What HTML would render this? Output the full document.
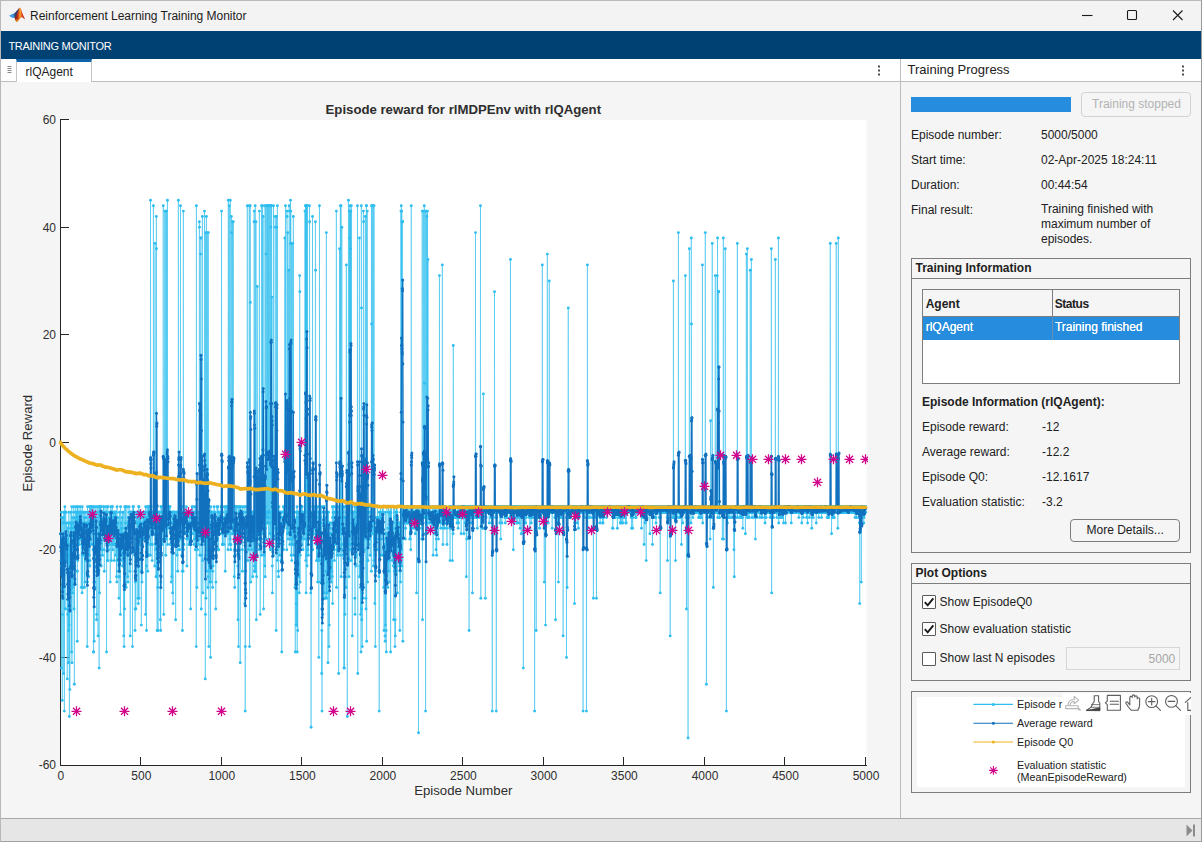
<!DOCTYPE html>
<html lang="en"><head><meta charset="utf-8">
<title>Reinforcement Learning Training Monitor</title>
<style>
*{box-sizing:border-box;margin:0;padding:0}
html,body{width:1202px;height:842px;overflow:hidden;background:#f5f5f5}
body{font-family:"Liberation Sans",sans-serif;font-size:12px;color:#212121;position:relative}
.abs,.abs>*{position:absolute}
#win{position:absolute;left:0;top:0;width:1202px;height:842px;border:1px solid #b9b9b9;border-right-color:#9a9a9a;border-bottom-color:#a0a0a0;overflow:hidden}
#titlebar{left:0;top:0;width:1200px;height:30px;background:#f3f3f3}
#titlebar .t{left:29.1px;top:7px;font-size:12px;line-height:16px;color:#1b1b1b;white-space:nowrap;letter-spacing:-0.03px}
#ribbon{left:0;top:30px;width:1200px;height:28px;background:#004173}
#ribbon .t{left:7.4px;top:8px;font-size:11px;line-height:14px;color:#fff;white-space:nowrap;letter-spacing:-0.27px}
#tabrow{left:0;top:58px;width:1200px;height:23px;background:#fff;border-bottom:1px solid #bdbdbd}
#tab{left:15px;top:58px;width:76px;height:23px;background:#fff;border-left:1px solid #c4c4c4;border-right:1px solid #c4c4c4;border-top:3px solid #0f62a8}
#tab .t{left:8.5px;top:2.5px;font-size:12px;line-height:14px;white-space:nowrap;color:#212121}
.vdiv{left:899px;top:58px;width:1px;height:759px;background:#bdbdbd}
.lbl{white-space:nowrap;font-size:12px;line-height:14px;color:#212121}
.panel{border:1px solid #7d7d7d;background:#f5f5f5}
.phead{left:0;top:0;right:0;height:20px;border-bottom:1px solid #7d7d7d}
.phead span{position:absolute;left:3.5px;top:2px;font-weight:bold;font-size:12px;line-height:14px;white-space:nowrap}
.cb{width:14px;height:14px;border:1px solid #5a5a5a;background:#fff;border-radius:1px}
#status{left:0;top:817px;width:1200px;height:23px;background:#e6e6e6;border-top:1px solid #a8a8a8}
</style></head><body>
<div id="win" class="abs">
<div id="titlebar" class="abs">
<svg style="left:3px;top:1px" width="30" height="26" viewBox="4 2 30 26">
<defs><linearGradient id="mg" gradientUnits="userSpaceOnUse" x1="14.5" y1="0" x2="25" y2="0"><stop offset="0" stop-color="#6e120c"/><stop offset="0.22" stop-color="#a3241a"/><stop offset="0.4" stop-color="#de541c"/><stop offset="0.52" stop-color="#f6a030"/><stop offset="0.6" stop-color="#ee8a26"/><stop offset="0.72" stop-color="#d8441c"/><stop offset="0.86" stop-color="#be2a1c"/><stop offset="1" stop-color="#b8261e"/></linearGradient>
<linearGradient id="mb" gradientUnits="userSpaceOnUse" x1="9" y1="17" x2="18.5" y2="9"><stop offset="0" stop-color="#4aa3e6"/><stop offset="0.55" stop-color="#2f86d6"/><stop offset="1" stop-color="#1c55a8"/></linearGradient>
<linearGradient id="my" gradientUnits="userSpaceOnUse" x1="0" y1="18" x2="0" y2="22"><stop offset="0" stop-color="#f08a20" stop-opacity="0"/><stop offset="1" stop-color="#fac81e"/></linearGradient></defs>
<path d="M9.1 15.6L11.6 14.4L14.4 13.3L16.3 11.5L18 9.6L19 8.4L18.4 12.2L16.6 15L15 17.4L13.4 18L11 17.2Z" fill="url(#mb)"/>
<path d="M14.2 13.9L16.3 11.6L18.2 9.3L19.3 7.8L19 11L17 14.8L15.2 17.8L14.6 17.8Z" fill="#3c2a4a" opacity="0.75"/>
<path d="M19.3 7.8C19.8 7.6 20.3 7.7 20.6 8.1C21.1 9.2 21.4 10.2 21.8 11.4L22.9 14.4L24.1 17.2L25 19.2L25 19.6C24.4 19 23.8 18.4 22.8 17.7C22.2 17.3 21.6 17.3 21.2 17.5C20.5 18 20 18.6 19.5 19.2L17.6 21.4C17.2 21.9 16.6 22 16.3 21.8C15.8 21.3 15.6 20.8 15.4 20.3L14.6 17.9L16.3 15L18 11.6Z" fill="url(#mg)"/>
<path d="M15.4 20.3L14.9 18.8L19.6 19.1L17.6 21.4C17.2 21.9 16.6 22 16.3 21.8C15.8 21.3 15.6 20.8 15.4 20.3Z" fill="url(#my)"/>
</svg>
<div class="t">Reinforcement Learning Training Monitor</div>
<svg style="left:1080px;top:6px" width="115" height="16" viewBox="-5 0 115 16" fill="none" stroke="#1a1a1a" stroke-width="1.1">
<path d="M-4 8.5h10.5"/><rect x="41.5" y="3.5" width="9" height="9" rx="1"/><path d="M87 3.5l9.5 9.5M96.5 3.5l-9.5 9.5"/></svg>
</div>
<div id="ribbon" class="abs"><div class="t">TRAINING MONITOR</div></div>
<div id="tabrow" class="abs">
<svg style="left:6px;top:7px" width="6" height="9" viewBox="0 0 6 9" stroke="#8a8a8a" stroke-width="1"><path d="M0.5 0.5h4M0.5 2.5h4M0.5 4.5h4M0.5 6.5h4"/></svg>
<svg style="left:876px;top:6px" width="4" height="12" viewBox="0 0 4 12" fill="#4d4d4d"><rect x="1" y="0.5" width="2" height="2"/><rect x="1" y="4.5" width="2" height="2"/><rect x="1" y="8.5" width="2" height="2"/></svg>
<svg style="left:1179.7px;top:6px" width="4" height="12" viewBox="0 0 4 12" fill="#4d4d4d"><rect x="1" y="0.5" width="2" height="2"/><rect x="1" y="4.5" width="2" height="2"/><rect x="1" y="8.5" width="2" height="2"/></svg>
<div class="lbl" style="left:906.5px;top:3px;font-size:13px;line-height:15px;color:#212121">Training Progress</div>
</div>
<div id="tab" class="abs"><div class="t">rlQAgent</div></div>
<div class="vdiv abs"></div>
<svg class="chart" style="position:absolute;left:0;top:81px" width="899" height="736" viewBox="1 82 899 736" font-family="'Liberation Sans',sans-serif">
<defs>
<clipPath id="pc"><rect x="59" y="118" width="809" height="649"/></clipPath>
<marker id="mr" markerWidth="4" markerHeight="4" refX="2" refY="2" markerUnits="userSpaceOnUse"><circle cx="2" cy="2" r="1.45" fill="#2FBEEF"/></marker>
<marker id="ma" markerWidth="4" markerHeight="4" refX="2" refY="2" markerUnits="userSpaceOnUse"><circle cx="2" cy="2" r="1.5" fill="#1171BE"/></marker>
</defs>
<rect x="61" y="120" width="805.5" height="645" fill="#fff"/>
<g stroke="#262626" stroke-width="1" fill="none" shape-rendering="crispEdges">
<path d="M60.5 119.5V765.5M60 765.5H866.5"/>
<path d="M140.5 765V757M221.5 765V757M301.5 765V757M382.5 765V757M462.5 765V757M543.5 765V757M623.5 765V757M704.5 765V757M784.5 765V757M865.5 765V757M60 657.5H69M60 549.5H69M60 442.5H69M60 334.5H69M60 227.5H69M60 119.5H69"/>
</g>
<g clip-path="url(#pc)" fill="none" stroke-linejoin="round">
<polyline stroke="#2FBEEF" stroke-width="0.55" marker-start="url(#mr)" marker-mid="url(#mr)" marker-end="url(#mr)" points="60.66,533.7 60.82,560.6 60.98,544.5 61.14,566.0 61.31,668.1 61.47,512.2 61.63,517.6 61.79,560.6 61.95,517.6 62.11,587.5 62.27,700.4 62.43,614.4 62.59,539.1 62.75,549.8 62.92,517.6 63.08,523.0 63.24,539.1 63.40,555.2 63.56,587.5 63.72,673.5 63.88,512.2 64.04,523.0 64.20,512.2 64.36,711.1 64.53,549.8 64.69,533.7 64.85,506.8 65.01,512.2 65.17,609.0 65.33,533.7 65.49,560.6 65.65,512.2 65.81,512.2 65.98,539.1 66.14,555.2 66.30,555.2 66.46,560.6 66.62,523.0 66.78,549.8 66.94,539.1 67.10,555.2 67.26,678.9 67.42,539.1 67.59,609.0 67.75,614.4 67.91,528.3 68.07,555.2 68.23,662.8 68.39,523.0 68.55,592.9 68.71,630.5 68.87,512.2 69.04,625.1 69.20,544.5 69.36,716.5 69.52,549.8 69.68,549.8 69.84,689.6 70.00,549.8 70.16,523.0 70.32,523.0 70.48,555.2 70.65,528.3 70.81,544.5 70.97,512.2 71.13,592.9 71.29,528.3 71.45,523.0 71.61,652.0 71.77,506.8 71.93,662.8 72.09,539.1 72.26,517.6 72.42,587.5 72.58,533.7 72.74,592.9 72.90,549.8 73.06,523.0 73.22,566.0 73.38,549.8 73.54,528.3 73.71,512.2 73.87,506.8 74.03,609.0 74.19,517.6 74.35,684.3 74.51,528.3 74.67,582.1 74.83,582.1 74.99,544.5 75.15,544.5 75.32,539.1 75.48,517.6 75.64,523.0 75.80,506.8 75.96,549.8 76.12,512.2 76.28,544.5 76.44,512.2 76.60,539.1 76.77,539.1 76.93,517.6 77.09,512.2 77.25,641.2 77.41,571.3 77.57,506.8 77.73,560.6 77.89,506.8 78.05,528.3 78.21,555.2 78.38,539.1 78.54,517.6 78.70,523.0 78.86,539.1 79.02,512.2 79.18,539.1 79.34,512.2 79.50,544.5 79.66,523.0 79.82,523.0 79.99,512.2 80.15,506.8 80.31,517.6 80.47,539.1 80.63,539.1 80.79,512.2 80.95,533.7 81.11,512.2 81.27,587.5 81.44,528.3 81.60,512.2 81.76,512.2 81.92,539.1 82.08,592.9 82.24,506.8 82.40,555.2 82.56,523.0 82.72,587.5 82.88,539.1 83.05,533.7 83.21,539.1 83.37,523.0 83.53,539.1 83.69,512.2 83.85,512.2 84.01,533.7 84.17,555.2 84.33,517.6 84.49,587.5 84.66,512.2 84.82,517.6 84.98,582.1 85.14,549.8 85.30,555.2 85.46,560.6 85.62,544.5 85.78,528.3 85.94,512.2 86.11,517.6 86.27,523.0 86.43,549.8 86.59,523.0 86.75,555.2 86.91,560.6 87.07,582.1 87.23,646.6 87.39,582.1 87.55,506.8 87.72,539.1 87.88,528.3 88.04,544.5 88.20,539.1 88.36,523.0 88.52,512.2 88.68,576.7 88.84,549.8 89.00,523.0 89.17,528.3 89.33,555.2 89.49,506.8 89.65,506.8 89.81,566.0 89.97,560.6 90.13,512.2 90.29,512.2 90.45,506.8 90.61,528.3 90.78,517.6 90.94,539.1 91.10,544.5 91.26,506.8 91.42,528.3 91.58,506.8 91.74,544.5 91.90,528.3 92.06,517.6 92.22,512.2 92.39,517.6 92.55,523.0 92.71,512.2 92.87,506.8 93.03,533.7 93.19,549.8 93.35,549.8 93.51,652.0 93.67,652.0 93.84,582.1 94.00,506.8 94.16,641.2 94.32,566.0 94.48,512.2 94.64,544.5 94.80,533.7 94.96,582.1 95.12,587.5 95.28,517.6 95.45,512.2 95.61,544.5 95.77,506.8 95.93,528.3 96.09,512.2 96.25,544.5 96.41,544.5 96.57,619.7 96.73,614.4 96.90,533.7 97.06,566.0 97.22,506.8 97.38,517.6 97.54,571.3 97.70,560.6 97.86,566.0 98.02,635.9 98.18,539.1 98.34,560.6 98.51,549.8 98.67,512.2 98.83,539.1 98.99,506.8 99.15,668.1 99.31,506.8 99.47,523.0 99.63,592.9 99.79,533.7 99.95,539.1 100.12,528.3 100.28,506.8 100.44,517.6 100.60,517.6 100.76,506.8 100.92,506.8 101.08,512.2 101.24,566.0 101.40,512.2 101.57,517.6 101.73,533.7 101.89,517.6 102.05,549.8 102.21,533.7 102.37,517.6 102.53,555.2 102.69,517.6 102.85,528.3 103.01,533.7 103.18,533.7 103.34,506.8 103.50,512.2 103.66,528.3 103.82,512.2 103.98,506.8 104.14,549.8 104.30,571.3 104.46,533.7 104.62,528.3 104.79,517.6 104.95,523.0 105.11,517.6 105.27,512.2 105.43,539.1 105.59,512.2 105.75,523.0 105.91,517.6 106.07,506.8 106.24,512.2 106.40,512.2 106.56,652.0 106.72,517.6 106.88,523.0 107.04,523.0 107.20,539.1 107.36,560.6 107.52,523.0 107.68,506.8 107.85,506.8 108.01,560.6 108.17,533.7 108.33,533.7 108.49,517.6 108.65,549.8 108.81,544.5 108.97,539.1 109.13,544.5 109.30,528.3 109.46,512.2 109.62,528.3 109.78,512.2 109.94,528.3 110.10,512.2 110.26,582.1 110.42,517.6 110.58,517.6 110.74,506.8 110.91,512.2 111.07,512.2 111.23,512.2 111.39,560.6 111.55,512.2 111.71,523.0 111.87,528.3 112.03,544.5 112.19,506.8 112.35,506.8 112.52,523.0 112.68,549.8 112.84,517.6 113.00,517.6 113.16,533.7 113.32,544.5 113.48,512.2 113.64,539.1 113.80,523.0 113.97,544.5 114.13,512.2 114.29,560.6 114.45,517.6 114.61,512.2 114.77,528.3 114.93,528.3 115.09,512.2 115.25,523.0 115.41,512.2 115.58,512.2 115.74,555.2 115.90,544.5 116.06,512.2 116.22,523.0 116.38,533.7 116.54,576.7 116.70,517.6 116.86,582.1 117.03,506.8 117.19,544.5 117.35,560.6 117.51,533.7 117.67,539.1 117.83,523.0 117.99,539.1 118.15,517.6 118.31,549.8 118.47,544.5 118.64,571.3 118.80,533.7 118.96,598.2 119.12,576.7 119.28,576.7 119.44,512.2 119.60,555.2 119.76,549.8 119.92,533.7 120.08,539.1 120.25,539.1 120.41,614.4 120.57,506.8 120.73,533.7 120.89,549.8 121.05,523.0 121.21,560.6 121.37,528.3 121.53,549.8 121.70,539.1 121.86,555.2 122.02,517.6 122.18,549.8 122.34,512.2 122.50,566.0 122.66,539.1 122.82,555.2 122.98,544.5 123.14,533.7 123.31,512.2 123.47,539.1 123.63,544.5 123.79,635.9 123.95,560.6 124.11,646.6 124.27,544.5 124.43,560.6 124.59,609.0 124.75,506.8 124.92,528.3 125.08,539.1 125.24,582.1 125.40,506.8 125.56,523.0 125.72,544.5 125.88,533.7 126.04,533.7 126.20,587.5 126.37,539.1 126.53,549.8 126.69,539.1 126.85,506.8 127.01,539.1 127.17,533.7 127.33,555.2 127.49,539.1 127.65,576.7 127.81,523.0 127.98,582.1 128.14,517.6 128.30,528.3 128.46,539.1 128.62,517.6 128.78,528.3 128.94,512.2 129.10,506.8 129.26,523.0 129.43,549.8 129.59,533.7 129.75,544.5 129.91,571.3 130.07,533.7 130.23,635.9 130.39,512.2 130.55,512.2 130.71,517.6 130.87,512.2 131.04,517.6 131.20,512.2 131.36,517.6 131.52,512.2 131.68,528.3 131.84,523.0 132.00,517.6 132.16,512.2 132.32,539.1 132.48,646.6 132.65,533.7 132.81,528.3 132.97,506.8 133.13,523.0 133.29,512.2 133.45,506.8 133.61,512.2 133.77,517.6 133.93,533.7 134.10,517.6 134.26,523.0 134.42,523.0 134.58,549.8 134.74,555.2 134.90,512.2 135.06,630.5 135.22,609.0 135.38,582.1 135.54,544.5 135.71,533.7 135.87,609.0 136.03,555.2 136.19,566.0 136.35,539.1 136.51,512.2 136.67,523.0 136.83,517.6 136.99,555.2 137.16,549.8 137.32,523.0 137.48,566.0 137.64,512.2 137.80,566.0 137.96,598.2 138.12,549.8 138.28,603.6 138.44,512.2 138.60,533.7 138.77,506.8 138.93,506.8 139.09,598.2 139.25,512.2 139.41,539.1 139.57,523.0 139.73,512.2 139.89,544.5 140.05,517.6 140.21,533.7 140.38,533.7 140.54,523.0 140.70,512.2 140.86,539.1 141.02,571.3 141.18,517.6 141.34,625.1 141.50,539.1 141.66,544.5 141.83,571.3 141.99,582.1 142.15,544.5 142.31,555.2 142.47,523.0 142.63,528.3 142.79,517.6 142.95,539.1 143.11,539.1 143.27,539.1 143.44,539.1 143.60,512.2 143.76,528.3 143.92,517.6 144.08,523.0 144.24,539.1 144.40,512.2 144.56,528.3 144.72,517.6 144.88,523.0 145.05,528.3 145.21,528.3 145.37,512.2 145.53,614.4 145.69,506.8 145.85,523.0 146.01,517.6 146.17,523.0 146.33,566.0 146.50,630.5 146.66,544.5 146.82,517.6 146.98,512.2 147.14,506.8 147.30,549.8 147.46,512.2 147.62,528.3 147.78,571.3 147.94,533.7 148.11,506.8 148.27,544.5 148.43,523.0 148.59,506.8 148.75,555.2 148.91,512.2 149.07,517.6 149.23,506.8 149.39,512.2 149.56,512.2 149.72,523.0 149.88,517.6 150.04,512.2 150.20,512.2 150.36,555.2 150.52,200.3 150.68,506.8 150.84,544.5 151.00,533.7 151.17,512.2 151.33,517.6 151.49,528.3 151.65,533.7 151.81,517.6 151.97,517.6 152.13,560.6 152.29,544.5 152.45,523.0 152.61,512.2 152.78,528.3 152.94,512.2 153.10,512.2 153.26,517.6 153.42,205.7 153.58,512.2 153.74,523.0 153.90,506.8 154.06,512.2 154.23,517.6 154.39,512.2 154.55,517.6 154.71,566.0 154.87,528.3 155.03,243.4 155.19,533.7 155.35,533.7 155.51,549.8 155.67,544.5 155.84,512.2 156.00,576.7 156.16,512.2 156.32,216.5 156.48,248.7 156.64,576.7 156.80,566.0 156.96,506.8 157.12,630.5 157.29,512.2 157.45,528.3 157.61,512.2 157.77,587.5 157.93,555.2 158.09,630.5 158.25,555.2 158.41,517.6 158.57,549.8 158.73,533.7 158.90,517.6 159.06,512.2 159.22,528.3 159.38,523.0 159.54,512.2 159.70,512.2 159.86,517.6 160.02,523.0 160.18,560.6 160.34,619.7 160.51,544.5 160.67,630.5 160.83,582.1 160.99,506.8 161.15,512.2 161.31,533.7 161.47,506.8 161.63,523.0 161.79,523.0 161.96,523.0 162.12,523.0 162.28,544.5 162.44,539.1 162.60,512.2 162.76,523.0 162.92,517.6 163.08,523.0 163.24,205.7 163.40,517.6 163.57,528.3 163.73,614.4 163.89,523.0 164.05,512.2 164.21,528.3 164.37,528.3 164.53,517.6 164.69,211.1 164.85,523.0 165.01,539.1 165.18,517.6 165.34,528.3 165.50,523.0 165.66,211.1 165.82,555.2 165.98,528.3 166.14,533.7 166.30,539.1 166.46,523.0 166.63,211.1 166.79,506.8 166.95,517.6 167.11,512.2 167.27,512.2 167.43,200.3 167.59,544.5 167.75,512.2 167.91,523.0 168.07,528.3 168.24,517.6 168.40,512.2 168.56,512.2 168.72,523.0 168.88,517.6 169.04,506.8 169.20,512.2 169.36,517.6 169.52,506.8 169.69,517.6 169.85,528.3 170.01,506.8 170.17,523.0 170.33,539.1 170.49,544.5 170.65,544.5 170.81,512.2 170.97,528.3 171.13,528.3 171.30,582.1 171.46,533.7 171.62,539.1 171.78,576.7 171.94,512.2 172.10,523.0 172.26,512.2 172.42,512.2 172.58,592.9 172.74,523.0 172.91,533.7 173.07,603.6 173.23,512.2 173.39,512.2 173.55,533.7 173.71,512.2 173.87,523.0 174.03,544.5 174.19,533.7 174.36,517.6 174.52,517.6 174.68,512.2 174.84,512.2 175.00,517.6 175.16,523.0 175.32,544.5 175.48,517.6 175.64,619.7 175.80,528.3 175.97,523.0 176.13,523.0 176.29,512.2 176.45,512.2 176.61,533.7 176.77,533.7 176.93,533.7 177.09,555.2 177.25,528.3 177.42,512.2 177.58,544.5 177.74,571.3 177.90,549.8 178.06,523.0 178.22,539.1 178.38,200.3 178.54,512.2 178.70,523.0 178.86,512.2 179.03,512.2 179.19,539.1 179.35,517.6 179.51,533.7 179.67,523.0 179.83,549.8 179.99,539.1 180.15,533.7 180.31,539.1 180.47,205.7 180.64,517.6 180.80,528.3 180.96,506.8 181.12,528.3 181.28,506.8 181.44,517.6 181.60,506.8 181.76,555.2 181.92,506.8 182.09,517.6 182.25,571.3 182.41,630.5 182.57,555.2 182.73,539.1 182.89,512.2 183.05,571.3 183.21,512.2 183.37,211.1 183.53,549.8 183.70,544.5 183.86,544.5 184.02,517.6 184.18,512.2 184.34,517.6 184.50,528.3 184.66,512.2 184.82,512.2 184.98,523.0 185.14,533.7 185.31,517.6 185.47,512.2 185.63,517.6 185.79,517.6 185.95,517.6 186.11,512.2 186.27,512.2 186.43,506.8 186.59,539.1 186.76,533.7 186.92,566.0 187.08,512.2 187.24,528.3 187.40,517.6 187.56,523.0 187.72,539.1 187.88,528.3 188.04,523.0 188.20,523.0 188.37,528.3 188.53,523.0 188.69,523.0 188.85,544.5 189.01,517.6 189.17,512.2 189.33,539.1 189.49,512.2 189.65,544.5 189.82,517.6 189.98,517.6 190.14,528.3 190.30,528.3 190.46,528.3 190.62,609.0 190.78,528.3 190.94,512.2 191.10,523.0 191.26,533.7 191.43,533.7 191.59,512.2 191.75,517.6 191.91,517.6 192.07,506.8 192.23,517.6 192.39,517.6 192.55,517.6 192.71,506.8 192.87,512.2 193.04,533.7 193.20,523.0 193.36,523.0 193.52,528.3 193.68,512.2 193.84,517.6 194.00,544.5 194.16,517.6 194.32,539.1 194.49,517.6 194.65,528.3 194.81,523.0 194.97,506.8 195.13,512.2 195.29,549.8 195.45,528.3 195.61,523.0 195.77,539.1 195.93,512.2 196.10,512.2 196.26,646.6 196.42,205.7 196.58,528.3 196.74,528.3 196.90,587.5 197.06,517.6 197.22,523.0 197.38,523.0 197.55,549.8 197.71,528.3 197.87,523.0 198.03,533.7 198.19,528.3 198.35,544.5 198.51,512.2 198.67,533.7 198.83,528.3 198.99,523.0 199.16,517.6 199.32,221.8 199.48,227.2 199.64,528.3 199.80,555.2 199.96,523.0 200.12,539.1 200.28,533.7 200.44,512.2 200.60,254.1 200.77,238.0 200.93,238.0 201.09,555.2 201.25,609.0 201.41,512.2 201.57,539.1 201.73,506.8 201.89,506.8 202.05,533.7 202.22,517.6 202.38,216.5 202.54,560.6 202.70,523.0 202.86,592.9 203.02,506.8 203.18,523.0 203.34,539.1 203.50,506.8 203.66,533.7 203.83,517.6 203.99,512.2 204.15,506.8 204.31,528.3 204.47,211.1 204.63,512.2 204.79,544.5 204.95,533.7 205.11,523.0 205.27,678.9 205.44,614.4 205.60,232.6 205.76,555.2 205.92,598.2 206.08,539.1 206.24,571.3 206.40,216.5 206.56,549.8 206.72,512.2 206.89,528.3 207.05,539.1 207.21,555.2 207.37,232.6 207.53,517.6 207.69,555.2 207.85,560.6 208.01,587.5 208.17,576.7 208.33,232.6 208.50,571.3 208.66,528.3 208.82,646.6 208.98,523.0 209.14,544.5 209.30,512.2 209.46,566.0 209.62,549.8 209.78,582.1 209.95,549.8 210.11,528.3 210.27,571.3 210.43,523.0 210.59,657.4 210.75,506.8 210.91,582.1 211.07,512.2 211.23,512.2 211.39,512.2 211.56,523.0 211.72,517.6 211.88,523.0 212.04,512.2 212.20,528.3 212.36,539.1 212.52,512.2 212.68,587.5 212.84,571.3 213.00,544.5 213.17,566.0 213.33,523.0 213.49,539.1 213.65,549.8 213.81,533.7 213.97,528.3 214.13,506.8 214.29,512.2 214.45,512.2 214.62,523.0 214.78,517.6 214.94,517.6 215.10,512.2 215.26,533.7 215.42,533.7 215.58,517.6 215.74,609.0 215.90,582.1 216.06,533.7 216.23,544.5 216.39,539.1 216.55,533.7 216.71,549.8 216.87,523.0 217.03,506.8 217.19,517.6 217.35,539.1 217.51,533.7 217.68,528.3 217.84,506.8 218.00,512.2 218.16,517.6 218.32,528.3 218.48,549.8 218.64,549.8 218.80,528.3 218.96,512.2 219.12,528.3 219.29,528.3 219.45,533.7 219.61,523.0 219.77,512.2 219.93,528.3 220.09,517.6 220.25,523.0 220.41,517.6 220.57,523.0 220.73,512.2 220.90,512.2 221.06,528.3 221.22,506.8 221.38,517.6 221.54,211.1 221.70,506.8 221.86,533.7 222.02,533.7 222.18,523.0 222.35,544.5 222.51,512.2 222.67,544.5 222.83,528.3 222.99,533.7 223.15,523.0 223.31,523.0 223.47,517.6 223.63,528.3 223.79,523.0 223.96,544.5 224.12,517.6 224.28,506.8 224.44,528.3 224.60,517.6 224.76,523.0 224.92,523.0 225.08,528.3 225.24,571.3 225.40,533.7 225.57,506.8 225.73,517.6 225.89,523.0 226.05,533.7 226.21,512.2 226.37,533.7 226.53,512.2 226.69,506.8 226.85,523.0 227.02,512.2 227.18,523.0 227.34,506.8 227.50,517.6 227.66,533.7 227.82,528.3 227.98,549.8 228.14,528.3 228.30,200.3 228.46,528.3 228.63,528.3 228.79,517.6 228.95,512.2 229.11,523.0 229.27,205.7 229.43,523.0 229.59,544.5 229.75,512.2 229.91,523.0 230.08,539.1 230.24,200.3 230.40,517.6 230.56,512.2 230.72,549.8 230.88,544.5 231.04,506.8 231.20,528.3 231.36,216.5 231.52,232.6 231.69,523.0 231.85,512.2 232.01,512.2 232.17,533.7 232.33,528.3 232.49,221.8 232.65,512.2 232.81,533.7 232.97,512.2 233.13,523.0 233.30,221.8 233.46,523.0 233.62,506.8 233.78,528.3 233.94,512.2 234.10,528.3 234.26,576.7 234.42,549.8 234.58,539.1 234.75,587.5 234.91,555.2 235.07,523.0 235.23,544.5 235.39,506.8 235.55,506.8 235.71,512.2 235.87,533.7 236.03,506.8 236.19,528.3 236.36,528.3 236.52,523.0 236.68,506.8 236.84,528.3 237.00,533.7 237.16,533.7 237.32,523.0 237.48,533.7 237.64,528.3 237.81,566.0 237.97,619.7 238.13,506.8 238.29,549.8 238.45,646.6 238.61,549.8 238.77,528.3 238.93,517.6 239.09,506.8 239.25,517.6 239.42,512.2 239.58,517.6 239.74,517.6 239.90,512.2 240.06,506.8 240.22,662.8 240.38,506.8 240.54,517.6 240.70,506.8 240.86,512.2 241.03,512.2 241.19,517.6 241.35,512.2 241.51,512.2 241.67,517.6 241.83,523.0 241.99,523.0 242.15,517.6 242.31,549.8 242.48,571.3 242.64,506.8 242.80,523.0 242.96,517.6 243.12,517.6 243.28,523.0 243.44,523.0 243.60,512.2 243.76,528.3 243.92,528.3 244.09,506.8 244.25,523.0 244.41,523.0 244.57,533.7 244.73,603.6 244.89,528.3 245.05,539.1 245.21,711.1 245.37,646.6 245.53,523.0 245.70,571.3 245.86,512.2 246.02,506.8 246.18,506.8 246.34,533.7 246.50,523.0 246.66,517.6 246.82,528.3 246.98,533.7 247.15,528.3 247.31,205.7 247.47,539.1 247.63,528.3 247.79,560.6 247.95,523.0 248.11,539.1 248.27,549.8 248.43,528.3 248.59,539.1 248.76,506.8 248.92,533.7 249.08,523.0 249.24,205.7 249.40,528.3 249.56,646.6 249.72,506.8 249.88,528.3 250.04,517.6 250.21,205.7 250.37,302.5 250.53,539.1 250.69,517.6 250.85,582.1 251.01,528.3 251.17,523.0 251.33,523.0 251.49,549.8 251.65,517.6 251.82,512.2 251.98,517.6 252.14,523.0 252.30,512.2 252.46,517.6 252.62,512.2 252.78,576.7 252.94,512.2 253.10,517.6 253.26,539.1 253.43,539.1 253.59,555.2 253.75,512.2 253.91,555.2 254.07,221.8 254.23,211.1 254.39,566.0 254.55,571.3 254.71,571.3 254.88,517.6 255.04,571.3 255.20,205.7 255.36,539.1 255.52,571.3 255.68,517.6 255.84,517.6 256.00,221.8 256.16,512.2 256.32,619.7 256.49,517.6 256.65,576.7 256.81,555.2 256.97,506.8 257.13,539.1 257.29,286.4 257.45,539.1 257.61,512.2 257.77,512.2 257.94,506.8 258.10,528.3 258.26,533.7 258.42,533.7 258.58,539.1 258.74,512.2 258.90,528.3 259.06,544.5 259.22,549.8 259.38,211.1 259.55,528.3 259.71,512.2 259.87,523.0 260.03,517.6 260.19,614.4 260.35,523.0 260.51,549.8 260.67,528.3 260.83,528.3 260.99,523.0 261.16,512.2 261.32,512.2 261.48,205.7 261.64,555.2 261.80,528.3 261.96,517.6 262.12,533.7 262.28,506.8 262.44,523.0 262.61,205.7 262.77,506.8 262.93,506.8 263.09,216.5 263.25,506.8 263.41,539.1 263.57,609.0 263.73,528.3 263.89,528.3 264.05,555.2 264.22,512.2 264.38,523.0 264.54,544.5 264.70,539.1 264.86,566.0 265.02,205.7 265.18,576.7 265.34,506.8 265.50,528.3 265.66,512.2 265.83,205.7 265.99,254.1 266.15,539.1 266.31,523.0 266.47,512.2 266.63,517.6 266.79,205.7 266.95,512.2 267.11,523.0 267.28,512.2 267.44,512.2 267.60,205.7 267.76,517.6 267.92,512.2 268.08,523.0 268.24,512.2 268.40,205.7 268.56,539.1 268.72,517.6 268.89,517.6 269.05,512.2 269.21,205.7 269.37,512.2 269.53,512.2 269.69,512.2 269.85,533.7 270.01,205.7 270.17,512.2 270.34,549.8 270.50,523.0 270.66,227.2 270.82,205.7 270.98,205.7 271.14,549.8 271.30,512.2 271.46,544.5 271.62,205.7 271.78,523.0 271.95,297.1 272.11,533.7 272.27,566.0 272.43,592.9 272.59,544.5 272.75,544.5 272.91,512.2 273.07,539.1 273.23,555.2 273.39,528.3 273.56,205.7 273.72,523.0 273.88,523.0 274.04,523.0 274.20,506.8 274.36,512.2 274.52,517.6 274.68,528.3 274.84,539.1 275.01,523.0 275.17,216.5 275.33,227.2 275.49,512.2 275.65,539.1 275.81,517.6 275.97,549.8 276.13,630.5 276.29,528.3 276.45,216.5 276.62,227.2 276.78,549.8 276.94,517.6 277.10,512.2 277.26,560.6 277.42,205.7 277.58,549.8 277.74,533.7 277.90,544.5 278.07,528.3 278.23,512.2 278.39,571.3 278.55,576.7 278.71,528.3 278.87,506.8 279.03,517.6 279.19,512.2 279.35,517.6 279.51,512.2 279.68,528.3 279.84,555.2 280.00,512.2 280.16,539.1 280.32,539.1 280.48,517.6 280.64,512.2 280.80,512.2 280.96,560.6 281.12,555.2 281.29,512.2 281.45,528.3 281.61,560.6 281.77,652.0 281.93,560.6 282.09,549.8 282.25,523.0 282.41,528.3 282.57,544.5 282.74,517.6 282.90,517.6 283.06,544.5 283.22,512.2 283.38,506.8 283.54,549.8 283.70,517.6 283.86,506.8 284.02,528.3 284.18,523.0 284.35,512.2 284.51,512.2 284.67,523.0 284.83,238.0 284.99,512.2 285.15,506.8 285.31,506.8 285.47,205.7 285.63,523.0 285.79,512.2 285.96,512.2 286.12,512.2 286.28,523.0 286.44,517.6 286.60,506.8 286.76,549.8 286.92,211.1 287.08,216.5 287.24,528.3 287.41,533.7 287.57,533.7 287.73,232.6 287.89,523.0 288.05,539.1 288.21,517.6 288.37,517.6 288.53,517.6 288.69,533.7 288.85,270.2 289.02,523.0 289.18,205.7 289.34,211.1 289.50,512.2 289.66,539.1 289.82,544.5 289.98,533.7 290.14,533.7 290.30,523.0 290.47,200.3 290.63,243.4 290.79,211.1 290.95,539.1 291.11,506.8 291.27,555.2 291.43,243.4 291.59,539.1 291.75,560.6 291.91,506.8 292.08,517.6 292.24,517.6 292.40,539.1 292.56,544.5 292.72,243.4 292.88,533.7 293.04,528.3 293.20,539.1 293.36,216.5 293.52,544.5 293.69,555.2 293.85,528.3 294.01,512.2 294.17,517.6 294.33,523.0 294.49,523.0 294.65,523.0 294.81,523.0 294.97,587.5 295.14,528.3 295.30,652.0 295.46,555.2 295.62,544.5 295.78,587.5 295.94,582.1 296.10,625.1 296.26,603.6 296.42,512.2 296.58,555.2 296.75,625.1 296.91,512.2 297.07,506.8 297.23,652.0 297.39,517.6 297.55,517.6 297.71,630.5 297.87,555.2 298.03,533.7 298.20,512.2 298.36,528.3 298.52,512.2 298.68,576.7 298.84,539.1 299.00,517.6 299.16,533.7 299.32,592.9 299.48,533.7 299.64,275.6 299.81,291.7 299.97,549.8 300.13,582.1 300.29,555.2 300.45,549.8 300.61,512.2 300.77,528.3 300.93,539.1 301.09,512.2 301.25,512.2 301.42,506.8 301.58,523.0 301.74,517.6 301.90,544.5 302.06,512.2 302.22,506.8 302.38,523.0 302.54,512.2 302.70,517.6 302.87,523.0 303.03,549.8 303.19,523.0 303.35,539.1 303.51,528.3 303.67,528.3 303.83,517.6 303.99,512.2 304.15,533.7 304.31,539.1 304.48,512.2 304.64,517.6 304.80,523.0 304.96,211.1 305.12,512.2 305.28,512.2 305.44,205.7 305.60,528.3 305.76,560.6 305.92,205.7 306.09,592.9 306.25,485.3 306.41,205.7 306.57,205.7 306.73,555.2 306.89,205.7 307.05,566.0 307.21,539.1 307.37,205.7 307.54,528.3 307.70,549.8 307.86,549.8 308.02,533.7 308.18,533.7 308.34,555.2 308.50,517.6 308.66,533.7 308.82,512.2 308.98,512.2 309.15,512.2 309.31,528.3 309.47,205.7 309.63,221.8 309.79,533.7 309.95,512.2 310.11,517.6 310.27,506.8 310.43,512.2 310.60,517.6 310.76,592.9 310.92,517.6 311.08,727.3 311.24,587.5 311.40,512.2 311.56,528.3 311.72,523.0 311.88,533.7 312.04,549.8 312.21,539.1 312.37,512.2 312.53,216.5 312.69,549.8 312.85,523.0 313.01,512.2 313.17,517.6 313.33,533.7 313.49,528.3 313.65,506.8 313.82,528.3 313.98,512.2 314.14,517.6 314.30,512.2 314.46,512.2 314.62,506.8 314.78,517.6 314.94,539.1 315.10,539.1 315.27,528.3 315.43,221.8 315.59,270.2 315.75,528.3 315.91,533.7 316.07,544.5 316.23,523.0 316.39,523.0 316.55,560.6 316.71,528.3 316.88,533.7 317.04,560.6 317.20,533.7 317.36,528.3 317.52,582.1 317.68,506.8 317.84,517.6 318.00,533.7 318.16,523.0 318.33,528.3 318.49,560.6 318.65,512.2 318.81,657.4 318.97,512.2 319.13,523.0 319.29,523.0 319.45,205.7 319.61,560.6 319.77,555.2 319.94,528.3 320.10,512.2 320.26,582.1 320.42,549.8 320.58,539.1 320.74,528.3 320.90,517.6 321.06,533.7 321.22,582.1 321.38,506.8 321.55,523.0 321.71,673.5 321.87,630.5 322.03,711.1 322.19,549.8 322.35,549.8 322.51,603.6 322.67,582.1 322.83,614.4 323.00,566.0 323.16,512.2 323.32,506.8 323.48,506.8 323.64,506.8 323.80,506.8 323.96,598.2 324.12,512.2 324.28,592.9 324.44,560.6 324.61,512.2 324.77,533.7 324.93,544.5 325.09,539.1 325.25,517.6 325.41,533.7 325.57,523.0 325.73,598.2 325.89,571.3 326.05,544.5 326.22,555.2 326.38,232.6 326.54,598.2 326.70,528.3 326.86,512.2 327.02,592.9 327.18,523.0 327.34,512.2 327.50,555.2 327.67,560.6 327.83,582.1 327.99,662.8 328.15,512.2 328.31,544.5 328.47,512.2 328.63,533.7 328.79,523.0 328.95,646.6 329.11,566.0 329.28,625.1 329.44,571.3 329.60,544.5 329.76,533.7 329.92,560.6 330.08,523.0 330.24,528.3 330.40,576.7 330.56,549.8 330.73,571.3 330.89,555.2 331.05,533.7 331.21,533.7 331.37,582.1 331.53,544.5 331.69,571.3 331.85,549.8 332.01,523.0 332.17,576.7 332.34,506.8 332.50,517.6 332.66,603.6 332.82,544.5 332.98,533.7 333.14,539.1 333.30,512.2 333.46,517.6 333.62,539.1 333.78,506.8 333.95,549.8 334.11,533.7 334.27,544.5 334.43,560.6 334.59,523.0 334.75,544.5 334.91,517.6 335.07,512.2 335.23,533.7 335.40,517.6 335.56,506.8 335.72,539.1 335.88,512.2 336.04,528.3 336.20,523.0 336.36,211.1 336.52,587.5 336.68,549.8 336.84,512.2 337.01,512.2 337.17,555.2 337.33,528.3 337.49,539.1 337.65,523.0 337.81,517.6 337.97,539.1 338.13,506.8 338.29,512.2 338.46,523.0 338.62,673.5 338.78,517.6 338.94,517.6 339.10,512.2 339.26,523.0 339.42,517.6 339.58,248.7 339.74,506.8 339.90,539.1 340.07,555.2 340.23,528.3 340.39,205.7 340.55,533.7 340.71,512.2 340.87,533.7 341.03,205.7 341.19,576.7 341.35,506.8 341.51,544.5 341.68,549.8 341.84,227.2 342.00,528.3 342.16,528.3 342.32,533.7 342.48,512.2 342.64,517.6 342.80,528.3 342.96,555.2 343.13,555.2 343.29,506.8 343.45,506.8 343.61,544.5 343.77,528.3 343.93,668.1 344.09,544.5 344.25,576.7 344.41,668.1 344.57,517.6 344.74,506.8 344.90,614.4 345.06,539.1 345.22,517.6 345.38,549.8 345.54,549.8 345.70,528.3 345.86,517.6 346.02,587.5 346.18,533.7 346.35,264.9 346.51,512.2 346.67,533.7 346.83,517.6 346.99,523.0 347.15,533.7 347.31,716.5 347.47,528.3 347.63,523.0 347.80,512.2 347.96,512.2 348.12,512.2 348.28,528.3 348.44,200.3 348.60,512.2 348.76,506.8 348.92,576.7 349.08,523.0 349.24,560.6 349.41,211.1 349.57,238.0 349.73,544.5 349.89,205.7 350.05,549.8 350.21,533.7 350.37,211.1 350.53,248.7 350.69,512.2 350.86,211.1 351.02,544.5 351.18,560.6 351.34,205.7 351.50,533.7 351.66,523.0 351.82,512.2 351.98,539.1 352.14,549.8 352.30,635.9 352.47,533.7 352.63,512.2 352.79,512.2 352.95,523.0 353.11,539.1 353.27,512.2 353.43,544.5 353.59,533.7 353.75,539.1 353.91,512.2 354.08,523.0 354.24,533.7 354.40,549.8 354.56,549.8 354.72,506.8 354.88,598.2 355.04,614.4 355.20,517.6 355.36,506.8 355.53,523.0 355.69,566.0 355.85,544.5 356.01,523.0 356.17,533.7 356.33,555.2 356.49,506.8 356.65,528.3 356.81,512.2 356.97,544.5 357.14,533.7 357.30,512.2 357.46,205.7 357.62,528.3 357.78,673.5 357.94,512.2 358.10,523.0 358.26,512.2 358.42,506.8 358.59,512.2 358.75,506.8 358.91,512.2 359.07,523.0 359.23,528.3 359.39,238.0 359.55,576.7 359.71,566.0 359.87,576.7 360.03,512.2 360.20,539.1 360.36,523.0 360.52,587.5 360.68,614.4 360.84,544.5 361.00,652.0 361.16,533.7 361.32,205.7 361.48,307.9 361.64,609.0 361.81,619.7 361.97,539.1 362.13,598.2 362.29,646.6 362.45,544.5 362.61,592.9 362.77,555.2 362.93,598.2 363.09,549.8 363.26,463.8 363.42,211.1 363.58,221.8 363.74,587.5 363.90,533.7 364.06,523.0 364.22,512.2 364.38,506.8 364.54,549.8 364.70,528.3 364.87,539.1 365.03,533.7 365.19,528.3 365.35,216.5 365.51,512.2 365.67,506.8 365.83,598.2 365.99,609.0 366.15,458.4 366.31,205.7 366.48,205.7 366.64,641.2 366.80,512.2 366.96,523.0 367.12,506.8 367.28,211.1 367.44,560.6 367.60,582.1 367.76,512.2 367.93,560.6 368.09,523.0 368.25,517.6 368.41,528.3 368.57,528.3 368.73,544.5 368.89,506.8 369.05,512.2 369.21,523.0 369.37,528.3 369.54,539.1 369.70,523.0 369.86,528.3 370.02,533.7 370.18,555.2 370.34,512.2 370.50,523.0 370.66,528.3 370.82,506.8 370.99,512.2 371.15,512.2 371.31,571.3 371.47,205.7 371.63,324.0 371.79,523.0 371.95,528.3 372.11,533.7 372.27,205.7 372.43,512.2 372.60,517.6 372.76,523.0 372.92,517.6 373.08,533.7 373.24,205.7 373.40,566.0 373.56,512.2 373.72,528.3 373.88,560.6 374.04,205.7 374.21,517.6 374.37,539.1 374.53,517.6 374.69,544.5 374.85,603.6 375.01,528.3 375.17,555.2 375.33,646.6 375.49,571.3 375.66,528.3 375.82,539.1 375.98,549.8 376.14,523.0 376.30,517.6 376.46,528.3 376.62,539.1 376.78,533.7 376.94,517.6 377.10,528.3 377.27,528.3 377.43,506.8 377.59,517.6 377.75,523.0 377.91,549.8 378.07,523.0 378.23,517.6 378.39,517.6 378.55,517.6 378.72,528.3 378.88,576.7 379.04,523.0 379.20,711.1 379.36,512.2 379.52,539.1 379.68,512.2 379.84,523.0 380.00,523.0 380.16,528.3 380.33,533.7 380.49,506.8 380.65,528.3 380.81,517.6 380.97,533.7 381.13,528.3 381.29,555.2 381.45,517.6 381.61,517.6 381.77,512.2 381.94,539.1 382.10,517.6 382.26,517.6 382.42,506.8 382.58,517.6 382.74,512.2 382.90,517.6 383.06,555.2 383.22,506.8 383.39,555.2 383.55,533.7 383.71,587.5 383.87,549.8 384.03,630.5 384.19,549.8 384.35,544.5 384.51,571.3 384.67,560.6 384.83,549.8 385.00,635.9 385.16,641.2 385.32,512.2 385.48,625.1 385.64,539.1 385.80,549.8 385.96,533.7 386.12,630.5 386.28,652.0 386.44,555.2 386.61,544.5 386.77,533.7 386.93,506.8 387.09,549.8 387.25,555.2 387.41,560.6 387.57,549.8 387.73,539.1 387.89,587.5 388.06,555.2 388.22,528.3 388.38,512.2 388.54,506.8 388.70,571.3 388.86,544.5 389.02,560.6 389.18,582.1 389.34,528.3 389.50,528.3 389.67,512.2 389.83,539.1 389.99,512.2 390.15,512.2 390.31,523.0 390.47,506.8 390.63,652.0 390.79,512.2 390.95,539.1 391.12,523.0 391.28,528.3 391.44,506.8 391.60,528.3 391.76,523.0 391.92,528.3 392.08,523.0 392.24,560.6 392.40,533.7 392.56,544.5 392.73,528.3 392.89,555.2 393.05,544.5 393.21,528.3 393.37,566.0 393.53,506.8 393.69,619.7 393.85,544.5 394.01,539.1 394.17,539.1 394.34,571.3 394.50,544.5 394.66,506.8 394.82,517.6 394.98,646.6 395.14,619.7 395.30,635.9 395.46,560.6 395.62,512.2 395.79,544.5 395.95,523.0 396.11,528.3 396.27,571.3 396.43,506.8 396.59,512.2 396.75,539.1 396.91,512.2 397.07,506.8 397.23,528.3 397.40,592.9 397.56,517.6 397.72,523.0 397.88,533.7 398.04,523.0 398.20,539.1 398.36,555.2 398.52,539.1 398.68,555.2 398.85,544.5 399.01,539.1 399.17,523.0 399.33,533.7 399.49,566.0 399.65,560.6 399.81,630.5 399.97,523.0 400.13,571.3 400.29,523.0 400.46,539.1 400.62,582.1 400.78,512.2 400.94,211.1 401.10,549.8 401.26,205.7 401.42,211.1 401.58,549.8 401.74,211.1 401.90,566.0 402.07,221.8 402.23,221.8 402.39,221.8 402.55,221.8 402.71,512.2 402.87,641.2 403.03,512.2 403.19,517.6 403.35,506.8 403.52,512.2 403.68,523.0 403.84,512.2 404.00,523.0 404.16,512.2 404.32,506.8 404.48,506.8 404.64,517.6 404.80,512.2 404.96,512.2 405.13,512.2 405.29,512.2 405.45,539.1 405.61,528.3 405.77,506.8 405.93,506.8 406.09,506.8 406.25,517.6 406.41,512.2 406.57,523.0 406.74,512.2 406.90,512.2 407.06,512.2 407.22,523.0 407.38,512.2 407.54,512.2 407.70,506.8 407.86,523.0 408.02,512.2 408.19,512.2 408.35,517.6 408.51,512.2 408.67,506.8 408.83,512.2 408.99,523.0 409.15,517.6 409.31,512.2 409.47,517.6 409.63,539.1 409.80,512.2 409.96,506.8 410.12,523.0 410.28,533.7 410.44,539.1 410.60,523.0 410.76,549.8 410.92,517.6 411.08,528.3 411.25,205.7 411.41,506.8 411.57,517.6 411.73,528.3 411.89,506.8 412.05,517.6 412.21,517.6 412.37,512.2 412.53,517.6 412.69,506.8 412.86,523.0 413.02,512.2 413.18,517.6 413.34,528.3 413.50,512.2 413.66,512.2 413.82,506.8 413.98,512.2 414.14,517.6 414.30,517.6 414.47,517.6 414.63,512.2 414.79,523.0 414.95,523.0 415.11,512.2 415.27,533.7 415.43,512.2 415.59,517.6 415.75,506.8 415.92,517.6 416.08,512.2 416.24,506.8 416.40,512.2 416.56,592.9 416.72,512.2 416.88,506.8 417.04,517.6 417.20,517.6 417.36,512.2 417.53,512.2 417.69,506.8 417.85,512.2 418.01,512.2 418.17,512.2 418.33,523.0 418.49,732.7 418.65,517.6 418.81,523.0 418.98,506.8 419.14,528.3 419.30,512.2 419.46,512.2 419.62,517.6 419.78,506.8 419.94,523.0 420.10,517.6 420.26,517.6 420.42,512.2 420.59,523.0 420.75,523.0 420.91,523.0 421.07,506.8 421.23,517.6 421.39,512.2 421.55,528.3 421.71,539.1 421.87,523.0 422.03,512.2 422.20,211.1 422.36,539.1 422.52,619.7 422.68,512.2 422.84,506.8 423.00,517.6 423.16,517.6 423.32,211.1 423.48,517.6 423.65,506.8 423.81,512.2 423.97,512.2 424.13,517.6 424.29,205.7 424.45,383.2 424.61,517.6 424.77,517.6 424.93,512.2 425.09,512.2 425.26,211.1 425.42,533.7 425.58,711.1 425.74,517.6 425.90,523.0 426.06,523.0 426.22,211.1 426.38,517.6 426.54,523.0 426.70,517.6 426.87,216.5 427.03,517.6 427.19,512.2 427.35,533.7 427.51,211.1 427.67,517.6 427.83,528.3 427.99,259.5 428.15,512.2 428.32,517.6 428.48,512.2 428.64,512.2 428.80,512.2 428.96,506.8 429.12,517.6 429.28,523.0 429.44,517.6 429.60,512.2 429.76,523.0 429.93,517.6 430.09,506.8 430.25,512.2 430.41,517.6 430.57,512.2 430.73,517.6 430.89,517.6 431.05,512.2 431.21,512.2 431.38,517.6 431.54,528.3 431.70,523.0 431.86,523.0 432.02,517.6 432.18,512.2 432.34,512.2 432.50,506.8 432.66,512.2 432.82,517.6 432.99,512.2 433.15,555.2 433.31,517.6 433.47,506.8 433.63,523.0 433.79,523.0 433.95,517.6 434.11,517.6 434.27,517.6 434.43,506.8 434.60,533.7 434.76,512.2 434.92,512.2 435.08,512.2 435.24,506.8 435.40,512.2 435.56,533.7 435.72,528.3 435.88,512.2 436.05,549.8 436.21,539.1 436.37,512.2 436.53,517.6 436.69,555.2 436.85,506.8 437.01,517.6 437.17,523.0 437.33,523.0 437.49,517.6 437.66,523.0 437.82,512.2 437.98,512.2 438.14,506.8 438.30,517.6 438.46,539.1 438.62,517.6 438.78,523.0 438.94,512.2 439.11,512.2 439.27,506.8 439.43,275.6 439.59,512.2 439.75,517.6 439.91,512.2 440.07,506.8 440.23,506.8 440.39,512.2 440.55,512.2 440.72,528.3 440.88,506.8 441.04,506.8 441.20,512.2 441.36,523.0 441.52,512.2 441.68,512.2 441.84,512.2 442.00,517.6 442.16,512.2 442.33,264.9 442.49,506.8 442.65,517.6 442.81,517.6 442.97,544.5 443.13,512.2 443.29,528.3 443.45,506.8 443.61,512.2 443.78,506.8 443.94,523.0 444.10,512.2 444.26,528.3 444.42,512.2 444.58,506.8 444.74,512.2 444.90,512.2 445.06,517.6 445.22,517.6 445.39,512.2 445.55,506.8 445.71,506.8 445.87,512.2 446.03,512.2 446.19,523.0 446.35,517.6 446.51,528.3 446.67,517.6 446.83,512.2 447.00,544.5 447.16,512.2 447.32,512.2 447.48,512.2 447.64,523.0 447.80,512.2 447.96,512.2 448.12,512.2 448.28,517.6 448.45,512.2 448.61,512.2 448.77,512.2 448.93,512.2 449.09,523.0 449.25,517.6 449.41,506.8 449.57,512.2 449.73,528.3 449.89,512.2 450.06,560.6 450.22,517.6 450.38,506.8 450.54,512.2 450.70,523.0 450.86,528.3 451.02,506.8 451.18,523.0 451.34,506.8 451.51,528.3 451.67,517.6 451.83,512.2 451.99,512.2 452.15,517.6 452.31,523.0 452.47,560.6 452.63,517.6 452.79,517.6 452.95,517.6 453.12,533.7 453.28,345.5 453.44,512.2 453.60,512.2 453.76,506.8 453.92,506.8 454.08,512.2 454.24,512.2 454.40,512.2 454.56,512.2 454.73,517.6 454.89,512.2 455.05,506.8 455.21,517.6 455.37,517.6 455.53,512.2 455.69,512.2 455.85,512.2 456.01,517.6 456.18,512.2 456.34,512.2 456.50,517.6 456.66,512.2 456.82,512.2 456.98,523.0 457.14,512.2 457.30,517.6 457.46,512.2 457.62,506.8 457.79,512.2 457.95,517.6 458.11,528.3 458.27,506.8 458.43,506.8 458.59,523.0 458.75,517.6 458.91,512.2 459.07,517.6 459.24,506.8 459.40,517.6 459.56,512.2 459.72,512.2 459.88,512.2 460.04,506.8 460.20,512.2 460.36,517.6 460.52,506.8 460.68,506.8 460.85,517.6 461.01,512.2 461.17,533.7 461.33,506.8 461.49,506.8 461.65,512.2 461.81,512.2 461.97,512.2 462.13,512.2 462.29,517.6 462.46,506.8 462.62,512.2 462.78,506.8 462.94,506.8 463.10,506.8 463.26,506.8 463.42,506.8 463.58,517.6 463.74,506.8 463.91,533.7 464.07,506.8 464.23,506.8 464.39,517.6 464.55,512.2 464.71,512.2 464.87,512.2 465.03,512.2 465.19,523.0 465.35,523.0 465.52,506.8 465.68,512.2 465.84,512.2 466.00,512.2 466.16,517.6 466.32,576.7 466.48,506.8 466.64,506.8 466.80,539.1 466.96,517.6 467.13,517.6 467.29,517.6 467.45,512.2 467.61,506.8 467.77,523.0 467.93,506.8 468.09,517.6 468.25,506.8 468.41,506.8 468.58,517.6 468.74,517.6 468.90,512.2 469.06,630.5 469.22,512.2 469.38,512.2 469.54,523.0 469.70,506.8 469.86,506.8 470.02,512.2 470.19,512.2 470.35,512.2 470.51,512.2 470.67,517.6 470.83,512.2 470.99,517.6 471.15,512.2 471.31,506.8 471.47,512.2 471.64,517.6 471.80,506.8 471.96,512.2 472.12,523.0 472.28,506.8 472.44,592.9 472.60,506.8 472.76,523.0 472.92,512.2 473.08,506.8 473.25,512.2 473.41,506.8 473.57,512.2 473.73,512.2 473.89,506.8 474.05,506.8 474.21,517.6 474.37,512.2 474.53,506.8 474.69,506.8 474.86,512.2 475.02,506.8 475.18,517.6 475.34,512.2 475.50,232.6 475.66,512.2 475.82,506.8 475.98,506.8 476.14,512.2 476.31,506.8 476.47,506.8 476.63,517.6 476.79,506.8 476.95,512.2 477.11,517.6 477.27,528.3 477.43,517.6 477.59,506.8 477.75,512.2 477.92,512.2 478.08,506.8 478.24,506.8 478.40,506.8 478.56,512.2 478.72,512.2 478.88,512.2 479.04,506.8 479.20,506.8 479.37,517.6 479.53,506.8 479.69,512.2 479.85,506.8 480.01,506.8 480.17,506.8 480.33,506.8 480.49,205.7 480.65,506.8 480.81,598.2 480.98,512.2 481.14,506.8 481.30,506.8 481.46,506.8 481.62,506.8 481.78,506.8 481.94,512.2 482.10,506.8 482.26,523.0 482.42,528.3 482.59,528.3 482.75,523.0 482.91,506.8 483.07,512.2 483.23,512.2 483.39,393.9 483.55,512.2 483.71,512.2 483.87,506.8 484.04,506.8 484.20,506.8 484.36,512.2 484.52,506.8 484.68,512.2 484.84,506.8 485.00,512.2 485.16,512.2 485.32,598.2 485.48,512.2 485.65,506.8 485.81,506.8 485.97,512.2 486.13,517.6 486.29,506.8 486.45,512.2 486.61,506.8 486.77,506.8 486.93,512.2 487.09,512.2 487.26,506.8 487.42,512.2 487.58,512.2 487.74,506.8 487.90,506.8 488.06,506.8 488.22,506.8 488.38,512.2 488.54,512.2 488.71,506.8 488.87,512.2 489.03,512.2 489.19,523.0 489.35,512.2 489.51,506.8 489.67,506.8 489.83,512.2 489.99,506.8 490.15,512.2 490.32,506.8 490.48,512.2 490.64,506.8 490.80,512.2 490.96,517.6 491.12,517.6 491.28,506.8 491.44,512.2 491.60,523.0 491.77,517.6 491.93,512.2 492.09,512.2 492.25,711.1 492.41,512.2 492.57,512.2 492.73,506.8 492.89,512.2 493.05,512.2 493.21,512.2 493.38,512.2 493.54,512.2 493.70,506.8 493.86,512.2 494.02,506.8 494.18,506.8 494.34,512.2 494.50,291.7 494.66,506.8 494.82,512.2 494.99,506.8 495.15,506.8 495.31,517.6 495.47,506.8 495.63,506.8 495.79,506.8 495.95,512.2 496.11,512.2 496.27,711.1 496.44,506.8 496.60,506.8 496.76,517.6 496.92,506.8 497.08,512.2 497.24,506.8 497.40,506.8 497.56,512.2 497.72,512.2 497.88,512.2 498.05,506.8 498.21,506.8 498.37,506.8 498.53,512.2 498.69,506.8 498.85,512.2 499.01,512.2 499.17,512.2 499.33,506.8 499.50,512.2 499.66,506.8 499.82,523.0 499.98,506.8 500.14,512.2 500.30,506.8 500.46,506.8 500.62,506.8 500.78,539.1 500.94,512.2 501.11,512.2 501.27,512.2 501.43,506.8 501.59,512.2 501.75,506.8 501.91,523.0 502.07,512.2 502.23,512.2 502.39,512.2 502.55,512.2 502.72,512.2 502.88,512.2 503.04,506.8 503.20,512.2 503.36,512.2 503.52,512.2 503.68,512.2 503.84,506.8 504.00,506.8 504.17,506.8 504.33,506.8 504.49,512.2 504.65,512.2 504.81,517.6 504.97,506.8 505.13,517.6 505.29,523.0 505.45,512.2 505.61,517.6 505.78,506.8 505.94,517.6 506.10,506.8 506.26,517.6 506.42,512.2 506.58,512.2 506.74,506.8 506.90,517.6 507.06,506.8 507.22,506.8 507.39,512.2 507.55,512.2 507.71,506.8 507.87,512.2 508.03,512.2 508.19,506.8 508.35,506.8 508.51,512.2 508.67,506.8 508.84,512.2 509.00,506.8 509.16,512.2 509.32,506.8 509.48,512.2 509.64,512.2 509.80,517.6 509.96,506.8 510.12,512.2 510.28,506.8 510.45,259.5 510.61,506.8 510.77,517.6 510.93,512.2 511.09,512.2 511.25,517.6 511.41,517.6 511.57,506.8 511.73,506.8 511.90,512.2 512.06,512.2 512.22,506.8 512.38,512.2 512.54,512.2 512.70,506.8 512.86,512.2 513.02,512.2 513.18,512.2 513.34,549.8 513.51,517.6 513.67,506.8 513.83,506.8 513.99,512.2 514.15,523.0 514.31,506.8 514.47,512.2 514.63,506.8 514.79,512.2 514.95,506.8 515.12,512.2 515.28,512.2 515.44,512.2 515.60,506.8 515.76,506.8 515.92,517.6 516.08,512.2 516.24,512.2 516.40,506.8 516.57,512.2 516.73,506.8 516.89,523.0 517.05,512.2 517.21,523.0 517.37,506.8 517.53,506.8 517.69,512.2 517.85,506.8 518.01,512.2 518.18,512.2 518.34,506.8 518.50,512.2 518.66,506.8 518.82,517.6 518.98,512.2 519.14,512.2 519.30,523.0 519.46,506.8 519.63,512.2 519.79,506.8 519.95,512.2 520.11,528.3 520.27,512.2 520.43,512.2 520.59,512.2 520.75,512.2 520.91,506.8 521.07,506.8 521.24,533.7 521.40,512.2 521.56,512.2 521.72,512.2 521.88,517.6 522.04,517.6 522.20,506.8 522.36,512.2 522.52,517.6 522.68,506.8 522.85,506.8 523.01,517.6 523.17,512.2 523.33,668.1 523.49,512.2 523.65,506.8 523.81,512.2 523.97,506.8 524.13,506.8 524.30,512.2 524.46,517.6 524.62,506.8 524.78,523.0 524.94,512.2 525.10,506.8 525.26,512.2 525.42,512.2 525.58,506.8 525.74,523.0 525.91,512.2 526.07,506.8 526.23,517.6 526.39,512.2 526.55,506.8 526.71,512.2 526.87,512.2 527.03,506.8 527.19,506.8 527.35,512.2 527.52,512.2 527.68,512.2 527.84,512.2 528.00,512.2 528.16,512.2 528.32,512.2 528.48,512.2 528.64,506.8 528.80,506.8 528.97,512.2 529.13,517.6 529.29,512.2 529.45,506.8 529.61,512.2 529.77,528.3 529.93,512.2 530.09,517.6 530.25,506.8 530.41,512.2 530.58,512.2 530.74,512.2 530.90,506.8 531.06,506.8 531.22,523.0 531.38,517.6 531.54,506.8 531.70,506.8 531.86,512.2 532.03,506.8 532.19,517.6 532.35,506.8 532.51,517.6 532.67,517.6 532.83,512.2 532.99,506.8 533.15,506.8 533.31,512.2 533.47,512.2 533.64,506.8 533.80,506.8 533.96,512.2 534.12,512.2 534.28,506.8 534.44,506.8 534.60,711.1 534.76,506.8 534.92,512.2 535.08,506.8 535.25,517.6 535.41,506.8 535.57,506.8 535.73,506.8 535.89,506.8 536.05,506.8 536.21,630.5 536.37,512.2 536.53,517.6 536.70,506.8 536.86,506.8 537.02,512.2 537.18,512.2 537.34,512.2 537.50,506.8 537.66,506.8 537.82,512.2 537.98,506.8 538.14,506.8 538.31,517.6 538.47,517.6 538.63,506.8 538.79,517.6 538.95,517.6 539.11,512.2 539.27,517.6 539.43,512.2 539.59,528.3 539.76,512.2 539.92,506.8 540.08,517.6 540.24,506.8 540.40,506.8 540.56,506.8 540.72,506.8 540.88,512.2 541.04,517.6 541.20,506.8 541.37,512.2 541.53,506.8 541.69,512.2 541.85,512.2 542.01,512.2 542.17,506.8 542.33,264.9 542.49,512.2 542.65,506.8 542.81,506.8 542.98,506.8 543.14,506.8 543.30,506.8 543.46,512.2 543.62,512.2 543.78,523.0 543.94,512.2 544.10,512.2 544.26,582.1 544.43,506.8 544.59,512.2 544.75,506.8 544.91,506.8 545.07,512.2 545.23,512.2 545.39,512.2 545.55,625.1 545.71,517.6 545.87,506.8 546.04,512.2 546.20,512.2 546.36,506.8 546.52,517.6 546.68,523.0 546.84,506.8 547.00,517.6 547.16,512.2 547.32,254.1 547.48,512.2 547.65,512.2 547.81,517.6 547.97,512.2 548.13,517.6 548.29,523.0 548.45,512.2 548.61,506.8 548.77,506.8 548.93,512.2 549.10,506.8 549.26,281.0 549.42,512.2 549.58,506.8 549.74,512.2 549.90,512.2 550.06,512.2 550.22,506.8 550.38,506.8 550.54,512.2 550.71,512.2 550.87,506.8 551.03,512.2 551.19,512.2 551.35,506.8 551.51,506.8 551.67,506.8 551.83,506.8 551.99,506.8 552.16,528.3 552.32,506.8 552.48,506.8 552.64,512.2 552.80,506.8 552.96,506.8 553.12,512.2 553.28,512.2 553.44,506.8 553.60,512.2 553.77,512.2 553.93,512.2 554.09,512.2 554.25,506.8 554.41,506.8 554.57,512.2 554.73,517.6 554.89,506.8 555.05,506.8 555.21,506.8 555.38,506.8 555.54,619.7 555.70,506.8 555.86,512.2 556.02,512.2 556.18,517.6 556.34,506.8 556.50,506.8 556.66,512.2 556.83,506.8 556.99,528.3 557.15,506.8 557.31,523.0 557.47,506.8 557.63,512.2 557.79,512.2 557.95,506.8 558.11,506.8 558.27,506.8 558.44,582.1 558.60,517.6 558.76,506.8 558.92,506.8 559.08,506.8 559.24,506.8 559.40,512.2 559.56,517.6 559.72,506.8 559.89,512.2 560.05,512.2 560.21,506.8 560.37,506.8 560.53,512.2 560.69,517.6 560.85,517.6 561.01,512.2 561.17,506.8 561.33,517.6 561.50,506.8 561.66,512.2 561.82,512.2 561.98,506.8 562.14,506.8 562.30,512.2 562.46,506.8 562.62,506.8 562.78,506.8 562.94,506.8 563.11,635.9 563.27,506.8 563.43,506.8 563.59,512.2 563.75,512.2 563.91,506.8 564.07,512.2 564.23,506.8 564.39,512.2 564.56,512.2 564.72,506.8 564.88,506.8 565.04,506.8 565.20,512.2 565.36,506.8 565.52,512.2 565.68,512.2 565.84,506.8 566.00,506.8 566.17,506.8 566.33,517.6 566.49,657.4 566.65,506.8 566.81,512.2 566.97,517.6 567.13,587.5 567.29,512.2 567.45,517.6 567.61,517.6 567.78,512.2 567.94,512.2 568.10,506.8 568.26,307.9 568.42,512.2 568.58,506.8 568.74,517.6 568.90,512.2 569.06,517.6 569.23,512.2 569.39,506.8 569.55,517.6 569.71,517.6 569.87,517.6 570.03,517.6 570.19,517.6 570.35,512.2 570.51,512.2 570.67,512.2 570.84,506.8 571.00,512.2 571.16,512.2 571.32,512.2 571.48,512.2 571.64,512.2 571.80,512.2 571.96,512.2 572.12,506.8 572.29,512.2 572.45,506.8 572.61,506.8 572.77,506.8 572.93,506.8 573.09,512.2 573.25,512.2 573.41,506.8 573.57,506.8 573.73,512.2 573.90,506.8 574.06,506.8 574.22,506.8 574.38,506.8 574.54,603.6 574.70,523.0 574.86,506.8 575.02,506.8 575.18,506.8 575.34,506.8 575.51,512.2 575.67,506.8 575.83,506.8 575.99,506.8 576.15,517.6 576.31,512.2 576.47,506.8 576.63,506.8 576.79,512.2 576.96,512.2 577.12,512.2 577.28,523.0 577.44,517.6 577.60,506.8 577.76,512.2 577.92,512.2 578.08,517.6 578.24,517.6 578.40,528.3 578.57,506.8 578.73,512.2 578.89,506.8 579.05,506.8 579.21,517.6 579.37,506.8 579.53,512.2 579.69,506.8 579.85,512.2 580.02,506.8 580.18,512.2 580.34,506.8 580.50,506.8 580.66,506.8 580.82,512.2 580.98,506.8 581.14,506.8 581.30,506.8 581.46,506.8 581.63,506.8 581.79,506.8 581.95,512.2 582.11,512.2 582.27,506.8 582.43,512.2 582.59,512.2 582.75,506.8 582.91,506.8 583.07,711.1 583.24,506.8 583.40,506.8 583.56,506.8 583.72,506.8 583.88,512.2 584.04,506.8 584.20,506.8 584.36,506.8 584.52,506.8 584.69,517.6 584.85,506.8 585.01,506.8 585.17,506.8 585.33,512.2 585.49,506.8 585.65,506.8 585.81,506.8 585.97,506.8 586.13,506.8 586.30,506.8 586.46,711.1 586.62,512.2 586.78,506.8 586.94,512.2 587.10,506.8 587.26,512.2 587.42,264.9 587.58,512.2 587.74,528.3 587.91,506.8 588.07,506.8 588.23,506.8 588.39,506.8 588.55,506.8 588.71,517.6 588.87,506.8 589.03,512.2 589.19,512.2 589.36,512.2 589.52,506.8 589.68,512.2 589.84,506.8 590.00,517.6 590.16,512.2 590.32,506.8 590.48,506.8 590.64,506.8 590.80,506.8 590.97,506.8 591.13,512.2 591.29,506.8 591.45,512.2 591.61,506.8 591.77,512.2 591.93,506.8 592.09,512.2 592.25,517.6 592.42,512.2 592.58,506.8 592.74,512.2 592.90,517.6 593.06,512.2 593.22,506.8 593.38,598.2 593.54,512.2 593.70,512.2 593.86,506.8 594.03,512.2 594.19,506.8 594.35,506.8 594.51,506.8 594.67,517.6 594.83,506.8 594.99,506.8 595.15,506.8 595.31,506.8 595.47,517.6 595.64,506.8 595.80,506.8 595.96,506.8 596.12,512.2 596.28,506.8 596.44,598.2 596.60,512.2 596.76,512.2 596.92,517.6 597.09,512.2 597.25,523.0 597.41,506.8 597.57,506.8 597.73,512.2 597.89,506.8 598.05,512.2 598.21,506.8 598.37,506.8 598.53,506.8 598.70,506.8 598.86,512.2 599.02,506.8 599.18,512.2 599.34,506.8 599.50,506.8 599.66,512.2 599.82,517.6 599.98,512.2 600.15,523.0 600.31,517.6 600.47,512.2 600.63,506.8 600.79,517.6 600.95,517.6 601.11,506.8 601.27,517.6 601.43,512.2 601.59,506.8 601.76,512.2 601.92,506.8 602.08,506.8 602.24,506.8 602.40,506.8 602.56,506.8 602.72,523.0 602.88,512.2 603.04,523.0 603.20,517.6 603.37,506.8 603.53,512.2 603.69,512.2 603.85,517.6 604.01,512.2 604.17,506.8 604.33,506.8 604.49,506.8 604.65,506.8 604.82,512.2 604.98,506.8 605.14,506.8 605.30,506.8 605.46,512.2 605.62,506.8 605.78,506.8 605.94,506.8 606.10,512.2 606.26,512.2 606.43,506.8 606.59,517.6 606.75,506.8 606.91,512.2 607.07,506.8 607.23,506.8 607.39,506.8 607.55,512.2 607.71,506.8 607.87,506.8 608.04,512.2 608.20,512.2 608.36,512.2 608.52,506.8 608.68,506.8 608.84,506.8 609.00,506.8 609.16,506.8 609.32,512.2 609.49,512.2 609.65,506.8 609.81,506.8 609.97,506.8 610.13,506.8 610.29,506.8 610.45,506.8 610.61,512.2 610.77,506.8 610.93,506.8 611.10,506.8 611.26,512.2 611.42,506.8 611.58,506.8 611.74,506.8 611.90,512.2 612.06,512.2 612.22,512.2 612.38,506.8 612.55,506.8 612.71,528.3 612.87,528.3 613.03,512.2 613.19,512.2 613.35,506.8 613.51,512.2 613.67,506.8 613.83,506.8 613.99,512.2 614.16,506.8 614.32,506.8 614.48,506.8 614.64,512.2 614.80,512.2 614.96,512.2 615.12,517.6 615.28,517.6 615.44,512.2 615.60,512.2 615.77,512.2 615.93,506.8 616.09,506.8 616.25,506.8 616.41,506.8 616.57,512.2 616.73,506.8 616.89,512.2 617.05,506.8 617.22,512.2 617.38,528.3 617.54,506.8 617.70,512.2 617.86,512.2 618.02,512.2 618.18,506.8 618.34,512.2 618.50,506.8 618.66,506.8 618.83,512.2 618.99,517.6 619.15,512.2 619.31,512.2 619.47,517.6 619.63,506.8 619.79,506.8 619.95,512.2 620.11,506.8 620.28,523.0 620.44,506.8 620.60,523.0 620.76,517.6 620.92,512.2 621.08,506.8 621.24,517.6 621.40,512.2 621.56,512.2 621.72,523.0 621.89,506.8 622.05,506.8 622.21,506.8 622.37,512.2 622.53,506.8 622.69,506.8 622.85,523.0 623.01,506.8 623.17,506.8 623.33,517.6 623.50,517.6 623.66,506.8 623.82,512.2 623.98,512.2 624.14,512.2 624.30,512.2 624.46,512.2 624.62,506.8 624.78,512.2 624.95,512.2 625.11,517.6 625.27,506.8 625.43,506.8 625.59,506.8 625.75,523.0 625.91,506.8 626.07,506.8 626.23,523.0 626.39,506.8 626.56,506.8 626.72,506.8 626.88,506.8 627.04,506.8 627.20,506.8 627.36,512.2 627.52,506.8 627.68,512.2 627.84,506.8 628.00,506.8 628.17,506.8 628.33,506.8 628.49,506.8 628.65,506.8 628.81,506.8 628.97,506.8 629.13,506.8 629.29,512.2 629.45,506.8 629.62,512.2 629.78,506.8 629.94,512.2 630.10,506.8 630.26,512.2 630.42,506.8 630.58,506.8 630.74,506.8 630.90,506.8 631.06,517.6 631.23,512.2 631.39,506.8 631.55,528.3 631.71,512.2 631.87,512.2 632.03,512.2 632.19,506.8 632.35,506.8 632.51,506.8 632.68,528.3 632.84,506.8 633.00,517.6 633.16,506.8 633.32,512.2 633.48,512.2 633.64,506.8 633.80,506.8 633.96,512.2 634.12,506.8 634.29,512.2 634.45,512.2 634.61,506.8 634.77,512.2 634.93,506.8 635.09,512.2 635.25,506.8 635.41,506.8 635.57,517.6 635.73,506.8 635.90,506.8 636.06,517.6 636.22,506.8 636.38,506.8 636.54,512.2 636.70,506.8 636.86,512.2 637.02,512.2 637.18,506.8 637.35,506.8 637.51,512.2 637.67,506.8 637.83,512.2 637.99,506.8 638.15,512.2 638.31,506.8 638.47,506.8 638.63,512.2 638.79,512.2 638.96,506.8 639.12,506.8 639.28,506.8 639.44,506.8 639.60,506.8 639.76,512.2 639.92,512.2 640.08,506.8 640.24,512.2 640.41,506.8 640.57,506.8 640.73,506.8 640.89,512.2 641.05,506.8 641.21,506.8 641.37,512.2 641.53,528.3 641.69,512.2 641.85,506.8 642.02,517.6 642.18,506.8 642.34,506.8 642.50,506.8 642.66,506.8 642.82,506.8 642.98,506.8 643.14,512.2 643.30,506.8 643.46,506.8 643.63,506.8 643.79,512.2 643.95,512.2 644.11,544.5 644.27,506.8 644.43,506.8 644.59,517.6 644.75,506.8 644.91,506.8 645.08,523.0 645.24,506.8 645.40,512.2 645.56,506.8 645.72,512.2 645.88,506.8 646.04,506.8 646.20,560.6 646.36,512.2 646.52,506.8 646.69,506.8 646.85,512.2 647.01,512.2 647.17,517.6 647.33,506.8 647.49,512.2 647.65,506.8 647.81,506.8 647.97,512.2 648.13,506.8 648.30,506.8 648.46,512.2 648.62,512.2 648.78,506.8 648.94,512.2 649.10,506.8 649.26,506.8 649.42,512.2 649.58,506.8 649.75,512.2 649.91,533.7 650.07,506.8 650.23,512.2 650.39,506.8 650.55,512.2 650.71,512.2 650.87,512.2 651.03,512.2 651.19,512.2 651.36,512.2 651.52,512.2 651.68,506.8 651.84,512.2 652.00,512.2 652.16,506.8 652.32,512.2 652.48,544.5 652.64,506.8 652.81,517.6 652.97,506.8 653.13,506.8 653.29,512.2 653.45,506.8 653.61,506.8 653.77,506.8 653.93,512.2 654.09,506.8 654.25,512.2 654.42,506.8 654.58,512.2 654.74,506.8 654.90,506.8 655.06,517.6 655.22,506.8 655.38,506.8 655.54,506.8 655.70,506.8 655.86,517.6 656.03,523.0 656.19,512.2 656.35,506.8 656.51,506.8 656.67,512.2 656.83,512.2 656.99,506.8 657.15,506.8 657.31,506.8 657.48,512.2 657.64,506.8 657.80,512.2 657.96,506.8 658.12,512.2 658.28,512.2 658.44,506.8 658.60,506.8 658.76,506.8 658.92,506.8 659.09,512.2 659.25,517.6 659.41,506.8 659.57,506.8 659.73,512.2 659.89,506.8 660.05,512.2 660.21,592.9 660.37,517.6 660.54,512.2 660.70,506.8 660.86,506.8 661.02,506.8 661.18,506.8 661.34,512.2 661.50,506.8 661.66,512.2 661.82,506.8 661.98,512.2 662.15,512.2 662.31,506.8 662.47,512.2 662.63,506.8 662.79,506.8 662.95,512.2 663.11,512.2 663.27,506.8 663.43,506.8 663.59,506.8 663.76,506.8 663.92,512.2 664.08,506.8 664.24,506.8 664.40,506.8 664.56,512.2 664.72,506.8 664.88,512.2 665.04,506.8 665.21,512.2 665.37,506.8 665.53,512.2 665.69,506.8 665.85,512.2 666.01,512.2 666.17,506.8 666.33,506.8 666.49,506.8 666.65,506.8 666.82,512.2 666.98,506.8 667.14,517.6 667.30,512.2 667.46,560.6 667.62,512.2 667.78,512.2 667.94,506.8 668.10,506.8 668.26,506.8 668.43,506.8 668.59,506.8 668.75,506.8 668.91,506.8 669.07,512.2 669.23,506.8 669.39,512.2 669.55,506.8 669.71,512.2 669.88,517.6 670.04,506.8 670.20,635.9 670.36,506.8 670.52,506.8 670.68,506.8 670.84,512.2 671.00,506.8 671.16,506.8 671.32,506.8 671.49,506.8 671.65,506.8 671.81,512.2 671.97,506.8 672.13,512.2 672.29,506.8 672.45,506.8 672.61,506.8 672.77,512.2 672.94,517.6 673.10,512.2 673.26,517.6 673.42,281.0 673.58,506.8 673.74,506.8 673.90,506.8 674.06,506.8 674.22,517.6 674.38,506.8 674.55,517.6 674.71,506.8 674.87,506.8 675.03,506.8 675.19,512.2 675.35,512.2 675.51,560.6 675.67,512.2 675.83,506.8 675.99,517.6 676.16,506.8 676.32,512.2 676.48,512.2 676.64,506.8 676.80,512.2 676.96,506.8 677.12,506.8 677.28,506.8 677.44,506.8 677.61,512.2 677.77,517.6 677.93,506.8 678.09,506.8 678.25,512.2 678.41,232.6 678.57,506.8 678.73,506.8 678.89,506.8 679.05,506.8 679.22,506.8 679.38,512.2 679.54,517.6 679.70,506.8 679.86,506.8 680.02,517.6 680.18,512.2 680.34,506.8 680.50,517.6 680.67,506.8 680.83,512.2 680.99,506.8 681.15,512.2 681.31,506.8 681.47,544.5 681.63,506.8 681.79,506.8 681.95,506.8 682.11,506.8 682.28,512.2 682.44,506.8 682.60,512.2 682.76,523.0 682.92,512.2 683.08,506.8 683.24,506.8 683.40,506.8 683.56,506.8 683.72,506.8 683.89,506.8 684.05,512.2 684.21,506.8 684.37,512.2 684.53,506.8 684.69,506.8 684.85,506.8 685.01,506.8 685.17,506.8 685.34,275.6 685.50,506.8 685.66,506.8 685.82,517.6 685.98,512.2 686.14,506.8 686.30,506.8 686.46,609.0 686.62,506.8 686.78,512.2 686.95,517.6 687.11,512.2 687.27,506.8 687.43,512.2 687.59,506.8 687.75,512.2 687.91,506.8 688.07,738.0 688.23,506.8 688.39,512.2 688.56,517.6 688.72,506.8 688.88,506.8 689.04,506.8 689.20,512.2 689.36,248.7 689.52,506.8 689.68,506.8 689.84,506.8 690.01,506.8 690.17,512.2 690.33,506.8 690.49,512.2 690.65,512.2 690.81,506.8 690.97,523.0 691.13,512.2 691.29,238.0 691.45,324.0 691.62,506.8 691.78,512.2 691.94,506.8 692.10,506.8 692.26,506.8 692.42,506.8 692.58,506.8 692.74,512.2 692.90,517.6 693.07,512.2 693.23,512.2 693.39,512.2 693.55,512.2 693.71,506.8 693.87,506.8 694.03,512.2 694.19,512.2 694.35,506.8 694.51,512.2 694.68,506.8 694.84,512.2 695.00,506.8 695.16,506.8 695.32,506.8 695.48,506.8 695.64,506.8 695.80,512.2 695.96,512.2 696.12,506.8 696.29,506.8 696.45,506.8 696.61,512.2 696.77,506.8 696.93,506.8 697.09,512.2 697.25,512.2 697.41,512.2 697.57,506.8 697.74,506.8 697.90,506.8 698.06,512.2 698.22,506.8 698.38,506.8 698.54,517.6 698.70,506.8 698.86,506.8 699.02,506.8 699.18,506.8 699.35,512.2 699.51,517.6 699.67,506.8 699.83,512.2 699.99,506.8 700.15,506.8 700.31,506.8 700.47,517.6 700.63,517.6 700.80,512.2 700.96,512.2 701.12,506.8 701.28,512.2 701.44,506.8 701.60,517.6 701.76,506.8 701.92,506.8 702.08,512.2 702.24,506.8 702.41,264.9 702.57,506.8 702.73,523.0 702.89,512.2 703.05,506.8 703.21,506.8 703.37,506.8 703.53,506.8 703.69,506.8 703.85,506.8 704.02,512.2 704.18,512.2 704.34,512.2 704.50,512.2 704.66,512.2 704.82,506.8 704.98,512.2 705.14,512.2 705.30,232.6 705.47,512.2 705.63,506.8 705.79,512.2 705.95,506.8 706.11,506.8 706.27,506.8 706.43,684.3 706.59,512.2 706.75,506.8 706.91,517.6 707.08,512.2 707.24,512.2 707.40,506.8 707.56,512.2 707.72,506.8 707.88,506.8 708.04,512.2 708.20,506.8 708.36,506.8 708.52,512.2 708.69,506.8 708.85,506.8 709.01,506.8 709.17,517.6 709.33,506.8 709.49,512.2 709.65,506.8 709.81,506.8 709.97,517.6 710.14,539.1 710.30,512.2 710.46,506.8 710.62,420.8 710.78,506.8 710.94,506.8 711.10,512.2 711.26,512.2 711.42,512.2 711.58,506.8 711.75,517.6 711.91,512.2 712.07,517.6 712.23,243.4 712.39,506.8 712.55,506.8 712.71,512.2 712.87,506.8 713.03,517.6 713.20,517.6 713.36,587.5 713.52,506.8 713.68,512.2 713.84,506.8 714.00,506.8 714.16,506.8 714.32,506.8 714.48,506.8 714.64,506.8 714.81,512.2 714.97,506.8 715.13,506.8 715.29,275.6 715.45,506.8 715.61,512.2 715.77,512.2 715.93,512.2 716.09,506.8 716.25,506.8 716.42,506.8 716.58,512.2 716.74,506.8 716.90,512.2 717.06,512.2 717.22,275.6 717.38,506.8 717.54,238.0 717.70,517.6 717.87,512.2 718.03,512.2 718.19,506.8 718.35,291.7 718.51,291.7 718.67,291.7 718.83,453.1 718.99,506.8 719.15,512.2 719.31,517.6 719.48,517.6 719.64,506.8 719.80,512.2 719.96,506.8 720.12,512.2 720.28,506.8 720.44,512.2 720.60,512.2 720.76,512.2 720.93,512.2 721.09,512.2 721.25,506.8 721.41,506.8 721.57,506.8 721.73,512.2 721.89,506.8 722.05,512.2 722.21,506.8 722.37,539.1 722.54,512.2 722.70,512.2 722.86,506.8 723.02,506.8 723.18,512.2 723.34,238.0 723.50,512.2 723.66,539.1 723.82,517.6 723.98,506.8 724.15,512.2 724.31,512.2 724.47,506.8 724.63,506.8 724.79,512.2 724.95,512.2 725.11,506.8 725.27,248.7 725.43,512.2 725.60,506.8 725.76,506.8 725.92,512.2 726.08,506.8 726.24,512.2 726.40,711.1 726.56,506.8 726.72,512.2 726.88,506.8 727.04,506.8 727.21,506.8 727.37,506.8 727.53,523.0 727.69,512.2 727.85,512.2 728.01,506.8 728.17,506.8 728.33,506.8 728.49,517.6 728.65,506.8 728.82,506.8 728.98,512.2 729.14,512.2 729.30,517.6 729.46,512.2 729.62,506.8 729.78,506.8 729.94,512.2 730.10,506.8 730.27,512.2 730.43,506.8 730.59,512.2 730.75,512.2 730.91,506.8 731.07,517.6 731.23,506.8 731.39,512.2 731.55,506.8 731.71,506.8 731.88,512.2 732.04,506.8 732.20,512.2 732.36,512.2 732.52,512.2 732.68,512.2 732.84,506.8 733.00,517.6 733.16,512.2 733.33,512.2 733.49,512.2 733.65,506.8 733.81,506.8 733.97,549.8 734.13,506.8 734.29,576.7 734.45,506.8 734.61,512.2 734.77,506.8 734.94,506.8 735.10,506.8 735.26,506.8 735.42,506.8 735.58,512.2 735.74,506.8 735.90,506.8 736.06,506.8 736.22,506.8 736.38,512.2 736.55,506.8 736.71,506.8 736.87,512.2 737.03,506.8 737.19,517.6 737.35,243.4 737.51,512.2 737.67,517.6 737.83,506.8 738.00,512.2 738.16,512.2 738.32,506.8 738.48,512.2 738.64,506.8 738.80,506.8 738.96,512.2 739.12,506.8 739.28,506.8 739.44,506.8 739.61,512.2 739.77,517.6 739.93,506.8 740.09,512.2 740.25,506.8 740.41,512.2 740.57,512.2 740.73,517.6 740.89,506.8 741.06,517.6 741.22,506.8 741.38,512.2 741.54,506.8 741.70,506.8 741.86,517.6 742.02,506.8 742.18,506.8 742.34,506.8 742.50,512.2 742.67,517.6 742.83,528.3 742.99,506.8 743.15,506.8 743.31,506.8 743.47,506.8 743.63,506.8 743.79,506.8 743.95,506.8 744.11,506.8 744.28,506.8 744.44,512.2 744.60,506.8 744.76,506.8 744.92,506.8 745.08,506.8 745.24,512.2 745.40,533.7 745.56,506.8 745.73,512.2 745.89,506.8 746.05,506.8 746.21,506.8 746.37,254.1 746.53,506.8 746.69,512.2 746.85,506.8 747.01,512.2 747.17,517.6 747.34,248.7 747.50,506.8 747.66,506.8 747.82,506.8 747.98,506.8 748.14,517.6 748.30,512.2 748.46,506.8 748.62,506.8 748.78,506.8 748.95,506.8 749.11,506.8 749.27,517.6 749.43,512.2 749.59,512.2 749.75,506.8 749.91,506.8 750.07,512.2 750.23,270.2 750.40,512.2 750.56,506.8 750.72,512.2 750.88,512.2 751.04,512.2 751.20,506.8 751.36,259.5 751.52,506.8 751.68,506.8 751.84,506.8 752.01,517.6 752.17,506.8 752.33,512.2 752.49,512.2 752.65,506.8 752.81,506.8 752.97,506.8 753.13,506.8 753.29,506.8 753.46,506.8 753.62,512.2 753.78,506.8 753.94,512.2 754.10,517.6 754.26,506.8 754.42,506.8 754.58,506.8 754.74,506.8 754.90,506.8 755.07,506.8 755.23,512.2 755.39,539.1 755.55,506.8 755.71,512.2 755.87,512.2 756.03,512.2 756.19,506.8 756.35,512.2 756.51,506.8 756.68,506.8 756.84,517.6 757.00,506.8 757.16,506.8 757.32,506.8 757.48,512.2 757.64,506.8 757.80,506.8 757.96,506.8 758.13,512.2 758.29,512.2 758.45,506.8 758.61,506.8 758.77,506.8 758.93,506.8 759.09,506.8 759.25,506.8 759.41,506.8 759.57,506.8 759.74,517.6 759.90,506.8 760.06,506.8 760.22,506.8 760.38,506.8 760.54,506.8 760.70,512.2 760.86,512.2 761.02,512.2 761.19,512.2 761.35,517.6 761.51,506.8 761.67,512.2 761.83,506.8 761.99,512.2 762.15,506.8 762.31,517.6 762.47,506.8 762.63,512.2 762.80,512.2 762.96,512.2 763.12,506.8 763.28,506.8 763.44,512.2 763.60,512.2 763.76,512.2 763.92,506.8 764.08,512.2 764.24,512.2 764.41,506.8 764.57,517.6 764.73,506.8 764.89,512.2 765.05,523.0 765.21,506.8 765.37,506.8 765.53,512.2 765.69,512.2 765.86,506.8 766.02,506.8 766.18,517.6 766.34,512.2 766.50,506.8 766.66,506.8 766.82,506.8 766.98,512.2 767.14,512.2 767.30,512.2 767.47,506.8 767.63,506.8 767.79,506.8 767.95,512.2 768.11,506.8 768.27,512.2 768.43,506.8 768.59,506.8 768.75,512.2 768.91,506.8 769.08,506.8 769.24,512.2 769.40,512.2 769.56,506.8 769.72,512.2 769.88,506.8 770.04,517.6 770.20,512.2 770.36,506.8 770.53,517.6 770.69,506.8 770.85,506.8 771.01,512.2 771.17,506.8 771.33,248.7 771.49,506.8 771.65,592.9 771.81,517.6 771.97,506.8 772.14,506.8 772.30,512.2 772.46,506.8 772.62,512.2 772.78,506.8 772.94,506.8 773.10,512.2 773.26,512.2 773.42,512.2 773.59,517.6 773.75,506.8 773.91,506.8 774.07,512.2 774.23,506.8 774.39,506.8 774.55,506.8 774.71,506.8 774.87,506.8 775.03,506.8 775.20,512.2 775.36,259.5 775.52,506.8 775.68,506.8 775.84,512.2 776.00,506.8 776.16,512.2 776.32,506.8 776.48,506.8 776.64,512.2 776.81,517.6 776.97,506.8 777.13,506.8 777.29,506.8 777.45,506.8 777.61,506.8 777.77,506.8 777.93,512.2 778.09,512.2 778.26,512.2 778.42,238.0 778.58,512.2 778.74,523.0 778.90,517.6 779.06,512.2 779.22,506.8 779.38,512.2 779.54,506.8 779.70,506.8 779.87,512.2 780.03,512.2 780.19,506.8 780.35,506.8 780.51,517.6 780.67,506.8 780.83,506.8 780.99,512.2 781.15,512.2 781.32,506.8 781.48,506.8 781.64,506.8 781.80,506.8 781.96,517.6 782.12,517.6 782.28,506.8 782.44,517.6 782.60,512.2 782.76,512.2 782.93,506.8 783.09,506.8 783.25,506.8 783.41,512.2 783.57,523.0 783.73,506.8 783.89,512.2 784.05,512.2 784.21,506.8 784.37,506.8 784.54,512.2 784.70,506.8 784.86,506.8 785.02,506.8 785.18,506.8 785.34,506.8 785.50,523.0 785.66,512.2 785.82,512.2 785.99,506.8 786.15,512.2 786.31,506.8 786.47,506.8 786.63,506.8 786.79,506.8 786.95,512.2 787.11,512.2 787.27,506.8 787.43,506.8 787.60,506.8 787.76,506.8 787.92,506.8 788.08,506.8 788.24,506.8 788.40,506.8 788.56,506.8 788.72,506.8 788.88,506.8 789.04,506.8 789.21,512.2 789.37,506.8 789.53,512.2 789.69,512.2 789.85,506.8 790.01,506.8 790.17,506.8 790.33,506.8 790.49,512.2 790.66,506.8 790.82,506.8 790.98,512.2 791.14,506.8 791.30,523.0 791.46,512.2 791.62,506.8 791.78,506.8 791.94,512.2 792.10,512.2 792.27,506.8 792.43,506.8 792.59,506.8 792.75,512.2 792.91,506.8 793.07,506.8 793.23,512.2 793.39,512.2 793.55,506.8 793.72,512.2 793.88,506.8 794.04,512.2 794.20,506.8 794.36,506.8 794.52,506.8 794.68,512.2 794.84,512.2 795.00,506.8 795.16,506.8 795.33,506.8 795.49,512.2 795.65,512.2 795.81,506.8 795.97,512.2 796.13,512.2 796.29,512.2 796.45,506.8 796.61,506.8 796.77,512.2 796.94,506.8 797.10,506.8 797.26,506.8 797.42,506.8 797.58,506.8 797.74,506.8 797.90,506.8 798.06,512.2 798.22,506.8 798.39,506.8 798.55,506.8 798.71,506.8 798.87,517.6 799.03,512.2 799.19,506.8 799.35,506.8 799.51,512.2 799.67,506.8 799.83,506.8 800.00,506.8 800.16,506.8 800.32,512.2 800.48,512.2 800.64,512.2 800.80,512.2 800.96,506.8 801.12,512.2 801.28,512.2 801.45,506.8 801.61,512.2 801.77,523.0 801.93,512.2 802.09,506.8 802.25,512.2 802.41,506.8 802.57,506.8 802.73,506.8 802.89,506.8 803.06,512.2 803.22,517.6 803.38,506.8 803.54,506.8 803.70,506.8 803.86,512.2 804.02,512.2 804.18,506.8 804.34,506.8 804.50,506.8 804.67,506.8 804.83,506.8 804.99,506.8 805.15,506.8 805.31,506.8 805.47,506.8 805.63,512.2 805.79,512.2 805.95,506.8 806.12,512.2 806.28,506.8 806.44,517.6 806.60,506.8 806.76,506.8 806.92,512.2 807.08,506.8 807.24,512.2 807.40,506.8 807.56,523.0 807.73,506.8 807.89,506.8 808.05,506.8 808.21,506.8 808.37,506.8 808.53,512.2 808.69,512.2 808.85,506.8 809.01,506.8 809.17,506.8 809.34,517.6 809.50,512.2 809.66,506.8 809.82,506.8 809.98,506.8 810.14,506.8 810.30,506.8 810.46,506.8 810.62,512.2 810.79,506.8 810.95,512.2 811.11,506.8 811.27,506.8 811.43,512.2 811.59,506.8 811.75,528.3 811.91,517.6 812.07,506.8 812.23,506.8 812.40,512.2 812.56,512.2 812.72,512.2 812.88,506.8 813.04,512.2 813.20,506.8 813.36,517.6 813.52,512.2 813.68,506.8 813.85,506.8 814.01,512.2 814.17,506.8 814.33,506.8 814.49,512.2 814.65,512.2 814.81,512.2 814.97,512.2 815.13,506.8 815.29,506.8 815.46,506.8 815.62,506.8 815.78,506.8 815.94,506.8 816.10,512.2 816.26,523.0 816.42,512.2 816.58,506.8 816.74,506.8 816.90,506.8 817.07,512.2 817.23,506.8 817.39,506.8 817.55,506.8 817.71,506.8 817.87,512.2 818.03,506.8 818.19,512.2 818.35,506.8 818.52,506.8 818.68,512.2 818.84,517.6 819.00,506.8 819.16,506.8 819.32,512.2 819.48,512.2 819.64,506.8 819.80,512.2 819.96,512.2 820.13,506.8 820.29,506.8 820.45,506.8 820.61,506.8 820.77,506.8 820.93,512.2 821.09,512.2 821.25,506.8 821.41,506.8 821.58,517.6 821.74,506.8 821.90,512.2 822.06,512.2 822.22,506.8 822.38,506.8 822.54,512.2 822.70,506.8 822.86,506.8 823.02,512.2 823.19,506.8 823.35,506.8 823.51,506.8 823.67,512.2 823.83,512.2 823.99,512.2 824.15,506.8 824.31,512.2 824.47,506.8 824.63,506.8 824.80,506.8 824.96,506.8 825.12,506.8 825.28,506.8 825.44,506.8 825.60,512.2 825.76,512.2 825.92,512.2 826.08,506.8 826.25,512.2 826.41,506.8 826.57,506.8 826.73,506.8 826.89,506.8 827.05,517.6 827.21,512.2 827.37,506.8 827.53,512.2 827.69,506.8 827.86,506.8 828.02,506.8 828.18,512.2 828.34,517.6 828.50,517.6 828.66,506.8 828.82,517.6 828.98,506.8 829.14,506.8 829.30,512.2 829.47,506.8 829.63,506.8 829.79,506.8 829.95,506.8 830.11,506.8 830.27,243.4 830.43,512.2 830.59,506.8 830.75,506.8 830.92,506.8 831.08,506.8 831.24,512.2 831.40,506.8 831.56,533.7 831.72,506.8 831.88,506.8 832.04,512.2 832.20,512.2 832.36,506.8 832.53,517.6 832.69,506.8 832.85,506.8 833.01,506.8 833.17,517.6 833.33,506.8 833.49,512.2 833.65,512.2 833.81,512.2 833.98,506.8 834.14,512.2 834.30,517.6 834.46,506.8 834.62,506.8 834.78,506.8 834.94,512.2 835.10,506.8 835.26,506.8 835.42,506.8 835.59,506.8 835.75,506.8 835.91,506.8 836.07,506.8 836.23,243.4 836.39,506.8 836.55,512.2 836.71,506.8 836.87,506.8 837.03,506.8 837.20,506.8 837.36,506.8 837.52,512.2 837.68,506.8 837.84,528.3 838.00,506.8 838.16,512.2 838.32,238.0 838.48,506.8 838.65,506.8 838.81,506.8 838.97,506.8 839.13,512.2 839.29,512.2 839.45,512.2 839.61,512.2 839.77,512.2 839.93,506.8 840.09,506.8 840.26,506.8 840.42,512.2 840.58,506.8 840.74,512.2 840.90,506.8 841.06,506.8 841.22,512.2 841.38,512.2 841.54,512.2 841.71,506.8 841.87,512.2 842.03,506.8 842.19,506.8 842.35,506.8 842.51,512.2 842.67,506.8 842.83,506.8 842.99,512.2 843.15,512.2 843.32,506.8 843.48,506.8 843.64,506.8 843.80,512.2 843.96,512.2 844.12,506.8 844.28,512.2 844.44,506.8 844.60,506.8 844.76,506.8 844.93,512.2 845.09,506.8 845.25,512.2 845.41,506.8 845.57,512.2 845.73,506.8 845.89,512.2 846.05,512.2 846.21,506.8 846.38,506.8 846.54,506.8 846.70,512.2 846.86,506.8 847.02,506.8 847.18,506.8 847.34,512.2 847.50,506.8 847.66,512.2 847.82,512.2 847.99,512.2 848.15,512.2 848.31,512.2 848.47,512.2 848.63,506.8 848.79,506.8 848.95,506.8 849.11,506.8 849.27,512.2 849.43,512.2 849.60,506.8 849.76,512.2 849.92,506.8 850.08,506.8 850.24,506.8 850.40,506.8 850.56,506.8 850.72,506.8 850.88,506.8 851.05,512.2 851.21,506.8 851.37,506.8 851.53,512.2 851.69,506.8 851.85,506.8 852.01,506.8 852.17,506.8 852.33,512.2 852.49,506.8 852.66,512.2 852.82,512.2 852.98,506.8 853.14,506.8 853.30,512.2 853.46,506.8 853.62,506.8 853.78,512.2 853.94,512.2 854.11,506.8 854.27,512.2 854.43,506.8 854.59,506.8 854.75,506.8 854.91,506.8 855.07,517.6 855.23,506.8 855.39,512.2 855.55,512.2 855.72,506.8 855.88,506.8 856.04,512.2 856.20,512.2 856.36,517.6 856.52,517.6 856.68,506.8 856.84,512.2 857.00,512.2 857.16,506.8 857.33,512.2 857.49,506.8 857.65,506.8 857.81,512.2 857.97,512.2 858.13,506.8 858.29,512.2 858.45,506.8 858.61,506.8 858.78,506.8 858.94,517.6 859.10,512.2 859.26,512.2 859.42,523.0 859.58,512.2 859.74,603.6 859.90,506.8 860.06,512.2 860.22,506.8 860.39,517.6 860.55,506.8 860.71,506.8 860.87,512.2 861.03,506.8 861.19,512.2 861.35,582.1 861.51,517.6 861.67,506.8 861.84,506.8 862.00,506.8 862.16,506.8 862.32,506.8 862.48,512.2 862.64,506.8 862.80,512.2 862.96,512.2 863.12,512.2 863.28,512.2 863.45,512.2 863.61,512.2 863.77,523.0 863.93,506.8 864.09,517.6 864.25,506.8 864.41,512.2 864.57,506.8 864.73,506.8 864.89,512.2 865.06,506.8 865.22,506.8 865.38,506.8 865.54,506.8 865.70,512.2"/>
<polyline stroke="#1171BE" stroke-width="1.35" marker-start="url(#ma)" marker-mid="url(#ma)" marker-end="url(#ma)" points="60.66,533.7 60.82,547.2 60.98,546.3 61.14,551.2 61.31,574.6 61.47,570.3 61.63,561.7 61.79,564.9 61.95,555.2 62.11,539.1 62.27,576.7 62.43,596.1 62.59,591.8 62.75,598.2 62.92,584.3 63.08,548.8 63.24,533.7 63.40,536.9 63.56,544.5 63.72,575.6 63.88,573.5 64.04,570.3 64.20,561.7 64.36,586.4 64.53,561.7 64.69,566.0 64.85,562.7 65.01,562.7 65.17,542.3 65.33,539.1 65.49,544.5 65.65,545.5 65.81,545.5 65.98,531.6 66.14,535.9 66.30,534.8 66.46,544.5 66.62,546.6 66.78,548.8 66.94,545.5 67.10,545.5 67.26,569.2 67.42,572.4 67.59,584.3 67.75,599.3 67.91,593.9 68.07,569.2 68.23,593.9 68.39,576.7 68.55,572.4 68.71,592.9 68.87,584.3 69.04,576.7 69.20,581.0 69.36,605.8 69.52,589.6 69.68,597.2 69.84,610.1 70.00,611.1 70.16,572.4 70.32,567.0 70.48,568.1 70.65,535.9 70.81,534.8 70.97,532.6 71.13,546.6 71.29,541.2 71.45,540.2 71.61,561.7 71.77,560.6 71.93,574.6 72.09,576.7 72.26,575.6 72.42,562.7 72.58,568.1 72.74,554.1 72.90,556.3 73.06,557.4 73.22,553.1 73.38,556.3 73.54,543.4 73.71,535.9 73.87,532.6 74.03,541.2 74.19,534.8 74.35,566.0 74.51,569.2 74.67,584.3 74.83,578.9 74.99,584.3 75.15,556.3 75.32,558.4 75.48,545.5 75.64,533.7 75.80,526.2 75.96,527.3 76.12,521.9 76.28,527.3 76.44,525.1 76.60,531.6 76.77,529.4 76.93,530.5 77.09,524.0 77.25,549.8 77.41,556.3 77.57,549.8 77.73,558.4 77.89,557.4 78.05,534.8 78.21,531.6 78.38,538.0 78.54,529.4 78.70,532.6 78.86,534.8 79.02,526.2 79.18,526.2 79.34,525.1 79.50,529.4 79.66,526.2 79.82,528.3 79.99,523.0 80.15,521.9 80.31,516.5 80.47,519.7 80.63,523.0 80.79,523.0 80.95,528.3 81.11,527.3 81.27,536.9 81.44,534.8 81.60,534.8 81.76,530.5 81.92,535.9 82.08,536.9 82.24,532.6 82.40,541.2 82.56,543.4 82.72,553.1 82.88,542.3 83.05,547.7 83.21,544.5 83.37,544.5 83.53,534.8 83.69,529.4 83.85,525.1 84.01,524.0 84.17,530.5 84.33,526.2 84.49,541.2 84.66,541.2 84.82,538.0 84.98,543.4 85.14,549.8 85.30,543.4 85.46,553.1 85.62,558.4 85.78,547.7 85.94,540.2 86.11,532.6 86.27,525.1 86.43,526.2 86.59,525.1 86.75,533.7 86.91,542.3 87.07,554.1 87.23,573.5 87.39,585.3 87.55,575.6 87.72,571.3 87.88,560.6 88.04,540.2 88.20,531.6 88.36,534.8 88.52,529.4 88.68,539.1 88.84,540.2 89.00,536.9 89.17,538.0 89.33,546.6 89.49,532.6 89.65,524.0 89.81,532.6 89.97,539.1 90.13,530.5 90.29,531.6 90.45,531.6 90.61,524.0 90.78,515.4 90.94,520.8 91.10,527.3 91.26,527.3 91.42,527.3 91.58,525.1 91.74,526.2 91.90,523.0 92.06,525.1 92.22,521.9 92.39,524.0 92.55,519.7 92.71,516.5 92.87,514.4 93.03,518.7 93.19,525.1 93.35,530.5 93.51,558.4 93.67,587.5 93.84,597.2 94.00,588.6 94.16,606.8 94.32,589.6 94.48,561.7 94.64,554.1 94.80,559.5 94.96,547.7 95.12,552.0 95.28,553.1 95.45,546.6 95.61,548.8 95.77,533.7 95.93,521.9 96.09,520.8 96.25,527.3 96.41,527.3 96.57,549.8 96.73,567.0 96.90,571.3 97.06,575.6 97.22,568.1 97.38,547.7 97.54,539.1 97.70,544.5 97.86,544.5 98.02,570.3 98.18,574.6 98.34,572.4 98.51,570.3 98.67,559.5 98.83,540.2 98.99,533.7 99.15,555.2 99.31,546.6 99.47,548.8 99.63,559.5 99.79,564.9 99.95,539.1 100.12,543.4 100.28,540.2 100.44,525.1 100.60,521.9 100.76,515.4 100.92,511.1 101.08,512.2 101.24,521.9 101.40,520.8 101.57,523.0 101.73,528.3 101.89,529.4 102.05,526.2 102.21,530.5 102.37,530.5 102.53,534.8 102.69,534.8 102.85,530.5 103.01,530.5 103.18,533.7 103.34,524.0 103.50,523.0 103.66,523.0 103.82,518.7 103.98,513.3 104.14,521.9 104.30,533.7 104.46,534.8 104.62,538.0 104.79,540.2 104.95,534.8 105.11,524.0 105.27,519.7 105.43,521.9 105.59,520.8 105.75,520.8 105.91,520.8 106.07,519.7 106.24,514.4 106.40,514.4 106.56,540.2 106.72,540.2 106.88,543.4 107.04,545.5 107.20,550.9 107.36,532.6 107.52,533.7 107.68,530.5 107.85,527.3 108.01,531.6 108.17,526.2 108.33,528.3 108.49,530.5 108.65,539.1 108.81,535.9 108.97,536.9 109.13,539.1 109.30,541.2 109.46,533.7 109.62,530.5 109.78,525.1 109.94,521.9 110.10,518.7 110.26,532.6 110.42,530.5 110.58,531.6 110.74,527.3 110.91,527.3 111.07,513.3 111.23,512.2 111.39,520.8 111.55,521.9 111.71,524.0 111.87,527.3 112.03,533.7 112.19,523.0 112.35,521.9 112.52,521.9 112.68,526.2 112.84,520.8 113.00,523.0 113.16,528.3 113.32,532.6 113.48,525.1 113.64,529.4 113.80,530.5 113.97,532.6 114.13,526.2 114.29,535.9 114.45,531.6 114.61,529.4 114.77,526.2 114.93,529.4 115.09,519.7 115.25,520.8 115.41,520.8 115.58,517.6 115.74,523.0 115.90,529.4 116.06,527.3 116.22,529.4 116.38,533.7 116.54,538.0 116.70,532.6 116.86,546.6 117.03,543.4 117.19,545.5 117.35,542.3 117.51,545.5 117.67,536.9 117.83,540.2 117.99,539.1 118.15,530.5 118.31,533.7 118.47,534.8 118.64,544.5 118.80,543.4 118.96,559.5 119.12,564.9 119.28,571.3 119.44,559.5 119.60,563.8 119.76,554.1 119.92,545.5 120.08,538.0 120.25,543.4 120.41,555.2 120.57,546.6 120.73,546.6 120.89,548.8 121.05,545.5 121.21,534.8 121.37,539.1 121.53,542.3 121.70,540.2 121.86,546.6 122.02,538.0 122.18,542.3 122.34,534.8 122.50,540.2 122.66,536.9 122.82,544.5 122.98,543.4 123.14,547.7 123.31,536.9 123.47,536.9 123.63,534.8 123.79,553.1 123.95,558.4 124.11,585.3 124.27,586.4 124.43,589.6 124.59,584.3 124.75,573.5 124.92,549.8 125.08,548.8 125.24,553.1 125.40,532.6 125.56,535.9 125.72,539.1 125.88,538.0 126.04,528.3 126.20,544.5 126.37,547.7 126.53,548.8 126.69,549.8 126.85,544.5 127.01,534.8 127.17,533.7 127.33,534.8 127.49,534.8 127.65,548.8 127.81,545.5 127.98,555.2 128.14,547.7 128.30,545.5 128.46,538.0 128.62,536.9 128.78,526.2 128.94,525.1 129.10,520.8 129.26,517.6 129.43,524.0 129.59,525.1 129.75,531.6 129.91,544.5 130.07,546.6 130.23,563.8 130.39,559.5 130.55,553.1 130.71,542.3 130.87,538.0 131.04,514.4 131.20,514.4 131.36,515.4 131.52,514.4 131.68,517.6 131.84,518.7 132.00,519.7 132.16,518.7 132.32,524.0 132.48,547.7 132.65,549.8 132.81,552.0 132.97,550.9 133.13,547.7 133.29,520.8 133.45,515.4 133.61,512.2 133.77,514.4 133.93,516.5 134.10,517.6 134.26,520.8 134.42,523.0 134.58,529.4 134.74,533.7 134.90,532.6 135.06,554.1 135.22,571.3 135.38,577.8 135.54,575.6 135.71,580.0 135.87,575.6 136.03,564.9 136.19,561.7 136.35,560.6 136.51,556.3 136.67,539.1 136.83,531.6 136.99,529.4 137.16,531.6 137.32,533.7 137.48,542.3 137.64,541.2 137.80,543.4 137.96,553.1 138.12,558.4 138.28,566.0 138.44,566.0 138.60,559.5 138.77,541.2 138.93,532.6 139.09,531.6 139.25,531.6 139.41,532.6 139.57,535.9 139.73,536.9 139.89,526.2 140.05,527.3 140.21,526.2 140.38,528.3 140.54,530.5 140.70,524.0 140.86,528.3 141.02,535.9 141.18,532.6 141.34,553.1 141.50,558.4 141.66,559.5 141.83,559.5 141.99,572.4 142.15,556.3 142.31,559.5 142.47,555.2 142.63,546.6 142.79,533.7 142.95,532.6 143.11,529.4 143.27,532.6 143.44,534.8 143.60,533.7 143.76,531.6 143.92,527.3 144.08,524.0 144.24,524.0 144.40,524.0 144.56,524.0 144.72,524.0 144.88,524.0 145.05,521.9 145.21,525.1 145.37,521.9 145.53,541.2 145.69,538.0 145.85,536.9 146.01,534.8 146.17,536.9 146.33,527.3 146.50,552.0 146.66,556.3 146.82,556.3 146.98,554.1 147.14,542.3 147.30,526.2 147.46,519.7 147.62,521.9 147.78,533.7 147.94,539.1 148.11,530.5 148.27,536.9 148.43,535.9 148.59,523.0 148.75,527.3 148.91,528.3 149.07,523.0 149.23,519.7 149.39,520.8 149.56,512.2 149.72,514.4 149.88,514.4 150.04,515.4 150.20,515.4 150.36,524.0 150.52,459.5 150.68,457.4 150.84,463.8 151.00,468.1 151.17,459.5 151.33,523.0 151.49,527.3 151.65,525.1 151.81,521.9 151.97,523.0 152.13,531.6 152.29,534.8 152.45,532.6 152.61,531.6 152.78,533.7 152.94,524.0 153.10,517.6 153.26,516.5 153.42,455.2 153.58,452.0 153.74,454.1 153.90,453.1 154.06,452.0 154.23,514.4 154.39,514.4 154.55,513.3 154.71,525.1 154.87,528.3 155.03,473.5 155.19,477.8 155.35,481.0 155.51,477.8 155.67,481.0 155.84,534.8 156.00,543.4 156.16,539.1 156.32,472.4 156.48,413.3 156.64,426.2 156.80,424.0 156.96,422.9 157.12,505.7 157.29,558.4 157.45,548.8 157.61,538.0 157.77,554.1 157.93,539.1 158.09,562.7 158.25,568.1 158.41,569.2 158.57,561.7 158.73,557.4 158.90,534.8 159.06,526.2 159.22,528.3 159.38,523.0 159.54,518.7 159.70,517.6 159.86,518.7 160.02,517.6 160.18,525.1 160.34,546.6 160.51,553.1 160.67,575.6 160.83,587.5 160.99,576.7 161.15,555.2 161.31,553.1 161.47,528.3 161.63,516.5 161.79,519.7 161.96,521.9 162.12,519.7 162.28,527.3 162.44,530.5 162.60,528.3 162.76,528.3 162.92,527.3 163.08,523.0 163.24,456.3 163.40,457.4 163.57,458.4 163.73,477.8 163.89,477.8 164.05,539.1 164.21,541.2 164.37,541.2 164.53,521.9 164.69,459.5 164.85,461.7 165.01,463.8 165.18,461.7 165.34,463.8 165.50,526.2 165.66,463.8 165.82,467.0 165.98,469.2 166.14,470.3 166.30,473.5 166.46,535.9 166.63,467.0 166.79,462.7 166.95,459.5 167.11,454.1 167.27,452.0 167.43,449.8 167.59,457.4 167.75,456.3 167.91,458.4 168.07,461.7 168.24,525.1 168.40,518.7 168.56,518.7 168.72,518.7 168.88,516.5 169.04,514.4 169.20,514.4 169.36,515.4 169.52,512.2 169.69,512.2 169.85,516.5 170.01,515.4 170.17,516.5 170.33,523.0 170.49,528.3 170.65,531.6 170.81,532.6 170.97,533.7 171.13,531.6 171.30,539.1 171.46,536.9 171.62,542.3 171.78,552.0 171.94,548.8 172.10,536.9 172.26,532.6 172.42,527.3 172.58,530.5 172.74,532.6 172.91,534.8 173.07,553.1 173.23,553.1 173.39,536.9 173.55,539.1 173.71,534.8 173.87,518.7 174.03,525.1 174.19,529.4 174.36,526.2 174.52,527.3 174.68,525.1 174.84,518.7 175.00,515.4 175.16,516.5 175.32,521.9 175.48,523.0 175.64,544.5 175.80,546.6 175.97,546.6 176.13,542.3 176.29,541.2 176.45,519.7 176.61,520.8 176.77,523.0 176.93,525.1 177.09,533.7 177.25,536.9 177.42,532.6 177.58,534.8 177.74,542.3 177.90,541.2 178.06,540.2 178.22,545.5 178.38,476.7 178.54,464.9 178.70,459.5 178.86,457.4 179.03,452.0 179.19,519.7 179.35,520.8 179.51,523.0 179.67,525.1 179.83,532.6 179.99,532.6 180.15,535.9 180.31,536.9 180.47,473.5 180.64,467.0 180.80,464.9 180.96,459.5 181.12,457.4 181.28,517.6 181.44,517.6 181.60,513.3 181.76,523.0 181.92,518.7 182.09,520.8 182.25,531.6 182.41,556.3 182.57,556.3 182.73,562.7 182.89,561.7 183.05,561.7 183.21,538.0 183.37,469.2 183.53,471.3 183.70,477.8 183.86,472.4 184.02,473.5 184.18,533.7 184.34,527.3 184.50,524.0 184.66,517.6 184.82,516.5 184.98,518.7 185.14,521.9 185.31,519.7 185.47,519.7 185.63,520.8 185.79,519.7 185.95,516.5 186.11,515.4 186.27,515.4 186.43,513.3 186.59,517.6 186.76,520.8 186.92,531.6 187.08,531.6 187.24,535.9 187.40,531.6 187.56,529.4 187.72,524.0 187.88,527.3 188.04,526.2 188.20,527.3 188.37,528.3 188.53,525.1 188.69,524.0 188.85,528.3 189.01,527.3 189.17,524.0 189.33,527.3 189.49,525.1 189.65,525.1 189.82,525.1 189.98,526.2 190.14,524.0 190.30,527.3 190.46,524.0 190.62,542.3 190.78,544.5 190.94,541.2 191.10,540.2 191.26,541.2 191.43,526.2 191.59,523.0 191.75,524.0 191.91,523.0 192.07,517.6 192.23,514.4 192.39,515.4 192.55,515.4 192.71,513.3 192.87,514.4 193.04,517.6 193.20,518.7 193.36,519.7 193.52,524.0 193.68,524.0 193.84,520.8 194.00,525.1 194.16,524.0 194.32,526.2 194.49,527.3 194.65,529.4 194.81,525.1 194.97,523.0 195.13,517.6 195.29,524.0 195.45,524.0 195.61,524.0 195.77,530.5 195.93,530.5 196.10,523.0 196.26,546.6 196.42,483.2 196.58,481.0 196.74,484.2 196.90,499.3 197.06,473.5 197.22,536.9 197.38,535.9 197.55,540.2 197.71,528.3 197.87,529.4 198.03,531.6 198.19,532.6 198.35,531.6 198.51,528.3 198.67,530.5 198.83,529.4 198.99,528.3 199.16,523.0 199.32,464.9 199.48,403.6 199.64,403.6 199.80,410.0 199.96,411.1 200.12,474.6 200.28,535.9 200.44,532.6 200.60,472.4 200.77,415.4 200.93,355.2 201.09,359.5 201.25,378.9 201.41,430.5 201.57,490.7 201.73,544.5 201.89,534.8 202.05,519.7 202.22,520.8 202.38,456.3 202.54,467.0 202.70,470.3 202.86,482.1 203.02,479.9 203.18,541.2 203.34,536.9 203.50,533.7 203.66,521.9 203.83,524.0 203.99,521.9 204.15,515.4 204.31,519.7 204.47,455.2 204.63,454.1 204.79,460.6 204.95,466.0 205.11,464.9 205.27,558.4 205.44,578.9 205.60,516.5 205.76,520.8 205.92,535.9 206.08,507.9 206.24,499.3 206.40,496.1 206.56,495.0 206.72,477.8 206.89,475.6 207.05,469.2 207.21,536.9 207.37,473.5 207.53,474.6 207.69,479.9 207.85,484.2 208.01,490.7 208.17,559.5 208.33,502.5 208.50,505.7 208.66,499.3 208.82,511.1 208.98,500.4 209.14,562.7 209.30,550.9 209.46,558.4 209.62,539.1 209.78,550.9 209.95,552.0 210.11,555.2 210.27,556.3 210.43,550.9 210.59,566.0 210.75,557.4 210.91,568.1 211.07,556.3 211.23,554.1 211.39,525.1 211.56,528.3 211.72,515.4 211.88,517.6 212.04,517.6 212.20,520.8 212.36,524.0 212.52,523.0 212.68,535.9 212.84,547.7 213.00,550.9 213.17,556.3 213.33,558.4 213.49,548.8 213.65,544.5 213.81,542.3 213.97,534.8 214.13,531.6 214.29,526.2 214.45,518.7 214.62,516.5 214.78,514.4 214.94,516.5 215.10,516.5 215.26,520.8 215.42,523.0 215.58,523.0 215.74,541.2 215.90,555.2 216.06,555.2 216.23,557.4 216.39,561.7 216.55,546.6 216.71,540.2 216.87,538.0 217.03,530.5 217.19,526.2 217.35,527.3 217.51,524.0 217.68,525.1 217.84,525.1 218.00,524.0 218.16,519.7 218.32,518.7 218.48,523.0 218.64,531.6 218.80,534.8 218.96,533.7 219.12,533.7 219.29,529.4 219.45,526.2 219.61,525.1 219.77,525.1 219.93,525.1 220.09,523.0 220.25,520.8 220.41,519.7 220.57,521.9 220.73,518.7 220.90,517.6 221.06,518.7 221.22,516.5 221.38,515.4 221.54,455.2 221.70,454.1 221.86,455.2 222.02,460.6 222.18,461.7 222.35,528.3 222.51,529.4 222.67,531.6 222.83,530.5 222.99,532.6 223.15,528.3 223.31,530.5 223.47,525.1 223.63,525.1 223.79,523.0 223.96,527.3 224.12,526.2 224.28,524.0 224.44,524.0 224.60,523.0 224.76,518.7 224.92,519.7 225.08,524.0 225.24,532.6 225.40,535.9 225.57,532.6 225.73,531.6 225.89,530.5 226.05,523.0 226.21,518.7 226.37,524.0 226.53,523.0 226.69,519.7 226.85,517.6 227.02,517.6 227.18,515.4 227.34,514.4 227.50,516.5 227.66,518.7 227.82,521.9 227.98,527.3 228.14,531.6 228.30,468.1 228.46,467.0 228.63,467.0 228.79,460.6 228.95,457.4 229.11,521.9 229.27,457.4 229.43,456.3 229.59,461.7 229.75,461.7 229.91,461.7 230.08,528.3 230.24,463.8 230.40,458.4 230.56,458.4 230.72,463.8 230.88,464.9 231.04,526.2 231.20,528.3 231.36,469.2 231.52,405.7 231.69,401.4 231.85,402.5 232.01,399.3 232.17,462.7 232.33,521.9 232.49,461.7 232.65,461.7 232.81,466.0 232.97,461.7 233.13,460.6 233.30,460.6 233.46,462.7 233.62,457.4 233.78,460.6 233.94,458.4 234.10,519.7 234.26,530.5 234.42,539.1 234.58,541.2 234.75,556.3 234.91,561.7 235.07,550.9 235.23,549.8 235.39,543.4 235.55,527.3 235.71,518.7 235.87,520.8 236.03,513.3 236.19,517.6 236.36,521.9 236.52,524.0 236.68,518.7 236.84,523.0 237.00,524.0 237.16,525.1 237.32,525.1 237.48,530.5 237.64,530.5 237.81,536.9 237.97,554.1 238.13,550.9 238.29,554.1 238.45,577.8 238.61,574.6 238.77,556.3 238.93,558.4 239.09,549.8 239.25,524.0 239.42,516.5 239.58,514.4 239.74,514.4 239.90,515.4 240.06,513.3 240.22,543.4 240.38,541.2 240.54,541.2 240.70,540.2 240.86,541.2 241.03,511.1 241.19,513.3 241.35,512.2 241.51,513.3 241.67,514.4 241.83,516.5 241.99,517.6 242.15,518.7 242.31,526.2 242.48,536.9 242.64,533.7 242.80,533.7 242.96,533.7 243.12,527.3 243.28,517.6 243.44,520.8 243.60,518.7 243.76,520.8 243.92,523.0 244.09,519.7 244.25,519.7 244.41,521.9 244.57,523.0 244.73,538.0 244.89,542.3 245.05,545.5 245.21,583.2 245.37,605.8 245.53,589.6 245.70,598.2 245.86,592.9 246.02,552.0 246.18,524.0 246.34,526.2 246.50,516.5 246.66,517.6 246.82,521.9 246.98,527.3 247.15,526.2 247.31,462.7 247.47,467.0 247.63,467.0 247.79,472.4 247.95,471.3 248.11,538.0 248.27,540.2 248.43,540.2 248.59,535.9 248.76,532.6 248.92,531.6 249.08,526.2 249.24,461.7 249.40,459.5 249.56,487.5 249.72,482.1 249.88,483.2 250.04,545.5 250.21,481.0 250.37,412.2 250.53,418.6 250.69,416.5 250.85,429.4 251.01,493.9 251.17,538.0 251.33,534.8 251.49,541.2 251.65,528.3 251.82,525.1 251.98,524.0 252.14,524.0 252.30,516.5 252.46,516.5 252.62,516.5 252.78,528.3 252.94,526.2 253.10,527.3 253.26,531.6 253.43,536.9 253.59,532.6 253.75,532.6 253.91,540.2 254.07,476.7 254.23,411.1 254.39,413.3 254.55,425.1 254.71,428.3 254.88,487.5 255.04,559.5 255.20,487.5 255.36,481.0 255.52,481.0 255.68,481.0 255.84,470.3 256.00,473.5 256.16,468.1 256.32,477.8 256.49,477.8 256.65,489.6 256.81,556.3 256.97,555.2 257.13,539.1 257.29,492.8 257.45,485.3 257.61,476.7 257.77,477.8 257.94,471.3 258.10,519.7 258.26,518.7 258.42,523.0 258.58,528.3 258.74,529.4 258.90,529.4 259.06,531.6 259.22,534.8 259.38,469.2 259.55,472.4 259.71,469.2 259.87,464.9 260.03,458.4 260.19,539.1 260.35,538.0 260.51,545.5 260.67,546.6 260.83,548.8 260.99,530.5 261.16,528.3 261.32,520.8 261.48,456.3 261.64,461.7 261.80,462.7 261.96,463.8 262.12,468.1 262.28,528.3 262.44,521.9 262.61,457.4 262.77,455.2 262.93,449.8 263.09,391.8 263.25,388.5 263.41,455.2 263.57,475.6 263.73,479.9 263.89,542.3 264.05,552.0 264.22,546.6 264.38,529.4 264.54,532.6 264.70,534.8 264.86,536.9 265.02,475.6 265.18,486.4 265.34,478.9 265.50,476.7 265.66,466.0 265.83,466.0 265.99,401.4 266.15,407.9 266.31,406.8 266.47,406.8 266.63,469.2 266.79,459.5 266.95,454.1 267.11,454.1 267.28,454.1 267.44,453.1 267.60,453.1 267.76,454.1 267.92,452.0 268.08,454.1 268.24,454.1 268.40,454.1 268.56,458.4 268.72,459.5 268.89,458.4 269.05,458.4 269.21,458.4 269.37,453.1 269.53,452.0 269.69,450.9 269.85,455.2 270.01,455.2 270.17,455.2 270.34,462.7 270.50,464.9 270.66,403.6 270.82,403.6 270.98,342.3 271.14,342.3 271.30,340.1 271.46,403.6 271.62,403.6 271.78,467.0 271.95,416.5 272.11,420.8 272.27,425.1 272.43,502.5 272.59,506.8 272.75,556.3 272.91,552.0 273.07,546.6 273.23,539.1 273.39,535.9 273.56,468.1 273.72,470.3 273.88,467.0 274.04,460.6 274.20,456.3 274.36,517.6 274.52,516.5 274.68,517.6 274.84,520.8 275.01,524.0 275.17,464.9 275.33,406.8 275.49,403.6 275.65,403.6 275.81,402.5 275.97,469.2 276.13,549.8 276.29,553.1 276.45,488.5 276.62,430.5 276.78,430.5 276.94,407.9 277.10,404.7 277.26,473.5 277.42,469.2 277.58,469.2 277.74,472.4 277.90,478.9 278.07,472.4 278.23,533.7 278.39,538.0 278.55,546.6 278.71,543.4 278.87,539.1 279.03,540.2 279.19,528.3 279.35,516.5 279.51,513.3 279.68,517.6 279.84,525.1 280.00,525.1 280.16,529.4 280.32,534.8 280.48,532.6 280.64,524.0 280.80,524.0 280.96,528.3 281.12,531.6 281.29,530.5 281.45,533.7 281.61,543.4 281.77,561.7 281.93,562.7 282.09,570.3 282.25,569.2 282.41,562.7 282.57,541.2 282.74,532.6 282.90,526.2 283.06,530.5 283.22,527.3 283.38,519.7 283.54,526.2 283.70,526.2 283.86,518.7 284.02,521.9 284.18,525.1 284.35,517.6 284.51,516.5 284.67,519.7 284.83,461.7 284.99,459.5 285.15,458.4 285.31,457.4 285.47,393.9 285.63,450.9 285.79,450.9 285.96,452.0 286.12,453.1 286.28,516.5 286.44,515.4 286.60,514.4 286.76,521.9 286.92,461.7 287.08,400.4 287.24,402.5 287.41,407.9 287.57,404.7 287.73,409.0 287.89,470.3 288.05,472.4 288.21,469.2 288.37,466.0 288.53,523.0 288.69,525.1 288.85,471.3 289.02,472.4 289.18,410.0 289.34,348.7 289.50,344.4 289.66,398.2 289.82,402.5 289.98,468.1 290.14,532.6 290.30,534.8 290.47,467.0 290.63,406.8 290.79,342.3 290.95,343.4 291.11,340.1 291.27,411.1 291.43,411.1 291.59,476.7 291.75,481.0 291.91,481.0 292.08,473.5 292.24,528.3 292.40,528.3 292.56,525.1 292.72,472.4 292.88,475.6 293.04,477.8 293.20,477.8 293.36,412.2 293.52,472.4 293.69,476.7 293.85,476.7 294.01,471.3 294.17,531.6 294.33,527.3 294.49,520.8 294.65,519.7 294.81,521.9 294.97,535.9 295.14,536.9 295.30,562.7 295.46,569.2 295.62,573.5 295.78,573.5 295.94,584.3 296.10,578.9 296.26,588.6 296.42,582.1 296.58,575.6 296.75,584.3 296.91,561.7 297.07,542.3 297.23,570.3 297.39,562.7 297.55,541.2 297.71,564.9 297.87,574.6 298.03,550.9 298.20,549.8 298.36,552.0 298.52,528.3 298.68,532.6 298.84,533.7 299.00,534.8 299.16,535.9 299.32,552.0 299.48,543.4 299.64,490.7 299.81,445.5 299.97,448.8 300.13,446.6 300.29,450.9 300.45,505.7 300.61,549.8 300.77,545.5 300.93,536.9 301.09,528.3 301.25,520.8 301.42,519.7 301.58,518.7 301.74,514.4 301.90,520.8 302.06,520.8 302.22,520.8 302.38,520.8 302.54,519.7 302.70,514.4 302.87,516.5 303.03,525.1 303.19,525.1 303.35,530.5 303.51,532.6 303.67,533.7 303.83,527.3 303.99,525.1 304.15,524.0 304.31,526.2 304.48,523.0 304.64,523.0 304.80,525.1 304.96,460.6 305.12,455.2 305.28,455.2 305.44,392.8 305.60,393.9 305.76,463.8 305.92,402.5 306.09,418.6 306.25,474.6 306.41,410.0 306.57,339.1 306.73,409.0 306.89,331.5 307.05,347.7 307.21,414.3 307.37,414.3 307.54,409.0 307.70,477.8 307.86,474.6 308.02,473.5 308.18,539.1 308.34,544.5 308.50,538.0 308.66,534.8 308.82,530.5 308.98,526.2 309.15,517.6 309.31,519.7 309.47,454.1 309.63,396.1 309.79,400.4 309.95,400.4 310.11,398.2 310.27,458.4 310.43,516.5 310.60,513.3 310.76,529.4 310.92,529.4 311.08,573.5 311.24,588.6 311.40,587.5 311.56,574.6 311.72,575.6 311.88,536.9 312.04,529.4 312.21,534.8 312.37,531.6 312.53,470.3 312.69,473.5 312.85,468.1 313.01,462.7 313.17,463.8 313.33,527.3 313.49,523.0 313.65,519.7 313.82,523.0 313.98,521.9 314.14,518.7 314.30,515.4 314.46,516.5 314.62,512.2 314.78,513.3 314.94,517.6 315.10,523.0 315.27,526.2 315.43,469.2 315.59,419.7 315.75,417.6 315.91,416.5 316.07,419.7 316.23,479.9 316.39,530.5 316.55,536.9 316.71,535.9 316.88,533.7 317.04,541.2 317.20,543.4 317.36,536.9 317.52,547.7 317.68,542.3 317.84,533.7 318.00,533.7 318.16,532.6 318.33,521.9 318.49,532.6 318.65,531.6 318.81,556.3 318.97,554.1 319.13,553.1 319.29,545.5 319.45,484.2 319.61,464.9 319.77,473.5 319.94,474.6 320.10,472.4 320.26,547.7 320.42,545.5 320.58,542.3 320.74,542.3 320.90,543.4 321.06,533.7 321.22,540.2 321.38,533.7 321.55,532.6 321.71,563.8 321.87,583.2 322.03,609.0 322.19,617.6 322.35,623.0 322.51,609.0 322.67,599.3 322.83,580.0 323.00,583.2 323.16,575.6 323.32,556.3 323.48,541.2 323.64,519.7 323.80,507.9 323.96,525.1 324.12,526.2 324.28,543.4 324.44,554.1 324.61,555.2 324.77,542.3 324.93,548.8 325.09,538.0 325.25,529.4 325.41,533.7 325.57,531.6 325.73,542.3 325.89,548.8 326.05,554.1 326.22,558.4 326.38,500.4 326.54,500.4 326.70,491.8 326.86,485.3 327.02,492.8 327.18,550.9 327.34,533.7 327.50,539.1 327.67,548.8 327.83,546.6 327.99,574.6 328.15,574.6 328.31,572.4 328.47,562.7 328.63,553.1 328.79,525.1 328.95,552.0 329.11,556.3 329.28,578.9 329.44,586.4 329.60,590.7 329.76,568.1 329.92,567.0 330.08,546.6 330.24,538.0 330.40,544.5 330.56,547.7 330.73,549.8 330.89,556.3 331.05,557.4 331.21,548.8 331.37,555.2 331.53,549.8 331.69,553.1 331.85,556.3 332.01,554.1 332.17,553.1 332.34,545.5 332.50,534.8 332.66,545.5 332.82,549.8 332.98,541.2 333.14,547.7 333.30,546.6 333.46,529.4 333.62,528.3 333.78,523.0 333.95,525.1 334.11,529.4 334.27,534.8 334.43,539.1 334.59,542.3 334.75,541.2 334.91,538.0 335.07,531.6 335.23,526.2 335.40,525.1 335.56,517.6 335.72,521.9 335.88,521.9 336.04,520.8 336.20,521.9 336.36,462.7 336.52,472.4 336.68,479.9 336.84,476.7 337.01,474.6 337.17,543.4 337.33,531.6 337.49,529.4 337.65,531.6 337.81,532.6 337.97,529.4 338.13,525.1 338.29,519.7 338.46,519.7 338.62,550.9 338.78,546.6 338.94,548.8 339.10,548.8 339.26,548.8 339.42,517.6 339.58,463.8 339.74,461.7 339.90,467.0 340.07,473.5 340.23,475.6 340.39,467.0 340.55,472.4 340.71,467.0 340.87,462.7 341.03,398.2 341.19,472.4 341.35,467.0 341.51,473.5 341.68,476.7 341.84,481.0 342.00,471.3 342.16,475.6 342.32,473.5 342.48,466.0 342.64,524.0 342.80,524.0 342.96,529.4 343.13,533.7 343.29,532.6 343.45,530.5 343.61,533.7 343.77,528.3 343.93,550.9 344.09,558.4 344.25,572.4 344.41,597.2 344.57,595.0 344.74,562.7 344.90,576.7 345.06,569.2 345.22,539.1 345.38,545.5 345.54,554.1 345.70,536.9 345.86,532.6 346.02,546.6 346.18,543.4 346.35,486.4 346.51,483.2 346.67,486.4 346.83,472.4 346.99,470.3 347.15,524.0 347.31,564.9 347.47,563.8 347.63,564.9 347.80,562.7 347.96,558.4 348.12,517.6 348.28,517.6 348.44,453.1 348.60,453.1 348.76,452.0 348.92,464.9 349.08,463.8 349.24,535.9 349.41,475.6 349.57,421.9 349.73,415.4 349.89,352.0 350.05,349.8 350.21,414.3 350.37,409.0 350.53,349.8 350.69,411.1 350.86,343.4 351.02,345.5 351.18,415.4 351.34,406.8 351.50,411.1 351.66,473.5 351.82,467.0 351.98,462.7 352.14,531.6 352.30,552.0 352.47,554.1 352.63,554.1 352.79,548.8 352.95,543.4 353.11,524.0 353.27,519.7 353.43,526.2 353.59,530.5 353.75,533.7 353.91,528.3 354.08,530.5 354.24,528.3 354.40,531.6 354.56,533.7 354.72,532.6 354.88,547.7 355.04,563.8 355.20,557.4 355.36,548.8 355.53,552.0 355.69,545.5 355.85,531.6 356.01,532.6 356.17,538.0 356.33,544.5 356.49,532.6 356.65,529.4 356.81,527.3 356.97,529.4 357.14,525.1 357.30,526.2 357.46,461.7 357.62,464.9 357.78,490.7 357.94,486.4 358.10,488.5 358.26,549.8 358.42,545.5 358.59,513.3 358.75,512.2 358.91,510.1 359.07,512.2 359.23,516.5 359.39,461.7 359.55,475.6 359.71,486.4 359.87,497.1 360.03,493.9 360.20,554.1 360.36,543.4 360.52,547.7 360.68,555.2 360.84,561.7 361.00,584.3 361.16,586.4 361.32,510.1 361.48,448.8 361.64,461.7 361.81,455.2 361.97,456.3 362.13,534.8 362.29,602.5 362.45,589.6 362.61,584.3 362.77,587.5 362.93,587.5 363.09,568.1 363.26,552.0 363.42,475.6 363.58,409.0 363.74,406.8 363.90,403.6 364.06,415.4 364.22,475.6 364.38,532.6 364.54,525.1 364.70,524.0 364.87,527.3 365.03,531.6 365.19,535.9 365.35,469.2 365.51,466.0 365.67,459.5 365.83,472.4 365.99,488.5 366.15,536.9 366.31,475.6 366.48,415.4 366.64,424.0 366.80,404.7 366.96,417.6 367.12,477.8 367.28,478.9 367.44,462.7 367.60,476.7 367.76,474.6 367.93,485.3 368.09,547.7 368.25,539.1 368.41,528.3 368.57,531.6 368.73,528.3 368.89,525.1 369.05,524.0 369.21,523.0 369.37,523.0 369.54,521.9 369.70,525.1 369.86,528.3 370.02,530.5 370.18,535.9 370.34,530.5 370.50,530.5 370.66,530.5 370.82,525.1 370.99,516.5 371.15,516.5 371.31,526.2 371.47,461.7 371.63,425.1 371.79,427.2 371.95,430.5 372.11,422.9 372.27,422.9 372.43,460.6 372.60,459.5 372.76,458.4 372.92,455.2 373.08,520.8 373.24,459.5 373.40,469.2 373.56,467.0 373.72,469.2 373.88,474.6 374.04,474.6 374.21,464.9 374.37,470.3 374.53,468.1 374.69,464.9 374.85,544.5 375.01,546.6 375.17,549.8 375.33,575.6 375.49,581.0 375.66,566.0 375.82,568.1 375.98,567.0 376.14,542.3 376.30,531.6 376.46,531.6 376.62,531.6 376.78,528.3 376.94,527.3 377.10,529.4 377.27,529.4 377.43,523.0 377.59,519.7 377.75,520.8 377.91,525.1 378.07,524.0 378.23,526.2 378.39,526.2 378.55,525.1 378.72,520.8 378.88,531.6 379.04,532.6 379.20,571.3 379.36,570.3 379.52,572.4 379.68,559.5 379.84,559.5 380.00,521.9 380.16,525.1 380.33,524.0 380.49,523.0 380.65,524.0 380.81,523.0 380.97,524.0 381.13,523.0 381.29,532.6 381.45,530.5 381.61,530.5 381.77,526.2 381.94,528.3 382.10,520.8 382.26,520.8 382.42,518.7 382.58,519.7 382.74,514.4 382.90,514.4 383.06,521.9 383.22,521.9 383.39,529.4 383.55,533.7 383.71,547.7 383.87,546.6 384.03,571.3 384.19,570.3 384.35,572.4 384.51,569.2 384.67,571.3 384.83,555.2 385.00,572.4 385.16,591.8 385.32,580.0 385.48,592.9 385.64,590.7 385.80,573.5 385.96,552.0 386.12,575.6 386.28,581.0 386.44,584.3 386.61,583.2 386.77,583.2 386.93,558.4 387.09,538.0 387.25,538.0 387.41,541.2 387.57,544.5 387.73,550.9 387.89,558.4 388.06,558.4 388.22,552.0 388.38,544.5 388.54,538.0 388.70,534.8 388.86,532.6 389.02,539.1 389.18,553.1 389.34,557.4 389.50,548.8 389.67,542.3 389.83,538.0 389.99,524.0 390.15,520.8 390.31,519.7 390.47,518.7 390.63,541.2 390.79,541.2 390.95,546.6 391.12,546.6 391.28,550.9 391.44,521.9 391.60,525.1 391.76,521.9 391.92,523.0 392.08,521.9 392.24,532.6 392.40,533.7 392.56,538.0 392.73,538.0 392.89,544.5 393.05,541.2 393.21,540.2 393.37,544.5 393.53,540.2 393.69,553.1 393.85,553.1 394.01,555.2 394.17,549.8 394.34,562.7 394.50,547.7 394.66,540.2 394.82,535.9 394.98,557.4 395.14,567.0 395.30,585.3 395.46,596.1 395.62,595.0 395.79,574.6 395.95,555.2 396.11,533.7 396.27,535.9 396.43,534.8 396.59,528.3 396.75,531.6 396.91,528.3 397.07,515.4 397.23,519.7 397.40,535.9 397.56,531.6 397.72,533.7 397.88,539.1 398.04,538.0 398.20,527.3 398.36,534.8 398.52,538.0 398.68,542.3 398.85,546.6 399.01,546.6 399.17,540.2 399.33,539.1 399.49,541.2 399.65,544.5 399.81,562.7 399.97,562.7 400.13,570.3 400.29,561.7 400.46,557.4 400.62,547.7 400.78,545.5 400.94,473.5 401.10,478.9 401.26,412.2 401.42,338.0 401.58,345.5 401.74,345.5 401.90,348.7 402.07,352.0 402.23,354.1 402.39,288.5 402.55,290.7 402.71,279.9 402.87,363.8 403.03,421.9 403.19,481.0 403.35,538.0 403.52,538.0 403.68,514.4 403.84,514.4 404.00,515.4 404.16,516.5 404.32,515.4 404.48,512.2 404.64,513.3 404.80,511.1 404.96,511.1 405.13,512.2 405.29,513.3 405.45,517.6 405.61,520.8 405.77,519.7 405.93,518.7 406.09,517.6 406.25,513.3 406.41,510.1 406.57,513.3 406.74,514.4 406.90,515.4 407.06,514.4 407.22,516.5 407.38,514.4 407.54,514.4 407.70,513.3 407.86,515.4 408.02,513.3 408.19,513.3 408.35,514.4 408.51,515.4 408.67,512.2 408.83,512.2 408.99,514.4 409.15,514.4 409.31,514.4 409.47,516.5 409.63,521.9 409.80,519.7 409.96,517.6 410.12,519.7 410.28,523.0 410.44,523.0 410.60,525.1 410.76,533.7 410.92,532.6 411.08,531.6 411.25,464.9 411.41,461.7 411.57,455.2 411.73,457.4 411.89,453.1 412.05,515.4 412.21,517.6 412.37,516.5 412.53,514.4 412.69,514.4 412.86,515.4 413.02,514.4 413.18,515.4 413.34,517.6 413.50,518.7 413.66,516.5 413.82,515.4 413.98,514.4 414.14,512.2 414.30,513.3 414.47,514.4 414.63,515.4 414.79,517.6 414.95,518.7 415.11,517.6 415.27,520.8 415.43,520.8 415.59,519.7 415.75,516.5 415.92,517.6 416.08,513.3 416.24,512.2 416.40,511.1 416.56,528.3 416.72,527.3 416.88,526.2 417.04,528.3 417.20,529.4 417.36,513.3 417.53,513.3 417.69,513.3 417.85,512.2 418.01,511.1 418.17,511.1 418.33,513.3 418.49,558.4 418.65,559.5 418.81,561.7 418.98,560.6 419.14,561.7 419.30,517.6 419.46,516.5 419.62,515.4 419.78,515.4 419.94,514.4 420.10,515.4 420.26,516.5 420.42,515.4 420.59,518.7 420.75,518.7 420.91,519.7 421.07,517.6 421.23,518.7 421.39,516.5 421.55,517.6 421.71,520.8 421.87,524.0 422.03,523.0 422.20,462.7 422.36,464.9 422.52,481.0 422.68,478.9 422.84,477.8 423.00,539.1 423.16,534.8 423.32,453.1 423.48,454.1 423.65,454.1 423.81,453.1 423.97,452.0 424.13,513.3 424.29,450.9 424.45,426.2 424.61,427.2 424.77,428.3 424.93,427.2 425.09,488.5 425.26,454.1 425.42,457.4 425.58,496.1 425.74,497.1 425.90,499.3 426.06,561.7 426.22,497.1 426.38,458.4 426.54,459.5 426.70,458.4 426.87,397.1 427.03,458.4 427.19,457.4 427.35,459.5 427.51,398.2 427.67,458.4 427.83,460.6 427.99,410.0 428.15,405.7 428.32,467.0 428.48,466.0 428.64,462.7 428.80,513.3 428.96,512.2 429.12,512.2 429.28,514.4 429.44,515.4 429.60,515.4 429.76,518.7 429.93,518.7 430.09,515.4 430.25,514.4 430.41,515.4 430.57,513.3 430.73,513.3 430.89,515.4 431.05,515.4 431.21,514.4 431.38,515.4 431.54,517.6 431.70,518.7 431.86,520.8 432.02,521.9 432.18,520.8 432.34,517.6 432.50,514.4 432.66,512.2 432.82,512.2 432.99,512.2 433.15,520.8 433.31,523.0 433.47,521.9 433.63,523.0 433.79,525.1 433.95,517.6 434.11,517.6 434.27,519.7 434.43,516.5 434.60,518.7 434.76,517.6 434.92,516.5 435.08,515.4 435.24,515.4 435.40,511.1 435.56,515.4 435.72,518.7 435.88,518.7 436.05,527.3 436.21,532.6 436.37,528.3 436.53,526.2 436.69,534.8 436.85,526.2 437.01,521.9 437.17,524.0 437.33,525.1 437.49,517.6 437.66,520.8 437.82,519.7 437.98,517.6 438.14,514.4 438.30,514.4 438.46,517.6 438.62,518.7 438.78,520.8 438.94,521.9 439.11,520.8 439.27,514.4 439.43,466.0 439.59,463.8 439.75,464.9 439.91,464.9 440.07,464.9 440.23,511.1 440.39,511.1 440.55,510.1 440.72,513.3 440.88,513.3 441.04,513.3 441.20,513.3 441.36,515.4 441.52,512.2 441.68,513.3 441.84,514.4 442.00,515.4 442.16,513.3 442.33,463.8 442.49,462.7 442.65,463.8 442.81,463.8 442.97,470.3 443.13,519.7 443.29,524.0 443.45,521.9 443.61,520.8 443.78,513.3 443.94,515.4 444.10,512.2 444.26,516.5 444.42,516.5 444.58,516.5 444.74,514.4 444.90,514.4 445.06,512.2 445.22,513.3 445.39,514.4 445.55,513.3 445.71,512.2 445.87,511.1 446.03,510.1 446.19,512.2 446.35,514.4 446.51,518.7 446.67,519.7 446.83,519.7 447.00,524.0 447.16,523.0 447.32,519.7 447.48,518.7 447.64,520.8 447.80,514.4 447.96,514.4 448.12,514.4 448.28,515.4 448.45,513.3 448.61,513.3 448.77,513.3 448.93,513.3 449.09,514.4 449.25,515.4 449.41,514.4 449.57,514.4 449.73,517.6 449.89,515.4 450.06,524.0 450.22,526.2 450.38,525.1 450.54,521.9 450.70,524.0 450.86,517.6 451.02,515.4 451.18,518.7 451.34,517.6 451.51,518.7 451.67,516.5 451.83,517.6 451.99,515.4 452.15,517.6 452.31,516.5 452.47,525.1 452.63,526.2 452.79,527.3 452.95,527.3 453.12,529.4 453.28,486.4 453.44,485.3 453.60,484.2 453.76,482.1 453.92,476.7 454.08,510.1 454.24,510.1 454.40,510.1 454.56,511.1 454.73,513.3 454.89,513.3 455.05,512.2 455.21,513.3 455.37,514.4 455.53,513.3 455.69,513.3 455.85,514.4 456.01,514.4 456.18,513.3 456.34,513.3 456.50,514.4 456.66,514.4 456.82,513.3 456.98,515.4 457.14,515.4 457.30,515.4 457.46,515.4 457.62,514.4 457.79,512.2 457.95,513.3 458.11,515.4 458.27,514.4 458.43,514.4 458.59,516.5 458.75,516.5 458.91,513.3 459.07,515.4 459.24,515.4 459.40,514.4 459.56,513.3 459.72,513.3 459.88,512.2 460.04,512.2 460.20,511.1 460.36,512.2 460.52,511.1 460.68,510.1 460.85,512.2 461.01,512.2 461.17,515.4 461.33,515.4 461.49,515.4 461.65,514.4 461.81,514.4 461.97,510.1 462.13,511.1 462.29,513.3 462.46,512.2 462.62,512.2 462.78,511.1 462.94,510.1 463.10,507.9 463.26,507.9 463.42,506.8 463.58,509.0 463.74,509.0 463.91,514.4 464.07,514.4 464.23,514.4 464.39,514.4 464.55,515.4 464.71,511.1 464.87,512.2 465.03,513.3 465.19,514.4 465.35,516.5 465.52,515.4 465.68,515.4 465.84,515.4 466.00,513.3 466.16,512.2 466.32,526.2 466.48,525.1 466.64,524.0 466.80,529.4 466.96,529.4 467.13,517.6 467.29,519.7 467.45,520.8 467.61,514.4 467.77,515.4 467.93,513.3 468.09,513.3 468.25,512.2 468.41,512.2 468.58,511.1 468.74,513.3 468.90,512.2 469.06,536.9 469.22,538.0 469.38,536.9 469.54,538.0 469.70,536.9 469.86,512.2 470.02,512.2 470.19,512.2 470.35,510.1 470.51,511.1 470.67,513.3 470.83,513.3 470.99,514.4 471.15,514.4 471.31,513.3 471.47,512.2 471.64,513.3 471.80,511.1 471.96,511.1 472.12,514.4 472.28,513.3 472.44,528.3 472.60,528.3 472.76,530.5 472.92,528.3 473.08,528.3 473.25,512.2 473.41,512.2 473.57,510.1 473.73,510.1 473.89,510.1 474.05,509.0 474.21,511.1 474.37,511.1 474.53,510.1 474.69,510.1 474.86,511.1 475.02,509.0 475.18,510.1 475.34,511.1 475.50,456.3 475.66,456.3 475.82,456.3 475.98,454.1 476.14,454.1 476.31,509.0 476.47,507.9 476.63,510.1 476.79,510.1 476.95,510.1 477.11,512.2 477.27,516.5 477.43,516.5 477.59,516.5 477.75,516.5 477.92,515.4 478.08,511.1 478.24,509.0 478.40,509.0 478.56,509.0 478.72,509.0 478.88,510.1 479.04,510.1 479.20,510.1 479.37,511.1 479.53,510.1 479.69,510.1 479.85,510.1 480.01,510.1 480.17,507.9 480.33,507.9 480.49,446.6 480.65,446.6 480.81,464.9 480.98,466.0 481.14,466.0 481.30,526.2 481.46,526.2 481.62,507.9 481.78,506.8 481.94,507.9 482.10,507.9 482.26,511.1 482.42,515.4 482.59,519.7 482.75,521.9 482.91,521.9 483.07,519.7 483.23,516.5 483.39,489.6 483.55,487.5 483.71,488.5 483.87,487.5 484.04,486.4 484.20,509.0 484.36,509.0 484.52,507.9 484.68,509.0 484.84,509.0 485.00,510.1 485.16,510.1 485.32,528.3 485.48,528.3 485.65,528.3 485.81,527.3 485.97,527.3 486.13,511.1 486.29,510.1 486.45,511.1 486.61,511.1 486.77,510.1 486.93,509.0 487.09,510.1 487.26,509.0 487.42,510.1 487.58,511.1 487.74,510.1 487.90,509.0 488.06,509.0 488.22,507.9 488.38,507.9 488.54,509.0 488.71,509.0 488.87,510.1 489.03,511.1 489.19,513.3 489.35,513.3 489.51,513.3 489.67,512.2 489.83,512.2 489.99,509.0 490.15,509.0 490.32,509.0 490.48,510.1 490.64,509.0 490.80,510.1 490.96,511.1 491.12,513.3 491.28,512.2 491.44,513.3 491.60,515.4 491.77,515.4 491.93,514.4 492.09,515.4 492.25,555.2 492.41,553.1 492.57,552.0 492.73,550.9 492.89,550.9 493.05,511.1 493.21,511.1 493.38,511.1 493.54,512.2 493.70,511.1 493.86,511.1 494.02,510.1 494.18,509.0 494.34,509.0 494.50,466.0 494.66,464.9 494.82,466.0 494.99,466.0 495.15,464.9 495.31,510.1 495.47,510.1 495.63,509.0 495.79,509.0 495.95,510.1 496.11,509.0 496.27,549.8 496.44,549.8 496.60,549.8 496.76,550.9 496.92,549.8 497.08,510.1 497.24,510.1 497.40,510.1 497.56,509.0 497.72,510.1 497.88,510.1 498.05,510.1 498.21,510.1 498.37,509.0 498.53,509.0 498.69,507.9 498.85,509.0 499.01,510.1 499.17,511.1 499.33,510.1 499.50,511.1 499.66,510.1 499.82,512.2 499.98,511.1 500.14,512.2 500.30,511.1 500.46,511.1 500.62,507.9 500.78,514.4 500.94,514.4 501.11,515.4 501.27,516.5 501.43,516.5 501.59,511.1 501.75,510.1 501.91,512.2 502.07,512.2 502.23,513.3 502.39,513.3 502.55,514.4 502.72,512.2 502.88,512.2 503.04,511.1 503.20,511.1 503.36,511.1 503.52,511.1 503.68,511.1 503.84,511.1 504.00,510.1 504.17,509.0 504.33,507.9 504.49,507.9 504.65,509.0 504.81,511.1 504.97,511.1 505.13,513.3 505.29,515.4 505.45,515.4 505.61,515.4 505.78,515.4 505.94,515.4 506.10,512.2 506.26,513.3 506.42,512.2 506.58,513.3 506.74,511.1 506.90,513.3 507.06,511.1 507.22,510.1 507.39,510.1 507.55,511.1 507.71,509.0 507.87,510.1 508.03,511.1 508.19,510.1 508.35,509.0 508.51,510.1 508.67,509.0 508.84,509.0 509.00,509.0 509.16,510.1 509.32,509.0 509.48,510.1 509.64,510.1 509.80,512.2 509.96,511.1 510.12,512.2 510.28,511.1 510.45,460.6 510.61,458.4 510.77,460.6 510.93,460.6 511.09,461.7 511.25,513.3 511.41,515.4 511.57,513.3 511.73,512.2 511.90,512.2 512.06,511.1 512.22,509.0 512.38,510.1 512.54,511.1 512.70,510.1 512.86,510.1 513.02,511.1 513.18,511.1 513.34,518.7 513.51,520.8 513.67,519.7 513.83,518.7 513.99,518.7 514.15,513.3 514.31,511.1 514.47,512.2 514.63,512.2 514.79,512.2 514.95,509.0 515.12,510.1 515.28,510.1 515.44,511.1 515.60,510.1 515.76,510.1 515.92,511.1 516.08,511.1 516.24,511.1 516.40,511.1 516.57,512.2 516.73,510.1 516.89,512.2 517.05,512.2 517.21,515.4 517.37,514.4 517.53,514.4 517.69,512.2 517.85,511.1 518.01,509.0 518.18,510.1 518.34,510.1 518.50,510.1 518.66,510.1 518.82,511.1 518.98,511.1 519.14,512.2 519.30,514.4 519.46,514.4 519.63,513.3 519.79,512.2 519.95,512.2 520.11,513.3 520.27,514.4 520.43,514.4 520.59,515.4 520.75,515.4 520.91,511.1 521.07,510.1 521.24,514.4 521.40,514.4 521.56,514.4 521.72,515.4 521.88,517.6 522.04,514.4 522.20,513.3 522.36,513.3 522.52,514.4 522.68,512.2 522.85,510.1 523.01,512.2 523.17,512.2 523.33,542.3 523.49,543.4 523.65,543.4 523.81,542.3 523.97,541.2 524.13,509.0 524.30,509.0 524.46,511.1 524.62,510.1 524.78,513.3 524.94,514.4 525.10,513.3 525.26,512.2 525.42,513.3 525.58,510.1 525.74,512.2 525.91,513.3 526.07,512.2 526.23,513.3 526.39,514.4 526.55,511.1 526.71,511.1 526.87,512.2 527.03,510.1 527.19,509.0 527.35,510.1 527.52,510.1 527.68,510.1 527.84,511.1 528.00,512.2 528.16,512.2 528.32,512.2 528.48,512.2 528.64,511.1 528.80,510.1 528.97,510.1 529.13,511.1 529.29,511.1 529.45,511.1 529.61,512.2 529.77,515.4 529.93,514.4 530.09,515.4 530.25,515.4 530.41,515.4 530.58,512.2 530.74,512.2 530.90,510.1 531.06,510.1 531.22,512.2 531.38,513.3 531.54,512.2 531.70,512.2 531.86,513.3 532.03,510.1 532.19,510.1 532.35,510.1 532.51,512.2 532.67,513.3 532.83,514.4 532.99,512.2 533.15,512.2 533.31,511.1 533.47,510.1 533.64,509.0 533.80,509.0 533.96,510.1 534.12,510.1 534.28,509.0 534.44,509.0 534.60,549.8 534.76,548.8 534.92,548.8 535.08,548.8 535.25,550.9 535.41,510.1 535.57,510.1 535.73,509.0 535.89,509.0 536.05,506.8 536.21,531.6 536.37,532.6 536.53,534.8 536.70,534.8 536.86,534.8 537.02,511.1 537.18,511.1 537.34,510.1 537.50,510.1 537.66,510.1 537.82,510.1 537.98,509.0 538.14,507.9 538.31,510.1 538.47,512.2 538.63,511.1 538.79,513.3 538.95,515.4 539.11,514.4 539.27,514.4 539.43,515.4 539.59,517.6 539.76,516.5 539.92,515.4 540.08,515.4 540.24,514.4 540.40,510.1 540.56,509.0 540.72,509.0 540.88,507.9 541.04,510.1 541.20,510.1 541.37,511.1 541.53,511.1 541.69,511.1 541.85,510.1 542.01,511.1 542.17,510.1 542.33,461.7 542.49,461.7 542.65,460.6 542.81,459.5 542.98,459.5 543.14,507.9 543.30,506.8 543.46,507.9 543.62,509.0 543.78,512.2 543.94,513.3 544.10,514.4 544.26,528.3 544.43,527.3 544.59,525.1 544.75,524.0 544.91,523.0 545.07,509.0 545.23,510.1 545.39,510.1 545.55,533.7 545.71,535.9 545.87,534.8 546.04,534.8 546.20,534.8 546.36,511.1 546.52,511.1 546.68,514.4 546.84,513.3 547.00,514.4 547.16,515.4 547.32,462.7 547.48,460.6 547.65,461.7 547.81,461.7 547.97,461.7 548.13,514.4 548.29,516.5 548.45,516.5 548.61,514.4 548.77,513.3 548.93,512.2 549.10,509.0 549.26,462.7 549.42,463.8 549.58,463.8 549.74,463.8 549.90,464.9 550.06,511.1 550.22,510.1 550.38,510.1 550.54,510.1 550.71,510.1 550.87,509.0 551.03,510.1 551.19,511.1 551.35,510.1 551.51,509.0 551.67,509.0 551.83,507.9 551.99,506.8 552.16,511.1 552.32,511.1 552.48,511.1 552.64,512.2 552.80,512.2 552.96,507.9 553.12,509.0 553.28,510.1 553.44,509.0 553.60,510.1 553.77,511.1 553.93,511.1 554.09,511.1 554.25,511.1 554.41,510.1 554.57,510.1 554.73,511.1 554.89,510.1 555.05,510.1 555.21,510.1 555.38,509.0 555.54,529.4 555.70,529.4 555.86,530.5 556.02,531.6 556.18,533.7 556.34,511.1 556.50,511.1 556.66,511.1 556.83,510.1 556.99,512.2 557.15,512.2 557.31,515.4 557.47,514.4 557.63,515.4 557.79,512.2 557.95,512.2 558.11,509.0 558.27,509.0 558.44,523.0 558.60,524.0 558.76,524.0 558.92,524.0 559.08,524.0 559.24,509.0 559.40,507.9 559.56,510.1 559.72,510.1 559.89,511.1 560.05,512.2 560.21,511.1 560.37,509.0 560.53,510.1 560.69,511.1 560.85,512.2 561.01,513.3 561.17,513.3 561.33,514.4 561.50,512.2 561.66,511.1 561.82,511.1 561.98,511.1 562.14,509.0 562.30,510.1 562.46,509.0 562.62,507.9 562.78,507.9 562.94,507.9 563.11,532.6 563.27,532.6 563.43,532.6 563.59,533.7 563.75,534.8 563.91,509.0 564.07,510.1 564.23,510.1 564.39,510.1 564.56,510.1 564.72,510.1 564.88,509.0 565.04,509.0 565.20,509.0 565.36,507.9 565.52,509.0 565.68,510.1 565.84,510.1 566.00,509.0 566.17,509.0 566.33,510.1 566.49,539.1 566.65,539.1 566.81,540.2 566.97,542.3 567.13,556.3 567.29,527.3 567.45,529.4 567.61,530.5 567.78,529.4 567.94,514.4 568.10,513.3 568.26,471.3 568.42,470.3 568.58,469.2 568.74,470.3 568.90,471.3 569.06,513.3 569.23,513.3 569.39,513.3 569.55,513.3 569.71,514.4 569.87,514.4 570.03,515.4 570.19,517.6 570.35,516.5 570.51,515.4 570.67,514.4 570.84,512.2 571.00,511.1 571.16,511.1 571.32,511.1 571.48,511.1 571.64,512.2 571.80,512.2 571.96,512.2 572.12,511.1 572.29,511.1 572.45,510.1 572.61,509.0 572.77,507.9 572.93,507.9 573.09,507.9 573.25,509.0 573.41,509.0 573.57,509.0 573.73,510.1 573.90,509.0 574.06,507.9 574.22,507.9 574.38,507.9 574.54,526.2 574.70,529.4 574.86,529.4 575.02,529.4 575.18,529.4 575.34,510.1 575.51,507.9 575.67,507.9 575.83,507.9 575.99,507.9 576.15,510.1 576.31,510.1 576.47,510.1 576.63,510.1 576.79,511.1 576.96,510.1 577.12,510.1 577.28,513.3 577.44,515.4 577.60,514.4 577.76,514.4 577.92,514.4 578.08,513.3 578.24,513.3 578.40,517.6 578.57,516.5 578.73,516.5 578.89,514.4 579.05,512.2 579.21,510.1 579.37,510.1 579.53,510.1 579.69,510.1 579.85,511.1 580.02,509.0 580.18,510.1 580.34,509.0 580.50,509.0 580.66,507.9 580.82,509.0 580.98,507.9 581.14,507.9 581.30,507.9 581.46,507.9 581.63,506.8 581.79,506.8 581.95,507.9 582.11,509.0 582.27,509.0 582.43,510.1 582.59,511.1 582.75,510.1 582.91,509.0 583.07,549.8 583.24,548.8 583.40,547.7 583.56,547.7 583.72,547.7 583.88,507.9 584.04,507.9 584.20,507.9 584.36,507.9 584.52,507.9 584.69,509.0 584.85,509.0 585.01,509.0 585.17,509.0 585.33,510.1 585.49,507.9 585.65,507.9 585.81,507.9 585.97,507.9 586.13,506.8 586.30,506.8 586.46,547.7 586.62,548.8 586.78,548.8 586.94,549.8 587.10,549.8 587.26,510.1 587.42,460.6 587.58,461.7 587.74,464.9 587.91,464.9 588.07,463.8 588.23,512.2 588.39,511.1 588.55,506.8 588.71,509.0 588.87,509.0 589.03,510.1 589.19,511.1 589.36,512.2 589.52,510.1 589.68,511.1 589.84,510.1 590.00,511.1 590.16,511.1 590.32,511.1 590.48,510.1 590.64,510.1 590.80,507.9 590.97,506.8 591.13,507.9 591.29,507.9 591.45,509.0 591.61,509.0 591.77,510.1 591.93,509.0 592.09,510.1 592.25,511.1 592.42,512.2 592.58,511.1 592.74,512.2 592.90,513.3 593.06,512.2 593.22,511.1 593.38,529.4 593.54,529.4 593.70,528.3 593.86,527.3 594.03,528.3 594.19,510.1 594.35,509.0 594.51,507.9 594.67,510.1 594.83,509.0 594.99,509.0 595.15,509.0 595.31,509.0 595.47,509.0 595.64,509.0 595.80,509.0 595.96,509.0 596.12,510.1 596.28,507.9 596.44,526.2 596.60,527.3 596.76,528.3 596.92,529.4 597.09,530.5 597.25,515.4 597.41,514.4 597.57,513.3 597.73,512.2 597.89,511.1 598.05,509.0 598.21,509.0 598.37,509.0 598.53,507.9 598.70,507.9 598.86,507.9 599.02,507.9 599.18,509.0 599.34,509.0 599.50,509.0 599.66,509.0 599.82,511.1 599.98,511.1 600.15,514.4 600.31,516.5 600.47,516.5 600.63,514.4 600.79,515.4 600.95,514.4 601.11,512.2 601.27,513.3 601.43,514.4 601.59,512.2 601.76,511.1 601.92,511.1 602.08,509.0 602.24,507.9 602.40,507.9 602.56,506.8 602.72,510.1 602.88,511.1 603.04,514.4 603.20,516.5 603.37,516.5 603.53,514.4 603.69,514.4 603.85,513.3 604.01,512.2 604.17,512.2 604.33,511.1 604.49,510.1 604.65,507.9 604.82,507.9 604.98,507.9 605.14,507.9 605.30,507.9 605.46,509.0 605.62,507.9 605.78,507.9 605.94,507.9 606.10,509.0 606.26,509.0 606.43,509.0 606.59,511.1 606.75,511.1 606.91,511.1 607.07,510.1 607.23,510.1 607.39,507.9 607.55,509.0 607.71,507.9 607.87,507.9 608.04,509.0 608.20,510.1 608.36,510.1 608.52,510.1 608.68,510.1 608.84,509.0 609.00,507.9 609.16,506.8 609.32,507.9 609.49,509.0 609.65,509.0 609.81,509.0 609.97,509.0 610.13,507.9 610.29,506.8 610.45,506.8 610.61,507.9 610.77,507.9 610.93,507.9 611.10,507.9 611.26,509.0 611.42,507.9 611.58,507.9 611.74,507.9 611.90,509.0 612.06,509.0 612.22,510.1 612.38,510.1 612.55,510.1 612.71,513.3 612.87,516.5 613.03,516.5 613.19,517.6 613.35,517.6 613.51,514.4 613.67,510.1 613.83,509.0 613.99,509.0 614.16,509.0 614.32,507.9 614.48,507.9 614.64,509.0 614.80,509.0 614.96,510.1 615.12,512.2 615.28,514.4 615.44,514.4 615.60,514.4 615.77,514.4 615.93,512.2 616.09,510.1 616.25,509.0 616.41,507.9 616.57,507.9 616.73,507.9 616.89,509.0 617.05,509.0 617.22,510.1 617.38,513.3 617.54,513.3 617.70,513.3 617.86,514.4 618.02,514.4 618.18,510.1 618.34,511.1 618.50,510.1 618.66,509.0 618.83,509.0 618.99,511.1 619.15,511.1 619.31,512.2 619.47,514.4 619.63,513.3 619.79,511.1 619.95,511.1 620.11,510.1 620.28,511.1 620.44,511.1 620.60,514.4 620.76,515.4 620.92,516.5 621.08,513.3 621.24,515.4 621.40,513.3 621.56,512.2 621.72,514.4 621.89,514.4 622.05,512.2 622.21,511.1 622.37,511.1 622.53,507.9 622.69,507.9 622.85,511.1 623.01,511.1 623.17,510.1 623.33,512.2 623.50,514.4 623.66,511.1 623.82,512.2 623.98,513.3 624.14,512.2 624.30,511.1 624.46,512.2 624.62,511.1 624.78,511.1 624.95,511.1 625.11,512.2 625.27,511.1 625.43,511.1 625.59,510.1 625.75,512.2 625.91,510.1 626.07,510.1 626.23,513.3 626.39,513.3 626.56,510.1 626.72,510.1 626.88,510.1 627.04,506.8 627.20,506.8 627.36,507.9 627.52,507.9 627.68,509.0 627.84,509.0 628.00,509.0 628.17,507.9 628.33,507.9 628.49,506.8 628.65,506.8 628.81,506.8 628.97,506.8 629.13,506.8 629.29,507.9 629.45,507.9 629.62,509.0 629.78,509.0 629.94,510.1 630.10,509.0 630.26,510.1 630.42,509.0 630.58,509.0 630.74,507.9 630.90,507.9 631.06,509.0 631.23,510.1 631.39,510.1 631.55,514.4 631.71,515.4 631.87,514.4 632.03,514.4 632.19,514.4 632.35,510.1 632.51,509.0 632.68,512.2 632.84,511.1 633.00,513.3 633.16,513.3 633.32,514.4 633.48,511.1 633.64,511.1 633.80,509.0 633.96,510.1 634.12,509.0 634.29,509.0 634.45,510.1 634.61,510.1 634.77,510.1 634.93,510.1 635.09,510.1 635.25,509.0 635.41,509.0 635.57,510.1 635.73,510.1 635.90,509.0 636.06,511.1 636.22,511.1 636.38,509.0 636.54,510.1 636.70,510.1 636.86,509.0 637.02,510.1 637.18,510.1 637.35,509.0 637.51,510.1 637.67,509.0 637.83,509.0 637.99,509.0 638.15,510.1 638.31,509.0 638.47,509.0 638.63,509.0 638.79,510.1 638.96,509.0 639.12,509.0 639.28,509.0 639.44,507.9 639.60,506.8 639.76,507.9 639.92,509.0 640.08,509.0 640.24,510.1 640.41,510.1 640.57,509.0 640.73,507.9 640.89,509.0 641.05,507.9 641.21,507.9 641.37,509.0 641.53,513.3 641.69,513.3 641.85,513.3 642.02,515.4 642.18,514.4 642.34,510.1 642.50,509.0 642.66,509.0 642.82,506.8 642.98,506.8 643.14,507.9 643.30,507.9 643.46,507.9 643.63,507.9 643.79,509.0 643.95,509.0 644.11,516.5 644.27,516.5 644.43,516.5 644.59,517.6 644.75,516.5 644.91,509.0 645.08,512.2 645.24,512.2 645.40,511.1 645.56,511.1 645.72,512.2 645.88,509.0 646.04,509.0 646.20,518.7 646.36,519.7 646.52,518.7 646.69,518.7 646.85,519.7 647.01,510.1 647.17,511.1 647.33,511.1 647.49,512.2 647.65,511.1 647.81,510.1 647.97,509.0 648.13,509.0 648.30,507.9 648.46,509.0 648.62,510.1 648.78,509.0 648.94,510.1 649.10,510.1 649.26,509.0 649.42,509.0 649.58,509.0 649.75,509.0 649.91,514.4 650.07,514.4 650.23,514.4 650.39,514.4 650.55,514.4 650.71,510.1 650.87,511.1 651.03,511.1 651.19,512.2 651.36,512.2 651.52,512.2 651.68,511.1 651.84,511.1 652.00,511.1 652.16,510.1 652.32,510.1 652.48,517.6 652.64,516.5 652.81,517.6 652.97,517.6 653.13,516.5 653.29,510.1 653.45,510.1 653.61,507.9 653.77,507.9 653.93,509.0 654.09,507.9 654.25,509.0 654.42,509.0 654.58,510.1 654.74,509.0 654.90,509.0 655.06,510.1 655.22,510.1 655.38,509.0 655.54,509.0 655.70,509.0 655.86,509.0 656.03,512.2 656.19,513.3 656.35,513.3 656.51,513.3 656.67,512.2 656.83,510.1 656.99,509.0 657.15,509.0 657.31,509.0 657.48,509.0 657.64,507.9 657.80,509.0 657.96,509.0 658.12,510.1 658.28,510.1 658.44,510.1 658.60,509.0 658.76,509.0 658.92,507.9 659.09,507.9 659.25,510.1 659.41,510.1 659.57,510.1 659.73,511.1 659.89,510.1 660.05,509.0 660.21,526.2 660.37,528.3 660.54,528.3 660.70,528.3 660.86,527.3 661.02,510.1 661.18,507.9 661.34,507.9 661.50,507.9 661.66,509.0 661.82,509.0 661.98,510.1 662.15,510.1 662.31,510.1 662.47,510.1 662.63,510.1 662.79,509.0 662.95,509.0 663.11,510.1 663.27,509.0 663.43,509.0 663.59,509.0 663.76,507.9 663.92,507.9 664.08,507.9 664.24,507.9 664.40,507.9 664.56,509.0 664.72,507.9 664.88,509.0 665.04,509.0 665.21,510.1 665.37,509.0 665.53,510.1 665.69,509.0 665.85,510.1 666.01,510.1 666.17,510.1 666.33,509.0 666.49,509.0 666.65,507.9 666.82,507.9 666.98,507.9 667.14,510.1 667.30,511.1 667.46,521.9 667.62,521.9 667.78,523.0 667.94,520.8 668.10,519.7 668.26,509.0 668.43,507.9 668.59,506.8 668.75,506.8 668.91,506.8 669.07,507.9 669.23,507.9 669.39,509.0 669.55,509.0 669.71,510.1 669.88,511.1 670.04,511.1 670.20,535.9 670.36,535.9 670.52,534.8 670.68,532.6 670.84,533.7 671.00,507.9 671.16,507.9 671.32,507.9 671.49,507.9 671.65,506.8 671.81,507.9 671.97,507.9 672.13,509.0 672.29,509.0 672.45,509.0 672.61,507.9 672.77,509.0 672.94,510.1 673.10,511.1 673.26,513.3 673.42,468.1 673.58,467.0 673.74,464.9 673.90,463.8 674.06,461.7 674.22,509.0 674.38,509.0 674.55,511.1 674.71,511.1 674.87,511.1 675.03,509.0 675.19,510.1 675.35,509.0 675.51,519.7 675.67,520.8 675.83,520.8 675.99,521.9 676.16,520.8 676.32,511.1 676.48,511.1 676.64,511.1 676.80,510.1 676.96,510.1 677.12,509.0 677.28,507.9 677.44,507.9 677.61,507.9 677.77,510.1 677.93,510.1 678.09,510.1 678.25,511.1 678.41,455.2 678.57,453.1 678.73,453.1 678.89,453.1 679.05,452.0 679.22,506.8 679.38,507.9 679.54,510.1 679.70,510.1 679.86,510.1 680.02,512.2 680.18,512.2 680.34,510.1 680.50,512.2 680.67,512.2 680.83,511.1 680.99,510.1 681.15,511.1 681.31,509.0 681.47,516.5 681.63,515.4 681.79,515.4 681.95,514.4 682.11,514.4 682.28,507.9 682.44,507.9 682.60,509.0 682.76,512.2 682.92,513.3 683.08,512.2 683.24,512.2 683.40,511.1 683.56,507.9 683.72,506.8 683.89,506.8 684.05,507.9 684.21,507.9 684.37,509.0 684.53,509.0 684.69,509.0 684.85,507.9 685.01,507.9 685.17,506.8 685.34,460.6 685.50,460.6 685.66,460.6 685.82,462.7 685.98,463.8 686.14,510.1 686.30,510.1 686.46,530.5 686.62,528.3 686.78,528.3 686.95,530.5 687.11,531.6 687.27,511.1 687.43,512.2 687.59,511.1 687.75,510.1 687.91,509.0 688.07,555.2 688.23,554.1 688.39,555.2 688.56,556.3 688.72,556.3 688.88,510.1 689.04,510.1 689.20,510.1 689.36,456.3 689.52,456.3 689.68,456.3 689.84,456.3 690.01,455.2 690.17,507.9 690.33,507.9 690.49,509.0 690.65,510.1 690.81,510.1 690.97,512.2 691.13,513.3 691.29,458.4 691.45,420.8 691.62,420.8 691.78,418.6 691.94,417.6 692.10,471.3 692.26,507.9 692.42,507.9 692.58,506.8 692.74,507.9 692.90,510.1 693.07,511.1 693.23,512.2 693.39,513.3 693.55,513.3 693.71,511.1 693.87,510.1 694.03,510.1 694.19,510.1 694.35,509.0 694.51,510.1 694.68,510.1 694.84,510.1 695.00,509.0 695.16,509.0 695.32,507.9 695.48,507.9 695.64,506.8 695.80,507.9 695.96,509.0 696.12,509.0 696.29,509.0 696.45,509.0 696.61,509.0 696.77,507.9 696.93,507.9 697.09,509.0 697.25,510.1 697.41,510.1 697.57,510.1 697.74,510.1 697.90,509.0 698.06,509.0 698.22,507.9 698.38,507.9 698.54,510.1 698.70,510.1 698.86,509.0 699.02,509.0 699.18,509.0 699.35,507.9 699.51,510.1 699.67,510.1 699.83,511.1 699.99,511.1 700.15,510.1 700.31,507.9 700.47,510.1 700.63,511.1 700.80,512.2 700.96,513.3 701.12,513.3 701.28,512.2 701.44,510.1 701.60,511.1 701.76,510.1 701.92,510.1 702.08,510.1 702.24,510.1 702.41,459.5 702.57,459.5 702.73,462.7 702.89,462.7 703.05,462.7 703.21,511.1 703.37,511.1 703.53,507.9 703.69,506.8 703.85,506.8 704.02,507.9 704.18,509.0 704.34,510.1 704.50,511.1 704.66,512.2 704.82,511.1 704.98,511.1 705.14,511.1 705.30,455.2 705.47,455.2 705.63,455.2 705.79,455.2 705.95,454.1 706.11,509.0 706.27,507.9 706.43,543.4 706.59,543.4 706.75,543.4 706.91,545.5 707.08,546.6 707.24,512.2 707.40,511.1 707.56,512.2 707.72,510.1 707.88,509.0 708.04,509.0 708.20,509.0 708.36,507.9 708.52,509.0 708.69,509.0 708.85,507.9 709.01,507.9 709.17,510.1 709.33,509.0 709.49,510.1 709.65,510.1 709.81,510.1 709.97,510.1 710.14,516.5 710.30,516.5 710.46,516.5 710.62,499.3 710.78,497.1 710.94,490.7 711.10,490.7 711.26,491.8 711.42,510.1 711.58,510.1 711.75,512.2 711.91,512.2 712.07,513.3 712.23,459.5 712.39,459.5 712.55,457.4 712.71,457.4 712.87,455.2 713.03,510.1 713.20,512.2 713.36,528.3 713.52,527.3 713.68,528.3 713.84,526.2 714.00,524.0 714.16,507.9 714.32,507.9 714.48,506.8 714.64,506.8 714.81,507.9 714.97,507.9 715.13,507.9 715.29,461.7 715.45,461.7 715.61,461.7 715.77,462.7 715.93,463.8 716.09,510.1 716.25,510.1 716.42,509.0 716.58,509.0 716.74,507.9 716.90,509.0 717.06,510.1 717.22,463.8 717.38,462.7 717.54,409.0 717.70,410.0 717.87,410.0 718.03,457.4 718.19,457.4 718.35,468.1 718.51,422.9 718.67,378.9 718.83,367.0 718.99,367.0 719.15,411.1 719.31,456.3 719.48,501.4 719.64,512.2 719.80,513.3 719.96,512.2 720.12,511.1 720.28,509.0 720.44,510.1 720.60,510.1 720.76,511.1 720.93,511.1 721.09,512.2 721.25,511.1 721.41,510.1 721.57,509.0 721.73,509.0 721.89,507.9 722.05,509.0 722.21,509.0 722.37,515.4 722.54,515.4 722.70,516.5 722.86,515.4 723.02,515.4 723.18,510.1 723.34,455.2 723.50,455.2 723.66,461.7 723.82,463.8 723.98,462.7 724.15,517.6 724.31,517.6 724.47,511.1 724.63,509.0 724.79,510.1 724.95,510.1 725.11,509.0 725.27,457.4 725.43,458.4 725.60,457.4 725.76,456.3 725.92,457.4 726.08,509.0 726.24,509.0 726.40,549.8 726.56,549.8 726.72,549.8 726.88,549.8 727.04,548.8 727.21,507.9 727.37,507.9 727.53,510.1 727.69,511.1 727.85,512.2 728.01,512.2 728.17,512.2 728.33,509.0 728.49,510.1 728.65,509.0 728.82,509.0 728.98,510.1 729.14,511.1 729.30,511.1 729.46,512.2 729.62,512.2 729.78,511.1 729.94,511.1 730.10,509.0 730.27,509.0 730.43,509.0 730.59,510.1 730.75,510.1 730.91,510.1 731.07,511.1 731.23,511.1 731.39,511.1 731.55,510.1 731.71,510.1 731.88,509.0 732.04,509.0 732.20,509.0 732.36,510.1 732.52,511.1 732.68,511.1 732.84,511.1 733.00,512.2 733.16,512.2 733.33,512.2 733.49,512.2 733.65,512.2 733.81,510.1 733.97,517.6 734.13,516.5 734.29,529.4 734.45,529.4 734.61,530.5 734.77,521.9 734.94,521.9 735.10,507.9 735.26,507.9 735.42,506.8 735.58,507.9 735.74,507.9 735.90,507.9 736.06,507.9 736.22,507.9 736.38,507.9 736.55,507.9 736.71,507.9 736.87,509.0 737.03,509.0 737.19,510.1 737.35,457.4 737.51,458.4 737.67,459.5 737.83,459.5 738.00,458.4 738.16,512.2 738.32,511.1 738.48,510.1 738.64,510.1 738.80,509.0 738.96,509.0 739.12,509.0 739.28,507.9 739.44,507.9 739.61,509.0 739.77,510.1 739.93,510.1 740.09,511.1 740.25,511.1 740.41,511.1 740.57,510.1 740.73,512.2 740.89,511.1 741.06,513.3 741.22,512.2 741.38,512.2 741.54,510.1 741.70,510.1 741.86,510.1 742.02,510.1 742.18,509.0 742.34,509.0 742.50,510.1 742.67,510.1 742.83,514.4 742.99,514.4 743.15,514.4 743.31,513.3 743.47,511.1 743.63,506.8 743.79,506.8 743.95,506.8 744.11,506.8 744.28,506.8 744.44,507.9 744.60,507.9 744.76,507.9 744.92,507.9 745.08,507.9 745.24,507.9 745.40,513.3 745.56,513.3 745.73,514.4 745.89,514.4 746.05,513.3 746.21,507.9 746.37,457.4 746.53,456.3 746.69,457.4 746.85,457.4 747.01,458.4 747.17,511.1 747.34,459.5 747.50,458.4 747.66,458.4 747.82,457.4 747.98,455.2 748.14,509.0 748.30,510.1 748.46,510.1 748.62,510.1 748.78,510.1 748.95,507.9 749.11,506.8 749.27,509.0 749.43,510.1 749.59,511.1 749.75,511.1 749.91,511.1 750.07,510.1 750.23,461.7 750.40,461.7 750.56,461.7 750.72,462.7 750.88,462.7 751.04,511.1 751.20,510.1 751.36,460.6 751.52,459.5 751.68,458.4 751.84,457.4 752.01,459.5 752.17,509.0 752.33,510.1 752.49,511.1 752.65,511.1 752.81,509.0 752.97,509.0 753.13,507.9 753.29,506.8 753.46,506.8 753.62,507.9 753.78,507.9 753.94,509.0 754.10,511.1 754.26,511.1 754.42,510.1 754.58,510.1 754.74,509.0 754.90,506.8 755.07,506.8 755.23,507.9 755.39,514.4 755.55,514.4 755.71,515.4 755.87,516.5 756.03,516.5 756.19,510.1 756.35,511.1 756.51,510.1 756.68,509.0 756.84,510.1 757.00,510.1 757.16,509.0 757.32,509.0 757.48,510.1 757.64,507.9 757.80,507.9 757.96,507.9 758.13,509.0 758.29,509.0 758.45,509.0 758.61,509.0 758.77,509.0 758.93,507.9 759.09,506.8 759.25,506.8 759.41,506.8 759.57,506.8 759.74,509.0 759.90,509.0 760.06,509.0 760.22,509.0 760.38,509.0 760.54,506.8 760.70,507.9 760.86,509.0 761.02,510.1 761.19,511.1 761.35,513.3 761.51,512.2 761.67,512.2 761.83,511.1 761.99,511.1 762.15,509.0 762.31,511.1 762.47,510.1 762.63,511.1 762.80,511.1 762.96,512.2 763.12,510.1 763.28,510.1 763.44,510.1 763.60,510.1 763.76,510.1 763.92,510.1 764.08,511.1 764.24,511.1 764.41,510.1 764.57,511.1 764.73,511.1 764.89,511.1 765.05,513.3 765.21,513.3 765.37,511.1 765.53,512.2 765.69,512.2 765.86,509.0 766.02,509.0 766.18,511.1 766.34,511.1 766.50,510.1 766.66,510.1 766.82,510.1 766.98,509.0 767.14,509.0 767.30,510.1 767.47,510.1 767.63,510.1 767.79,509.0 767.95,509.0 768.11,507.9 768.27,509.0 768.43,509.0 768.59,509.0 768.75,509.0 768.91,509.0 769.08,507.9 769.24,509.0 769.40,510.1 769.56,509.0 769.72,510.1 769.88,510.1 770.04,511.1 770.20,511.1 770.36,511.1 770.53,512.2 770.69,512.2 770.85,510.1 771.01,510.1 771.17,510.1 771.33,456.3 771.49,456.3 771.65,473.5 771.81,474.6 771.97,474.6 772.14,526.2 772.30,527.3 772.46,510.1 772.62,509.0 772.78,509.0 772.94,509.0 773.10,509.0 773.26,510.1 773.42,510.1 773.59,512.2 773.75,512.2 773.91,511.1 774.07,511.1 774.23,510.1 774.39,507.9 774.55,507.9 774.71,507.9 774.87,506.8 775.03,506.8 775.20,507.9 775.36,458.4 775.52,458.4 775.68,458.4 775.84,459.5 776.00,458.4 776.16,509.0 776.32,509.0 776.48,509.0 776.64,509.0 776.81,511.1 776.97,510.1 777.13,510.1 777.29,510.1 777.45,509.0 777.61,506.8 777.77,506.8 777.93,507.9 778.09,509.0 778.26,510.1 778.42,456.3 778.58,457.4 778.74,459.5 778.90,460.6 779.06,460.6 779.22,514.4 779.38,514.4 779.54,511.1 779.70,509.0 779.87,509.0 780.03,510.1 780.19,509.0 780.35,509.0 780.51,511.1 780.67,510.1 780.83,509.0 780.99,510.1 781.15,511.1 781.32,509.0 781.48,509.0 781.64,509.0 781.80,507.9 781.96,509.0 782.12,511.1 782.28,511.1 782.44,513.3 782.60,514.4 782.76,513.3 782.93,511.1 783.09,511.1 783.25,509.0 783.41,509.0 783.57,511.1 783.73,511.1 783.89,512.2 784.05,513.3 784.21,512.2 784.37,509.0 784.54,510.1 784.70,509.0 784.86,507.9 785.02,507.9 785.18,507.9 785.34,506.8 785.50,510.1 785.66,511.1 785.82,512.2 785.99,512.2 786.15,513.3 786.31,510.1 786.47,509.0 786.63,507.9 786.79,507.9 786.95,507.9 787.11,509.0 787.27,509.0 787.43,509.0 787.60,509.0 787.76,507.9 787.92,506.8 788.08,506.8 788.24,506.8 788.40,506.8 788.56,506.8 788.72,506.8 788.88,506.8 789.04,506.8 789.21,507.9 789.37,507.9 789.53,509.0 789.69,510.1 789.85,510.1 790.01,509.0 790.17,509.0 790.33,507.9 790.49,507.9 790.66,507.9 790.82,507.9 790.98,509.0 791.14,509.0 791.30,511.1 791.46,512.2 791.62,512.2 791.78,511.1 791.94,512.2 792.10,510.1 792.27,509.0 792.43,509.0 792.59,509.0 792.75,509.0 792.91,507.9 793.07,507.9 793.23,509.0 793.39,510.1 793.55,509.0 793.72,510.1 793.88,510.1 794.04,510.1 794.20,509.0 794.36,509.0 794.52,507.9 794.68,509.0 794.84,509.0 795.00,509.0 795.16,509.0 795.33,509.0 795.49,509.0 795.65,509.0 795.81,509.0 795.97,510.1 796.13,511.1 796.29,511.1 796.45,510.1 796.61,510.1 796.77,510.1 796.94,509.0 797.10,507.9 797.26,507.9 797.42,507.9 797.58,506.8 797.74,506.8 797.90,506.8 798.06,507.9 798.22,507.9 798.39,507.9 798.55,507.9 798.71,507.9 798.87,509.0 799.03,510.1 799.19,510.1 799.35,510.1 799.51,511.1 799.67,509.0 799.83,507.9 800.00,507.9 800.16,507.9 800.32,507.9 800.48,509.0 800.64,510.1 800.80,511.1 800.96,511.1 801.12,511.1 801.28,511.1 801.45,510.1 801.61,510.1 801.77,513.3 801.93,513.3 802.09,512.2 802.25,513.3 802.41,512.2 802.57,509.0 802.73,507.9 802.89,507.9 803.06,507.9 803.22,510.1 803.38,510.1 803.54,510.1 803.70,510.1 803.86,510.1 804.02,509.0 804.18,509.0 804.34,509.0 804.50,509.0 804.67,507.9 804.83,506.8 804.99,506.8 805.15,506.8 805.31,506.8 805.47,506.8 805.63,507.9 805.79,509.0 805.95,509.0 806.12,510.1 806.28,510.1 806.44,511.1 806.60,510.1 806.76,510.1 806.92,510.1 807.08,510.1 807.24,509.0 807.40,509.0 807.56,512.2 807.73,511.1 807.89,511.1 808.05,510.1 808.21,510.1 808.37,506.8 808.53,507.9 808.69,509.0 808.85,509.0 809.01,509.0 809.17,509.0 809.34,510.1 809.50,510.1 809.66,510.1 809.82,510.1 809.98,510.1 810.14,507.9 810.30,506.8 810.46,506.8 810.62,507.9 810.79,507.9 810.95,509.0 811.11,509.0 811.27,509.0 811.43,509.0 811.59,509.0 811.75,512.2 811.91,514.4 812.07,514.4 812.23,513.3 812.40,514.4 812.56,511.1 812.72,510.1 812.88,510.1 813.04,511.1 813.20,510.1 813.36,511.1 813.52,511.1 813.68,511.1 813.85,510.1 814.01,511.1 814.17,509.0 814.33,507.9 814.49,509.0 814.65,510.1 814.81,510.1 814.97,511.1 815.13,511.1 815.29,510.1 815.46,509.0 815.62,507.9 815.78,506.8 815.94,506.8 816.10,507.9 816.26,511.1 816.42,512.2 816.58,512.2 816.74,512.2 816.90,511.1 817.07,509.0 817.23,507.9 817.39,507.9 817.55,507.9 817.71,507.9 817.87,507.9 818.03,507.9 818.19,509.0 818.35,509.0 818.52,509.0 818.68,509.0 818.84,511.1 819.00,510.1 819.16,510.1 819.32,511.1 819.48,511.1 819.64,509.0 819.80,510.1 819.96,511.1 820.13,510.1 820.29,509.0 820.45,509.0 820.61,507.9 820.77,506.8 820.93,507.9 821.09,509.0 821.25,509.0 821.41,509.0 821.58,511.1 821.74,510.1 821.90,510.1 822.06,511.1 822.22,511.1 822.38,509.0 822.54,510.1 822.70,509.0 822.86,507.9 823.02,509.0 823.19,509.0 823.35,507.9 823.51,507.9 823.67,509.0 823.83,509.0 823.99,510.1 824.15,510.1 824.31,511.1 824.47,510.1 824.63,509.0 824.80,507.9 824.96,507.9 825.12,506.8 825.28,506.8 825.44,506.8 825.60,507.9 825.76,509.0 825.92,510.1 826.08,510.1 826.25,511.1 826.41,510.1 826.57,509.0 826.73,507.9 826.89,507.9 827.05,509.0 827.21,510.1 827.37,510.1 827.53,511.1 827.69,511.1 827.86,509.0 828.02,507.9 828.18,509.0 828.34,510.1 828.50,512.2 828.66,512.2 828.82,514.4 828.98,513.3 829.14,511.1 829.30,510.1 829.47,510.1 829.63,507.9 829.79,507.9 829.95,507.9 830.11,506.8 830.27,454.1 830.43,455.2 830.59,455.2 830.75,455.2 830.92,455.2 831.08,507.9 831.24,507.9 831.40,507.9 831.56,513.3 831.72,513.3 831.88,513.3 832.04,513.3 832.20,514.4 832.36,509.0 832.53,511.1 832.69,511.1 832.85,510.1 833.01,509.0 833.17,511.1 833.33,509.0 833.49,510.1 833.65,511.1 833.81,512.2 833.98,510.1 834.14,511.1 834.30,512.2 834.46,511.1 834.62,510.1 834.78,510.1 834.94,510.1 835.10,507.9 835.26,507.9 835.42,507.9 835.59,507.9 835.75,506.8 835.91,506.8 836.07,506.8 836.23,454.1 836.39,454.1 836.55,455.2 836.71,455.2 836.87,455.2 837.03,507.9 837.20,507.9 837.36,506.8 837.52,507.9 837.68,507.9 837.84,512.2 838.00,512.2 838.16,513.3 838.32,458.4 838.48,458.4 838.65,454.1 838.81,454.1 838.97,453.1 839.13,507.9 839.29,509.0 839.45,510.1 839.61,511.1 839.77,512.2 839.93,511.1 840.09,510.1 840.26,509.0 840.42,509.0 840.58,507.9 840.74,509.0 840.90,509.0 841.06,509.0 841.22,509.0 841.38,510.1 841.54,510.1 841.71,510.1 841.87,511.1 842.03,510.1 842.19,509.0 842.35,507.9 842.51,509.0 842.67,507.9 842.83,507.9 842.99,509.0 843.15,510.1 843.32,509.0 843.48,509.0 843.64,509.0 843.80,509.0 843.96,509.0 844.12,509.0 844.28,510.1 844.44,510.1 844.60,509.0 844.76,507.9 844.93,509.0 845.09,507.9 845.25,509.0 845.41,509.0 845.57,510.1 845.73,509.0 845.89,510.1 846.05,510.1 846.21,510.1 846.38,509.0 846.54,509.0 846.70,509.0 846.86,507.9 847.02,507.9 847.18,507.9 847.34,509.0 847.50,507.9 847.66,509.0 847.82,510.1 847.99,511.1 848.15,511.1 848.31,512.2 848.47,512.2 848.63,511.1 848.79,510.1 848.95,509.0 849.11,507.9 849.27,507.9 849.43,509.0 849.60,509.0 849.76,510.1 849.92,510.1 850.08,509.0 850.24,507.9 850.40,507.9 850.56,506.8 850.72,506.8 850.88,506.8 851.05,507.9 851.21,507.9 851.37,507.9 851.53,509.0 851.69,509.0 851.85,507.9 852.01,507.9 852.17,507.9 852.33,507.9 852.49,507.9 852.66,509.0 852.82,510.1 852.98,510.1 853.14,509.0 853.30,510.1 853.46,509.0 853.62,507.9 853.78,509.0 853.94,510.1 854.11,509.0 854.27,510.1 854.43,510.1 854.59,509.0 854.75,507.9 854.91,507.9 855.07,509.0 855.23,509.0 855.39,510.1 855.55,511.1 855.72,511.1 855.88,509.0 856.04,510.1 856.20,510.1 856.36,511.1 856.52,513.3 856.68,513.3 856.84,513.3 857.00,513.3 857.16,511.1 857.33,510.1 857.49,510.1 857.65,509.0 857.81,509.0 857.97,510.1 858.13,509.0 858.29,510.1 858.45,510.1 858.61,509.0 858.78,507.9 858.94,510.1 859.10,510.1 859.26,511.1 859.42,514.4 859.58,515.4 859.74,532.6 859.90,531.6 860.06,531.6 860.22,528.3 860.39,529.4 860.55,510.1 860.71,510.1 860.87,510.1 861.03,510.1 861.19,509.0 861.35,524.0 861.51,526.2 861.67,525.1 861.84,525.1 862.00,524.0 862.16,509.0 862.32,506.8 862.48,507.9 862.64,507.9 862.80,509.0 862.96,510.1 863.12,511.1 863.28,511.1 863.45,512.2 863.61,512.2 863.77,514.4 863.93,513.3 864.09,514.4 864.25,513.3 864.41,513.3 864.57,510.1 864.73,510.1 864.89,509.0 865.06,509.0 865.22,507.9 865.38,507.9 865.54,507.9 865.70,507.9"/>
<polyline stroke="#EDB120" stroke-width="3.6" stroke-linecap="round" points="60.50,442.3 60.66,443.0 61.14,443.6 61.63,444.3 62.11,444.9 62.59,445.5 63.08,446.0 63.56,446.6 64.04,447.1 64.53,447.6 65.01,448.2 65.49,448.6 65.98,449.0 66.46,449.4 66.94,449.8 67.42,450.3 67.91,450.7 68.39,451.2 68.87,451.6 69.36,452.0 69.84,452.3 70.32,452.7 70.81,453.1 71.29,453.5 71.77,453.9 72.26,454.2 72.74,454.6 73.22,455.0 73.71,455.3 74.19,455.6 74.67,455.8 75.15,456.1 75.64,456.3 76.12,456.7 76.60,457.0 77.09,457.1 77.57,457.5 78.05,457.8 78.54,458.0 79.02,458.4 79.50,458.6 79.99,458.8 80.47,458.9 80.95,459.1 81.44,459.3 81.92,459.6 82.40,459.7 82.88,460.0 83.37,460.1 83.85,460.5 84.33,460.5 84.82,460.8 85.30,461.1 85.78,461.3 86.27,461.5 86.75,461.8 87.23,461.9 87.72,462.1 88.20,462.5 88.68,462.6 89.17,462.9 89.65,463.0 90.13,463.1 90.61,463.2 91.10,463.3 91.58,463.3 92.06,463.5 92.55,463.8 93.03,463.6 93.51,463.6 94.00,464.1 94.48,464.3 94.96,464.3 95.45,464.7 95.93,464.9 96.41,464.9 96.90,465.0 97.38,465.1 97.86,464.8 98.34,464.9 98.83,465.1 99.31,465.0 99.79,464.9 100.28,465.0 100.76,465.1 101.24,465.1 101.73,465.6 102.21,465.9 102.69,466.2 103.18,466.3 103.66,466.5 104.14,466.5 104.62,466.7 105.11,467.0 105.59,467.2 106.07,467.3 106.56,467.0 107.04,467.2 107.52,467.3 108.01,467.4 108.49,467.5 108.97,467.6 109.46,467.6 109.94,467.8 110.42,468.0 110.91,468.2 111.39,468.3 111.87,468.4 112.35,468.6 112.84,468.6 113.32,469.0 113.80,469.0 114.29,469.1 114.77,469.4 115.25,469.3 115.74,469.6 116.22,469.7 116.70,470.2 117.19,470.0 117.67,469.9 118.15,469.8 118.64,469.8 119.12,469.7 119.60,469.8 120.08,469.7 120.57,469.8 121.05,469.8 121.53,469.8 122.02,470.0 122.50,470.1 122.98,470.6 123.47,470.8 123.95,471.0 124.43,471.1 124.92,471.1 125.40,471.6 125.88,471.8 126.37,472.0 126.85,471.9 127.33,471.8 127.81,471.8 128.30,471.9 128.78,471.8 129.26,472.1 129.75,471.9 130.23,472.0 130.71,472.1 131.20,472.4 131.68,472.3 132.16,472.4 132.65,472.7 133.13,472.6 133.61,472.9 134.10,473.1 134.58,473.0 135.06,473.2 135.54,473.4 136.03,473.8 136.51,473.4 136.99,473.4 137.48,473.5 137.96,473.4 138.44,473.4 138.93,473.4 139.41,473.1 139.89,473.0 140.38,473.1 140.86,473.6 141.34,473.6 141.83,473.8 142.31,474.0 142.79,474.1 143.27,474.2 143.76,474.7 144.24,474.8 144.72,474.7 145.21,474.7 145.69,474.4 146.17,474.8 146.66,474.9 147.14,475.0 147.62,475.2 148.11,475.3 148.59,475.9 149.07,475.7 149.56,476.0 150.04,475.9 150.52,475.9 151.00,475.7 151.49,475.7 151.97,475.6 152.45,475.6 152.94,476.0 153.42,476.0 153.90,476.2 154.39,476.6 154.87,477.0 155.35,477.0 155.84,477.2 156.32,477.5 156.80,477.7 157.29,477.4 157.77,477.5 158.25,477.8 158.73,477.4 159.22,477.5 159.70,477.3 160.18,477.3 160.67,477.4 161.15,477.4 161.63,477.5 162.12,477.6 162.60,477.4 163.08,477.3 163.57,477.6 164.05,477.9 164.53,477.8 165.01,478.0 165.50,478.0 165.98,477.9 166.46,478.1 166.95,478.3 167.43,478.2 167.91,478.2 168.40,478.2 168.88,478.4 169.36,478.4 169.85,478.5 170.33,478.5 170.81,478.6 171.30,478.7 171.78,478.7 172.26,478.5 172.74,478.3 173.23,478.6 173.71,478.6 174.19,478.8 174.68,478.9 175.16,478.9 175.64,479.0 176.13,479.5 176.61,479.5 177.09,479.6 177.58,479.5 178.06,479.5 178.54,479.6 179.03,479.7 179.51,480.1 179.99,480.0 180.47,479.9 180.96,479.9 181.44,479.7 181.92,479.8 182.41,479.9 182.89,479.9 183.37,479.6 183.86,479.7 184.34,479.8 184.82,480.2 185.31,480.5 185.79,480.7 186.27,480.8 186.76,481.0 187.24,481.1 187.72,481.1 188.20,481.3 188.69,481.6 189.17,481.6 189.65,481.5 190.14,481.5 190.62,481.4 191.10,481.7 191.59,481.9 192.07,481.7 192.55,481.6 193.04,481.4 193.52,481.5 194.00,481.6 194.49,481.7 194.97,482.0 195.45,482.0 195.93,482.1 196.42,482.5 196.90,482.5 197.38,482.9 197.87,483.0 198.35,482.7 198.83,482.4 199.32,482.6 199.80,482.6 200.28,482.3 200.77,482.4 201.25,482.6 201.73,482.6 202.22,482.8 202.70,482.9 203.18,483.1 203.66,483.0 204.15,483.2 204.63,483.3 205.11,483.2 205.60,483.3 206.08,483.0 206.56,483.2 207.05,483.4 207.53,483.2 208.01,483.2 208.50,482.9 208.98,482.8 209.46,482.9 209.95,482.7 210.43,483.0 210.91,483.0 211.39,483.2 211.88,483.2 212.36,483.5 212.84,483.7 213.33,483.7 213.81,483.9 214.29,483.9 214.78,483.9 215.26,484.0 215.74,484.3 216.23,484.4 216.71,484.6 217.19,484.7 217.68,484.7 218.16,484.8 218.64,484.8 219.12,485.0 219.61,485.1 220.09,484.9 220.57,485.3 221.06,485.3 221.54,485.7 222.02,485.7 222.51,486.0 222.99,486.3 223.47,486.5 223.96,486.6 224.44,486.4 224.92,486.2 225.40,486.1 225.89,486.0 226.37,486.1 226.85,486.1 227.34,485.7 227.82,485.5 228.30,485.8 228.79,486.0 229.27,486.0 229.75,486.1 230.24,486.1 230.72,485.9 231.20,486.1 231.69,486.3 232.17,486.4 232.65,486.2 233.13,486.4 233.62,486.5 234.10,486.7 234.58,487.0 235.07,487.1 235.55,487.0 236.03,487.0 236.52,487.2 237.00,487.2 237.48,487.5 237.97,487.6 238.45,487.9 238.93,488.0 239.42,488.3 239.90,488.8 240.38,489.0 240.86,489.1 241.35,489.2 241.83,489.1 242.31,488.8 242.80,488.7 243.28,488.7 243.76,488.6 244.25,488.7 244.73,488.7 245.21,488.6 245.70,488.6 246.18,488.6 246.66,488.7 247.15,488.9 247.63,489.1 248.11,489.0 248.59,488.6 249.08,488.5 249.56,488.6 250.04,488.5 250.53,488.7 251.01,488.6 251.49,488.4 251.98,488.5 252.46,488.9 252.94,489.1 253.43,489.4 253.91,489.4 254.39,489.3 254.88,489.6 255.36,489.4 255.84,489.5 256.32,489.7 256.81,489.5 257.29,489.6 257.77,489.7 258.26,489.6 258.74,489.4 259.22,489.4 259.71,489.4 260.19,489.5 260.67,489.3 261.16,489.1 261.64,489.0 262.12,489.0 262.61,489.0 263.09,489.3 263.57,489.3 264.05,488.9 264.54,488.9 265.02,488.8 265.50,488.8 265.99,488.7 266.47,488.6 266.95,488.6 267.44,488.5 267.92,488.7 268.40,488.8 268.89,488.9 269.37,489.0 269.85,489.4 270.34,489.4 270.82,489.6 271.30,489.7 271.78,489.8 272.27,489.8 272.75,489.9 273.23,489.8 273.72,489.5 274.20,489.5 274.68,489.1 275.17,489.4 275.65,489.3 276.13,489.4 276.62,489.7 277.10,490.0 277.58,490.2 278.07,490.5 278.55,491.0 279.03,490.7 279.51,490.8 280.00,490.6 280.48,490.6 280.96,490.7 281.45,490.7 281.93,490.8 282.41,490.8 282.90,491.1 283.38,491.3 283.86,491.6 284.35,492.3 284.83,492.5 285.31,492.6 285.79,492.6 286.28,492.8 286.76,492.9 287.24,493.1 287.73,493.0 288.21,493.1 288.69,492.7 289.18,492.8 289.66,492.9 290.14,493.0 290.63,492.6 291.11,492.7 291.59,492.7 292.08,492.7 292.56,493.0 293.04,493.1 293.52,493.5 294.01,493.1 294.49,493.6 294.97,493.6 295.46,493.8 295.94,493.8 296.42,493.7 296.91,493.8 297.39,494.1 297.87,494.2 298.36,494.2 298.84,494.4 299.32,494.6 299.81,494.9 300.29,495.2 300.77,495.1 301.25,494.9 301.74,494.6 302.22,494.4 302.70,494.2 303.19,494.0 303.67,494.0 304.15,493.9 304.64,493.9 305.12,493.8 305.60,494.2 306.09,494.3 306.57,494.5 307.05,494.9 307.54,495.1 308.02,495.0 308.50,495.0 308.98,495.2 309.47,495.1 309.95,495.3 310.43,495.5 310.92,495.3 311.40,494.9 311.88,494.8 312.37,494.9 312.85,495.0 313.33,494.6 313.82,494.7 314.30,494.9 314.78,495.1 315.27,495.1 315.75,495.2 316.23,495.5 316.71,495.7 317.20,495.8 317.68,495.9 318.16,495.5 318.65,495.7 319.13,495.7 319.61,495.8 320.10,495.4 320.58,495.2 321.06,495.6 321.55,495.6 322.03,496.0 322.51,496.2 323.00,496.6 323.48,496.4 323.96,496.9 324.44,497.2 324.93,497.5 325.41,497.6 325.89,497.6 326.38,497.6 326.86,497.7 327.34,498.1 327.83,498.6 328.31,498.5 328.79,498.5 329.28,498.7 329.76,498.8 330.24,498.9 330.73,498.8 331.21,499.0 331.69,499.3 332.17,499.2 332.66,499.3 333.14,499.4 333.62,499.6 334.11,499.8 334.59,500.0 335.07,499.9 335.56,500.3 336.04,500.4 336.52,500.6 337.01,501.0 337.49,500.9 337.97,501.1 338.46,501.3 338.94,501.3 339.42,501.3 339.90,501.1 340.39,501.1 340.87,501.1 341.35,500.8 341.84,500.6 342.32,501.0 342.80,501.2 343.29,500.9 343.77,501.1 344.25,501.3 344.74,501.4 345.22,501.9 345.70,502.5 346.18,502.7 346.67,502.9 347.15,502.9 347.63,503.0 348.12,502.9 348.60,502.9 349.08,502.6 349.57,502.2 350.05,502.1 350.53,501.9 351.02,502.0 351.50,502.1 351.98,502.7 352.47,502.9 352.95,503.1 353.43,503.6 353.91,503.7 354.40,504.1 354.88,504.2 355.36,504.4 355.85,504.2 356.33,504.0 356.81,503.6 357.30,503.9 357.78,503.9 358.26,503.9 358.75,503.8 359.23,503.6 359.71,503.6 360.20,503.9 360.68,504.1 361.16,504.1 361.64,503.6 362.13,503.9 362.61,504.0 363.09,504.2 363.58,504.6 364.06,504.6 364.54,504.3 365.03,504.8 365.51,504.9 365.99,504.7 366.48,504.8 366.96,505.0 367.44,505.0 367.93,504.8 368.41,504.8 368.89,504.8 369.37,505.0 369.86,505.1 370.34,505.2 370.82,505.2 371.31,505.4 371.79,505.5 372.27,505.8 372.76,505.9 373.24,505.9 373.72,505.7 374.21,505.7 374.69,505.8 375.17,506.1 375.66,506.0 376.14,506.0 376.62,506.0 377.10,506.1 377.59,506.5 378.07,506.6 378.55,506.5 379.04,506.6 379.52,506.6 380.00,506.6 380.49,506.9 380.97,507.0 381.45,506.7 381.94,506.7 382.42,506.8 382.90,506.6 383.39,506.4 383.87,506.6 384.35,506.5 384.83,506.6 385.32,506.6 385.80,506.7 386.28,507.0 386.77,506.6 387.25,506.7 387.73,506.7 388.22,506.6 388.70,506.7 389.18,506.8 389.67,506.8 390.15,506.6 390.63,506.6 391.12,506.6 391.60,506.6 392.08,506.5 392.56,506.5 393.05,506.6 393.53,506.7 394.01,506.9 394.50,506.7 394.98,506.8 395.46,507.1 395.95,507.0 396.43,506.9 396.91,506.7 397.40,506.6 397.88,506.4 398.36,506.5 398.85,506.4 399.33,506.3 399.81,506.2 400.29,506.5 400.78,506.5 401.26,506.5 401.74,506.6 402.23,506.6 402.71,506.8 403.19,506.9 403.68,506.7 404.16,506.8 404.64,507.0 405.13,507.0 405.61,507.0 406.09,507.0 406.57,507.0 407.06,506.9 407.54,507.0 408.02,507.1 408.51,507.0 408.99,507.0 409.47,507.0 409.96,507.0 410.44,507.0 410.92,507.1 411.41,507.0 411.89,506.9 412.37,506.9 412.86,506.8 413.34,506.8 413.82,506.9 414.30,506.8 414.79,506.8 415.27,506.9 415.75,506.9 416.24,506.9 416.72,506.9 417.20,506.9 417.69,506.9 418.17,507.0 418.65,507.0 419.14,506.9 419.62,506.9 420.10,506.9 420.59,506.9 421.07,507.0 421.55,506.9 422.03,506.9 422.52,507.0 423.00,507.1 423.48,507.0 423.97,507.0 424.45,507.1 424.93,507.2 425.42,507.1 425.90,507.2 426.38,507.2 426.87,507.2 427.35,507.3 427.83,507.3 428.32,507.3 428.80,507.3 429.28,507.3 429.76,507.2 430.25,507.3 430.73,507.2 431.21,507.1 431.70,507.2 432.18,507.1 432.66,507.0 433.15,507.1 433.63,507.1 434.11,507.0 434.60,507.0 435.08,507.1 435.56,507.1 436.05,507.1 436.53,507.1 437.01,507.1 437.49,507.1 437.98,507.1 438.46,507.1 438.94,507.1 439.43,507.1 439.91,507.2 440.39,507.2 440.88,507.2 441.36,507.1 441.84,507.1 442.33,507.1 442.81,507.1 443.29,507.1 443.78,507.0 444.26,507.0 444.74,507.1 445.22,507.1 445.71,507.1 446.19,507.2 446.67,507.2 447.16,507.3 447.64,507.3 448.12,507.3 448.61,507.3 449.09,507.4 449.57,507.4 450.06,507.5 450.54,507.5 451.02,507.5 451.51,507.5 451.99,507.5 452.47,507.4 452.95,507.4 453.44,507.4 453.92,507.4 454.40,507.3 454.89,507.3 455.37,507.2 455.85,507.2 456.34,507.2 456.82,507.3 457.30,507.2 457.79,507.2 458.27,507.2 458.75,507.2 459.24,507.4 459.72,507.4 460.20,507.3 460.68,507.4 461.17,507.4 461.65,507.4 462.13,507.5 462.62,507.5 463.10,507.5 463.58,507.5 464.07,507.5 464.55,507.5 465.03,507.5 465.52,507.5 466.00,507.5 466.48,507.4 466.96,507.4 467.45,507.5 467.93,507.5 468.41,507.5 468.90,507.5 469.38,507.5 469.86,507.5 470.35,507.5 470.83,507.5 471.31,507.4 471.80,507.5 472.28,507.5 472.76,507.5 473.25,507.4 473.73,507.4 474.21,507.3 474.69,507.4 475.18,507.4 475.66,507.3 476.14,507.3 476.63,507.3 477.11,507.3 477.59,507.3 478.08,507.3 478.56,507.4 479.04,507.4 479.53,507.5 480.01,507.5 480.49,507.5 480.98,507.4 481.46,507.5 481.94,507.6 482.42,507.6 482.91,507.5 483.39,507.5 483.87,507.5 484.36,507.4 484.84,507.5 485.32,507.5 485.81,507.5 486.29,507.5 486.77,507.5 487.26,507.5 487.74,507.4 488.22,507.3 488.71,507.4 489.19,507.3 489.67,507.2 490.15,507.2 490.64,507.2 491.12,507.2 491.60,507.2 492.09,507.3 492.57,507.2 493.05,507.3 493.54,507.3 494.02,507.3 494.50,507.4 494.99,507.5 495.47,507.5 495.95,507.5 496.44,507.5 496.92,507.5 497.40,507.4 497.88,507.5 498.37,507.5 498.85,507.5 499.33,507.4 499.82,507.3 500.30,507.4 500.78,507.4 501.27,507.5 501.75,507.4 502.23,507.3 502.72,507.3 503.20,507.4 503.68,507.3 504.17,507.3 504.65,507.3 505.13,507.3 505.61,507.2 506.10,507.3 506.58,507.3 507.06,507.3 507.55,507.3 508.03,507.4 508.51,507.4 509.00,507.4 509.48,507.5 509.96,507.4 510.45,507.4 510.93,507.5 511.41,507.5 511.90,507.5 512.38,507.5 512.86,507.5 513.34,507.5 513.83,507.6 514.31,507.6 514.79,507.6 515.28,507.6 515.76,507.6 516.24,507.6 516.73,507.5 517.21,507.5 517.69,507.5 518.18,507.5 518.66,507.5 519.14,507.4 519.63,507.4 520.11,507.4 520.59,507.3 521.07,507.3 521.56,507.3 522.04,507.3 522.52,507.2 523.01,507.2 523.49,507.3 523.97,507.3 524.46,507.3 524.94,507.4 525.42,507.4 525.91,507.4 526.39,507.4 526.87,507.3 527.35,507.3 527.84,507.3 528.32,507.3 528.80,507.2 529.29,507.2 529.77,507.2 530.25,507.2 530.74,507.2 531.22,507.2 531.70,507.3 532.19,507.3 532.67,507.3 533.15,507.3 533.64,507.3 534.12,507.3 534.60,507.3 535.08,507.3 535.57,507.2 536.05,507.3 536.53,507.3 537.02,507.3 537.50,507.4 537.98,507.4 538.47,507.4 538.95,507.4 539.43,507.4 539.92,507.4 540.40,507.4 540.88,507.4 541.37,507.4 541.85,507.3 542.33,507.3 542.81,507.3 543.30,507.3 543.78,507.3 544.26,507.3 544.75,507.4 545.23,507.2 545.71,507.2 546.20,507.2 546.68,507.2 547.16,507.2 547.65,507.2 548.13,507.3 548.61,507.2 549.10,507.2 549.58,507.2 550.06,507.3 550.54,507.3 551.03,507.3 551.51,507.3 551.99,507.2 552.48,507.2 552.96,507.3 553.44,507.3 553.93,507.3 554.41,507.3 554.89,507.3 555.38,507.3 555.86,507.4 556.34,507.4 556.83,507.4 557.31,507.3 557.79,507.3 558.27,507.4 558.76,507.3 559.24,507.3 559.72,507.3 560.21,507.3 560.69,507.2 561.17,507.3 561.66,507.3 562.14,507.4 562.62,507.4 563.11,507.5 563.59,507.4 564.07,507.4 564.56,507.4 565.04,507.3 565.52,507.4 566.00,507.3 566.49,507.2 566.97,507.2 567.45,507.3 567.94,507.2 568.42,507.2 568.90,507.2 569.39,507.2 569.87,507.1 570.35,507.1 570.84,507.1 571.32,507.2 571.80,507.3 572.29,507.3 572.77,507.3 573.25,507.4 573.73,507.4 574.22,507.4 574.70,507.4 575.18,507.4 575.67,507.3 576.15,507.3 576.63,507.4 577.12,507.3 577.60,507.3 578.08,507.2 578.57,507.2 579.05,507.3 579.53,507.3 580.02,507.3 580.50,507.4 580.98,507.4 581.46,507.4 581.95,507.4 582.43,507.4 582.91,507.4 583.40,507.4 583.88,507.4 584.36,507.4 584.85,507.4 585.33,507.3 585.81,507.4 586.30,507.3 586.78,507.4 587.26,507.4 587.74,507.3 588.23,507.3 588.71,507.4 589.19,507.4 589.68,507.4 590.16,507.5 590.64,507.4 591.13,507.3 591.61,507.3 592.09,507.3 592.58,507.2 593.06,507.2 593.54,507.2 594.03,507.1 594.51,507.1 594.99,507.1 595.47,507.2 595.96,507.3 596.44,507.3 596.92,507.3 597.41,507.3 597.89,507.3 598.37,507.4 598.86,507.4 599.34,507.4 599.82,507.3 600.31,507.3 600.79,507.3 601.27,507.3 601.76,507.3 602.24,507.3 602.72,507.3 603.20,507.3 603.69,507.4 604.17,507.4 604.65,507.4 605.14,507.4 605.62,507.3 606.10,507.3 606.59,507.3 607.07,507.3 607.55,507.3 608.04,507.3 608.52,507.2 609.00,507.3 609.49,507.4 609.97,507.3 610.45,507.4 610.93,507.3 611.42,507.3 611.90,507.3 612.38,507.3 612.87,507.3 613.35,507.3 613.83,507.3 614.32,507.2 614.80,507.2 615.28,507.2 615.77,507.1 616.25,507.2 616.73,507.2 617.22,507.1 617.70,507.1 618.18,507.2 618.66,507.3 619.15,507.3 619.63,507.4 620.11,507.4 620.60,507.4 621.08,507.4 621.56,507.4 622.05,507.5 622.53,507.4 623.01,507.4 623.50,507.4 623.98,507.4 624.46,507.4 624.95,507.3 625.43,507.4 625.91,507.4 626.39,507.4 626.88,507.4 627.36,507.4 627.84,507.4 628.33,507.5 628.81,507.5 629.29,507.5 629.78,507.4 630.26,507.3 630.74,507.3 631.23,507.3 631.71,507.2 632.19,507.2 632.68,507.3 633.16,507.3 633.64,507.3 634.12,507.3 634.61,507.4 635.09,507.4 635.57,507.4 636.06,507.4 636.54,507.4 637.02,507.3 637.51,507.3 637.99,507.4 638.47,507.3 638.96,507.3 639.44,507.3 639.92,507.3 640.41,507.3 640.89,507.3 641.37,507.2 641.85,507.2 642.34,507.2 642.82,507.3 643.30,507.3 643.79,507.3 644.27,507.2 644.75,507.2 645.24,507.1 645.72,507.2 646.20,507.1 646.69,507.2 647.17,507.2 647.65,507.2 648.13,507.3 648.62,507.4 649.10,507.3 649.58,507.4 650.07,507.4 650.55,507.4 651.03,507.4 651.52,507.4 652.00,507.3 652.48,507.4 652.97,507.4 653.45,507.3 653.93,507.4 654.42,507.3 654.90,507.3 655.38,507.2 655.86,507.3 656.35,507.3 656.83,507.2 657.31,507.3 657.80,507.2 658.28,507.3 658.76,507.3 659.25,507.3 659.73,507.3 660.21,507.2 660.70,507.3 661.18,507.3 661.66,507.3 662.15,507.3 662.63,507.3 663.11,507.3 663.59,507.3 664.08,507.3 664.56,507.2 665.04,507.2 665.53,507.2 666.01,507.3 666.49,507.3 666.98,507.2 667.46,507.2 667.94,507.3 668.43,507.3 668.91,507.3 669.39,507.3 669.88,507.3 670.36,507.3 670.84,507.2 671.32,507.3 671.81,507.3 672.29,507.3 672.77,507.2 673.26,507.2 673.74,507.2 674.22,507.2 674.71,507.2 675.19,507.1 675.67,507.1 676.16,507.2 676.64,507.2 677.12,507.3 677.61,507.3 678.09,507.3 678.57,507.3 679.05,507.3 679.54,507.3 680.02,507.3 680.50,507.2 680.99,507.3 681.47,507.3 681.95,507.3 682.44,507.3 682.92,507.3 683.40,507.3 683.89,507.2 684.37,507.2 684.85,507.2 685.34,507.2 685.82,507.2 686.30,507.2 686.78,507.2 687.27,507.2 687.75,507.3 688.23,507.3 688.72,507.4 689.20,507.3 689.68,507.4 690.17,507.4 690.65,507.3 691.13,507.3 691.62,507.3 692.10,507.3 692.58,507.2 693.07,507.2 693.55,507.2 694.03,507.2 694.51,507.3 695.00,507.3 695.48,507.4 695.96,507.3 696.45,507.4 696.93,507.4 697.41,507.3 697.90,507.3 698.38,507.2 698.86,507.2 699.35,507.1 699.83,507.1 700.31,507.1 700.80,507.1 701.28,507.1 701.76,507.1 702.24,507.1 702.73,507.1 703.21,507.2 703.69,507.2 704.18,507.2 704.66,507.1 705.14,507.1 705.63,507.1 706.11,507.1 706.59,507.2 707.08,507.2 707.56,507.3 708.04,507.3 708.52,507.3 709.01,507.4 709.49,507.3 709.97,507.3 710.46,507.3 710.94,507.3 711.42,507.2 711.91,507.2 712.39,507.2 712.87,507.1 713.36,507.2 713.84,507.2 714.32,507.2 714.81,507.2 715.29,507.2 715.77,507.3 716.25,507.3 716.74,507.3 717.22,507.2 717.70,507.2 718.19,507.3 718.67,507.3 719.15,507.3 719.64,507.3 720.12,507.2 720.60,507.3 721.09,507.3 721.57,507.2 722.05,507.2 722.54,507.1 723.02,507.1 723.50,507.1 723.98,507.2 724.47,507.2 724.95,507.1 725.43,507.2 725.92,507.2 726.40,507.2 726.88,507.1 727.37,507.1 727.85,507.1 728.33,507.1 728.82,507.1 729.30,507.1 729.78,507.0 730.27,507.0 730.75,507.0 731.23,507.0 731.71,507.1 732.20,507.1 732.68,507.1 733.16,507.1 733.65,507.1 734.13,507.1 734.61,507.2 735.10,507.2 735.58,507.2 736.06,507.3 736.55,507.3 737.03,507.3 737.51,507.4 738.00,507.4 738.48,507.4 738.96,507.4 739.44,507.4 739.93,507.4 740.41,507.4 740.89,507.4 741.38,507.4 741.86,507.3 742.34,507.3 742.83,507.2 743.31,507.3 743.79,507.2 744.28,507.2 744.76,507.2 745.24,507.1 745.73,507.2 746.21,507.2 746.69,507.2 747.17,507.2 747.66,507.1 748.14,507.2 748.62,507.3 749.11,507.3 749.59,507.2 750.07,507.3 750.56,507.3 751.04,507.3 751.52,507.4 752.01,507.3 752.49,507.3 752.97,507.2 753.46,507.3 753.94,507.3 754.42,507.3 754.90,507.3 755.39,507.3 755.87,507.3 756.35,507.2 756.84,507.3 757.32,507.2 757.80,507.2 758.29,507.1 758.77,507.1 759.25,507.1 759.74,507.1 760.22,507.2 760.70,507.2 761.19,507.2 761.67,507.3 762.15,507.2 762.63,507.2 763.12,507.2 763.60,507.2 764.08,507.1 764.57,507.2 765.05,507.2 765.53,507.3 766.02,507.3 766.50,507.3 766.98,507.3 767.47,507.4 767.95,507.5 768.43,507.5 768.91,507.4 769.40,507.4 769.88,507.4 770.36,507.3 770.85,507.3 771.33,507.3 771.81,507.2 772.30,507.2 772.78,507.2 773.26,507.3 773.75,507.2 774.23,507.2 774.71,507.2 775.20,507.2 775.68,507.3 776.16,507.2 776.64,507.1 777.13,507.1 777.61,507.2 778.09,507.1 778.58,507.1 779.06,507.1 779.54,507.0 780.03,507.1 780.51,507.2 780.99,507.2 781.48,507.2 781.96,507.2 782.44,507.1 782.93,507.1 783.41,507.3 783.89,507.3 784.37,507.3 784.86,507.3 785.34,507.3 785.82,507.4 786.31,507.4 786.79,507.4 787.27,507.3 787.76,507.3 788.24,507.3 788.72,507.2 789.21,507.2 789.69,507.2 790.17,507.2 790.66,507.1 791.14,507.1 791.62,507.1 792.10,507.1 792.59,507.2 793.07,507.2 793.55,507.2 794.04,507.3 794.52,507.3 795.00,507.4 795.49,507.4 795.97,507.4 796.45,507.4 796.94,507.4 797.42,507.4 797.90,507.3 798.39,507.4 798.87,507.4 799.35,507.3 799.83,507.3 800.32,507.3 800.80,507.3 801.28,507.3 801.77,507.3 802.25,507.3 802.73,507.2 803.22,507.2 803.70,507.2 804.18,507.2 804.67,507.2 805.15,507.1 805.63,507.2 806.12,507.2 806.60,507.2 807.08,507.2 807.56,507.3 808.05,507.3 808.53,507.2 809.01,507.3 809.50,507.2 809.98,507.2 810.46,507.2 810.95,507.2 811.43,507.2 811.91,507.2 812.40,507.2 812.88,507.2 813.36,507.3 813.85,507.3 814.33,507.2 814.81,507.2 815.29,507.2 815.78,507.1 816.26,507.1 816.74,507.1 817.23,507.2 817.71,507.2 818.19,507.3 818.68,507.3 819.16,507.3 819.64,507.3 820.13,507.3 820.61,507.3 821.09,507.3 821.58,507.3 822.06,507.2 822.54,507.2 823.02,507.2 823.51,507.2 823.99,507.2 824.47,507.3 824.96,507.3 825.44,507.3 825.92,507.3 826.41,507.3 826.89,507.4 827.37,507.3 827.86,507.3 828.34,507.2 828.82,507.2 829.30,507.2 829.79,507.3 830.27,507.2 830.75,507.2 831.24,507.3 831.72,507.3 832.20,507.3 832.69,507.3 833.17,507.3 833.65,507.3 834.14,507.3 834.62,507.3 835.10,507.3 835.59,507.2 836.07,507.3 836.55,507.2 837.03,507.2 837.52,507.2 838.00,507.2 838.48,507.2 838.97,507.2 839.45,507.2 839.93,507.2 840.42,507.2 840.90,507.3 841.38,507.3 841.87,507.4 842.35,507.3 842.83,507.3 843.32,507.2 843.80,507.2 844.28,507.1 844.76,507.1 845.25,507.1 845.73,507.1 846.21,507.1 846.70,507.1 847.18,507.1 847.66,507.2 848.15,507.3 848.63,507.3 849.11,507.2 849.60,507.3 850.08,507.3 850.56,507.3 851.05,507.3 851.53,507.3 852.01,507.3 852.49,507.2 852.98,507.2 853.46,507.2 853.94,507.2 854.43,507.2 854.91,507.2 855.39,507.3 855.88,507.2 856.36,507.2 856.84,507.2 857.33,507.2 857.81,507.2 858.29,507.3 858.78,507.2 859.26,507.2 859.74,507.2 860.22,507.3 860.71,507.3 861.19,507.3 861.67,507.4 862.16,507.4 862.64,507.3 863.12,507.3 863.61,507.3 864.09,507.3 864.57,507.2 865.06,507.2 865.54,507.2 865.70,507.2"/>
<g stroke="#D1048B" stroke-width="1.3">
<path d="M71.5 711.3h10.0M76.5 706.3v10.0M73.0 707.8l7.1 7.1M73.0 714.8l7.1 -7.1"/>
<path d="M87.5 514.3h10.0M92.5 509.3v10.0M89.0 510.8l7.1 7.1M89.0 517.8l7.1 -7.1"/>
<path d="M103.5 538.3h10.0M108.5 533.3v10.0M105.0 534.8l7.1 7.1M105.0 541.8l7.1 -7.1"/>
<path d="M119.5 711.3h10.0M124.5 706.3v10.0M121.0 707.8l7.1 7.1M121.0 714.8l7.1 -7.1"/>
<path d="M135.5 514.3h10.0M140.5 509.3v10.0M137.0 510.8l7.1 7.1M137.0 517.8l7.1 -7.1"/>
<path d="M151.5 518.3h10.0M156.5 513.3v10.0M153.0 514.8l7.1 7.1M153.0 521.8l7.1 -7.1"/>
<path d="M167.5 711.3h10.0M172.5 706.3v10.0M169.0 707.8l7.1 7.1M169.0 714.8l7.1 -7.1"/>
<path d="M183.5 512.3h10.0M188.5 507.3v10.0M185.0 508.8l7.1 7.1M185.0 515.8l7.1 -7.1"/>
<path d="M200.5 532.3h10.0M205.5 527.3v10.0M202.0 528.8l7.1 7.1M202.0 535.8l7.1 -7.1"/>
<path d="M216.5 711.3h10.0M221.5 706.3v10.0M218.0 707.8l7.1 7.1M218.0 714.8l7.1 -7.1"/>
<path d="M232.5 539.3h10.0M237.5 534.3v10.0M234.0 535.8l7.1 7.1M234.0 542.8l7.1 -7.1"/>
<path d="M248.5 557.3h10.0M253.5 552.3v10.0M250.0 553.8l7.1 7.1M250.0 560.8l7.1 -7.1"/>
<path d="M264.5 543.3h10.0M269.5 538.3v10.0M266.0 539.8l7.1 7.1M266.0 546.8l7.1 -7.1"/>
<path d="M280.5 454.3h10.0M285.5 449.3v10.0M282.0 450.8l7.1 7.1M282.0 457.8l7.1 -7.1"/>
<path d="M296.5 442.3h10.0M301.5 437.3v10.0M298.0 438.8l7.1 7.1M298.0 445.8l7.1 -7.1"/>
<path d="M312.5 540.3h10.0M317.5 535.3v10.0M314.0 536.8l7.1 7.1M314.0 543.8l7.1 -7.1"/>
<path d="M328.5 711.3h10.0M333.5 706.3v10.0M330.0 707.8l7.1 7.1M330.0 714.8l7.1 -7.1"/>
<path d="M345.5 711.3h10.0M350.5 706.3v10.0M347.0 707.8l7.1 7.1M347.0 714.8l7.1 -7.1"/>
<path d="M361.5 469.3h10.0M366.5 464.3v10.0M363.0 465.8l7.1 7.1M363.0 472.8l7.1 -7.1"/>
<path d="M377.5 475.3h10.0M382.5 470.3v10.0M379.0 471.8l7.1 7.1M379.0 478.8l7.1 -7.1"/>
<path d="M393.5 557.3h10.0M398.5 552.3v10.0M395.0 553.8l7.1 7.1M395.0 560.8l7.1 -7.1"/>
<path d="M409.5 523.3h10.0M414.5 518.3v10.0M411.0 519.8l7.1 7.1M411.0 526.8l7.1 -7.1"/>
<path d="M425.5 530.3h10.0M430.5 525.3v10.0M427.0 526.8l7.1 7.1M427.0 533.8l7.1 -7.1"/>
<path d="M441.5 512.3h10.0M446.5 507.3v10.0M443.0 508.8l7.1 7.1M443.0 515.8l7.1 -7.1"/>
<path d="M457.5 514.3h10.0M462.5 509.3v10.0M459.0 510.8l7.1 7.1M459.0 517.8l7.1 -7.1"/>
<path d="M473.5 512.3h10.0M478.5 507.3v10.0M475.0 508.8l7.1 7.1M475.0 515.8l7.1 -7.1"/>
<path d="M489.5 530.3h10.0M494.5 525.3v10.0M491.0 526.8l7.1 7.1M491.0 533.8l7.1 -7.1"/>
<path d="M506.5 521.3h10.0M511.5 516.3v10.0M508.0 517.8l7.1 7.1M508.0 524.8l7.1 -7.1"/>
<path d="M522.5 530.3h10.0M527.5 525.3v10.0M524.0 526.8l7.1 7.1M524.0 533.8l7.1 -7.1"/>
<path d="M538.5 521.3h10.0M543.5 516.3v10.0M540.0 517.8l7.1 7.1M540.0 524.8l7.1 -7.1"/>
<path d="M554.5 530.3h10.0M559.5 525.3v10.0M556.0 526.8l7.1 7.1M556.0 533.8l7.1 -7.1"/>
<path d="M570.5 516.3h10.0M575.5 511.3v10.0M572.0 512.8l7.1 7.1M572.0 519.8l7.1 -7.1"/>
<path d="M586.5 530.3h10.0M591.5 525.3v10.0M588.0 526.8l7.1 7.1M588.0 533.8l7.1 -7.1"/>
<path d="M602.5 512.3h10.0M607.5 507.3v10.0M604.0 508.8l7.1 7.1M604.0 515.8l7.1 -7.1"/>
<path d="M619.5 512.3h10.0M624.5 507.3v10.0M621.0 508.8l7.1 7.1M621.0 515.8l7.1 -7.1"/>
<path d="M635.5 512.3h10.0M640.5 507.3v10.0M637.0 508.8l7.1 7.1M637.0 515.8l7.1 -7.1"/>
<path d="M651.5 530.3h10.0M656.5 525.3v10.0M653.0 526.8l7.1 7.1M653.0 533.8l7.1 -7.1"/>
<path d="M667.5 530.3h10.0M672.5 525.3v10.0M669.0 526.8l7.1 7.1M669.0 533.8l7.1 -7.1"/>
<path d="M683.5 530.3h10.0M688.5 525.3v10.0M685.0 526.8l7.1 7.1M685.0 533.8l7.1 -7.1"/>
<path d="M699.5 486.3h10.0M704.5 481.3v10.0M701.0 482.8l7.1 7.1M701.0 489.8l7.1 -7.1"/>
<path d="M715.5 455.3h10.0M720.5 450.3v10.0M717.0 451.8l7.1 7.1M717.0 458.8l7.1 -7.1"/>
<path d="M731.5 455.3h10.0M736.5 450.3v10.0M733.0 451.8l7.1 7.1M733.0 458.8l7.1 -7.1"/>
<path d="M747.5 459.3h10.0M752.5 454.3v10.0M749.0 455.8l7.1 7.1M749.0 462.8l7.1 -7.1"/>
<path d="M763.5 459.3h10.0M768.5 454.3v10.0M765.0 455.8l7.1 7.1M765.0 462.8l7.1 -7.1"/>
<path d="M780.5 459.3h10.0M785.5 454.3v10.0M782.0 455.8l7.1 7.1M782.0 462.8l7.1 -7.1"/>
<path d="M796.5 459.3h10.0M801.5 454.3v10.0M798.0 455.8l7.1 7.1M798.0 462.8l7.1 -7.1"/>
<path d="M812.5 482.3h10.0M817.5 477.3v10.0M814.0 478.8l7.1 7.1M814.0 485.8l7.1 -7.1"/>
<path d="M828.5 459.3h10.0M833.5 454.3v10.0M830.0 455.8l7.1 7.1M830.0 462.8l7.1 -7.1"/>
<path d="M844.5 459.3h10.0M849.5 454.3v10.0M846.0 455.8l7.1 7.1M846.0 462.8l7.1 -7.1"/>
<path d="M860.5 459.3h10.0M865.5 454.3v10.0M862.0 455.8l7.1 7.1M862.0 462.8l7.1 -7.1"/>
</g></g>
<g fill="#2e2e2e" font-size="12px">
<text x="60.8" y="780" text-anchor="middle">0</text>
<text x="141.3" y="780" text-anchor="middle">500</text>
<text x="221.8" y="780" text-anchor="middle">1000</text>
<text x="302.4" y="780" text-anchor="middle">1500</text>
<text x="382.9" y="780" text-anchor="middle">2000</text>
<text x="463.4" y="780" text-anchor="middle">2500</text>
<text x="543.9" y="780" text-anchor="middle">3000</text>
<text x="624.4" y="780" text-anchor="middle">3500</text>
<text x="705.0" y="780" text-anchor="middle">4000</text>
<text x="785.5" y="780" text-anchor="middle">4500</text>
<text x="866.0" y="780" text-anchor="middle">5000</text>
<text x="56" y="769.2" text-anchor="end">-60</text>
<text x="56" y="661.7" text-anchor="end">-40</text>
<text x="56" y="554.1" text-anchor="end">-20</text>
<text x="56" y="446.6" text-anchor="end">0</text>
<text x="56" y="339.1" text-anchor="end">20</text>
<text x="56" y="231.5" text-anchor="end">40</text>
<text x="56" y="124.0" text-anchor="end">60</text>
</g>
<text x="463.3" y="114.3" text-anchor="middle" font-size="13.2px" font-weight="bold" fill="#2e2e2e">Episode reward for rlMDPEnv with rlQAgent</text>
<text x="463.3" y="795" text-anchor="middle" font-size="13.2px" fill="#2e2e2e">Episode Number</text>
<text transform="translate(32.3,443.2) rotate(-90)" text-anchor="middle" font-size="13.2px" fill="#2e2e2e">Episode Reward</text>
</svg>
<div id="rp" class="abs" style="position:absolute;left:0;top:0">
<div style="left:910px;top:96px;width:160px;height:15px;background:#268cdd"></div>
<div style="left:1080px;top:91px;width:110px;height:25px;border:1px solid #d2d2d2;border-radius:4px;background:#f5f5f5"></div>
<div class="lbl" style="left:1091px;top:96px;color:#b3b3b3">Training stopped</div>
<div class="lbl" style="left:910px;top:127px">Episode number:</div><div class="lbl" style="left:1040px;top:127px">5000/5000</div>
<div class="lbl" style="left:910px;top:152px">Start time:</div><div class="lbl" style="left:1040px;top:152px">02-Apr-2025 18:24:11</div>
<div class="lbl" style="left:910px;top:177px">Duration:</div><div class="lbl" style="left:1040px;top:177px">00:44:54</div>
<div class="lbl" style="left:910px;top:202px">Final result:</div>
<div class="lbl" style="left:1040px;top:201px;line-height:15px;white-space:normal;width:130px">Training finished with maximum number of episodes.</div>

<div class="panel abs" style="left:910px;top:257px;width:280px;height:295px">
 <div class="phead"><span>Training Information</span></div>
 <div style="left:10px;top:30px;width:258px;height:95px;border:1px solid #7d7d7d;background:#fff"></div>
 <div style="left:11px;top:31px;width:256px;height:27px;background:#f5f5f5;border-bottom:1px solid #7d7d7d"></div>
 <div style="left:139.5px;top:31px;width:1px;height:49.5px;background:#7d7d7d"></div>
 <div style="left:11px;top:58px;width:256px;height:22.5px;background:#268cdd"></div>
 <div style="left:139.5px;top:58px;width:1px;height:22.5px;background:#6a8fb0"></div>
 <div class="lbl" style="left:13.7px;top:37.8px;font-weight:bold;font-size:12px">Agent</div>
 <div class="lbl" style="left:142.7px;top:37.8px;font-weight:bold;font-size:12px;letter-spacing:-0.45px">Status</div>
 <div class="lbl" style="left:13.7px;top:61px;color:#fff;text-shadow:0 0 0.4px #fff">rlQAgent</div>
 <div class="lbl" style="left:142.9px;top:61px;color:#fff;text-shadow:0 0 0.4px #fff">Training finished</div>
 <div class="lbl" style="left:10px;top:136px;font-weight:bold">Episode Information (rlQAgent):</div>
 <div class="lbl" style="left:10px;top:161px">Episode reward:</div><div class="lbl" style="left:130px;top:161px">-12</div>
 <div class="lbl" style="left:10px;top:186px">Average reward:</div><div class="lbl" style="left:130px;top:186px">-12.2</div>
 <div class="lbl" style="left:10px;top:211px">Episode Q0:</div><div class="lbl" style="left:130px;top:211px">-12.1617</div>
 <div class="lbl" style="left:10px;top:236px">Evaluation statistic:</div><div class="lbl" style="left:130px;top:236px">-3.2</div>
 <div style="left:158px;top:260px;width:110px;height:23px;border:1px solid #7d7d7d;border-radius:4px;background:#f5f5f5"></div>
 <div class="lbl" style="left:174.5px;top:264px">More Details...</div>
</div>

<div class="panel abs" style="left:910px;top:562px;width:280px;height:118px">
 <div class="phead"><span>Plot Options</span></div>
 <div class="cb" style="left:10px;top:31px"></div>
 <div class="cb" style="left:10px;top:58px"></div>
 <div class="cb" style="left:10px;top:88px"></div>
 <svg style="left:10px;top:31px" width="14" height="14" viewBox="0 0 14 14" fill="none" stroke="#1a1a1a" stroke-width="1.9"><path d="M2.8 7.2l2.9 3.1l5.6-7"/></svg>
 <svg style="left:10px;top:58px" width="14" height="14" viewBox="0 0 14 14" fill="none" stroke="#1a1a1a" stroke-width="1.9"><path d="M2.8 7.2l2.9 3.1l5.6-7"/></svg>
 <div class="lbl" style="left:27.5px;top:31px">Show EpisodeQ0</div>
 <div class="lbl" style="left:27.5px;top:58px">Show evaluation statistic</div>
 <div class="lbl" style="left:27.5px;top:87px">Show last N episodes</div>
 <div style="left:154px;top:83px;width:114px;height:23px;border:1px solid #d6d6d6;background:#f5f5f5"></div>
 <div class="lbl" style="left:154px;top:88px;width:109.3px;text-align:right;color:#a6a6a6">5000</div>
</div>

<div class="panel abs" style="left:910px;top:690px;width:280px;height:102px">
<svg style="position:absolute;left:0;top:0" width="279" height="100" viewBox="912 692 279 100" font-family="'Liberation Sans',sans-serif">
<rect x="917" y="697" width="268" height="90" fill="#fff"/>
<path d="M973.4 704.4H1013" stroke="#2FBEEF" stroke-width="1.1"/><circle cx="993.4" cy="704.4" r="1.5" fill="#2FBEEF"/>
<text x="1017" y="708.2" font-size="10.75px" fill="#212121">Episode reward</text>
<path d="M973.4 723.2H1013" stroke="#1171BE" stroke-width="1.1"/><circle cx="993.4" cy="723.2" r="1.5" fill="#1171BE"/>
<text x="1017" y="727.0" font-size="10.75px" fill="#212121">Average reward</text>
<path d="M973.4 742.0H1013" stroke="#EDB120" stroke-width="1.1"/><circle cx="993.4" cy="742.0" r="1.5" fill="#EDB120"/>
<text x="1017" y="745.8" font-size="10.75px" fill="#212121">Episode Q0</text>
<g stroke="#D1048B" stroke-width="1.1" fill="none"><path d="M989.0 770.4h8.8M993.4 766.0v8.8M990.3 767.3l6.2 6.2M990.3 773.5l6.2 -6.2"/></g>
<text x="1017" y="769.3" font-size="10.75px" fill="#212121">Evaluation statistic</text>
<text x="1017" y="781.1" font-size="10.75px" fill="#212121">(MeanEpisodeReward)</text>
<rect x="1062.5" y="693" width="129" height="22" fill="#fff"/>
<g fill="none" stroke="#5e5e5e" stroke-width="1.1" stroke-linecap="round" stroke-linejoin="round">
<g stroke="#b4b4b4"><path d="M1065.6 705.8h12.6v2.8h-12.6z"/><path d="M1078.4 710v-2.4l2.4 2.4z" fill="#b4b4b4" stroke-width="0.5"/><path d="M1067.9 705.2c0.3-3.6 2.6-5.6 6.3-5.7v-3l4.6 3.6l-4.6 3.6v-2.2c-2.4 0-3.6 1.2-4.3 3.7"/></g>
<path d="M1094.2 695.7h4.4v5.9l1.2 1.4v7.3h-13.2l4.6-3.2l1.9-4.1l1.1-1.4z"/><path d="M1091.4 704.6h8.2M1090.4 707.3h9.2" stroke-width="0.8"/><path d="M1086.6 710.4l13.2-2.6v2.6z" fill="#3c3c3c" stroke="#3c3c3c" stroke-width="0.6"/>
<path d="M1107.3 695.4h13.1v14.9h-13.1v-5.6l-1.9-1.9l1.9-1.9z"/><path d="M1110.2 701.3h8.2M1110.2 704.3h8.2"/>
<path d="M1131.4 710.3c-1.9-1.7-4.2-4.6-5.5-7c-0.6-1.3 1-2.1 1.9-0.9l2 2.5v-7.4c0-1.5 2.4-1.5 2.4 0v-1.5c0-1.5 2.5-1.5 2.5 0v1c0-1.5 2.5-1.5 2.5 0v1.8c0-1.4 2.4-1.4 2.4 0v6c0 2.2-0.7 4-1.8 5.5z"/>
<circle cx="1151.7" cy="701.6" r="5.9"/><path d="M1156 705.9l4.4 4.5M1148.4 701.6h6.6M1151.7 698.3v6.6"/>
<circle cx="1171.5" cy="701.4" r="5.9"/><path d="M1175.8 705.7l4.7 4.7M1168.2 701.4h6.6"/>
<path d="M1185.3 702.3l5.6-4.9M1187.8 702.6v7.8h3.4"/>
</g>
</svg>
</div>
</div>

<div id="status" class="abs">
<svg style="left:1185px;top:5px" width="10" height="13" viewBox="0 0 10 12" preserveAspectRatio="none"><path d="M0.5 0.5L6.5 6L0.5 11.5Z" fill="#8c8c8c"/><rect x="7" y="0.5" width="2" height="11" fill="#8c8c8c"/></svg>
</div>
</div>
</body></html>
